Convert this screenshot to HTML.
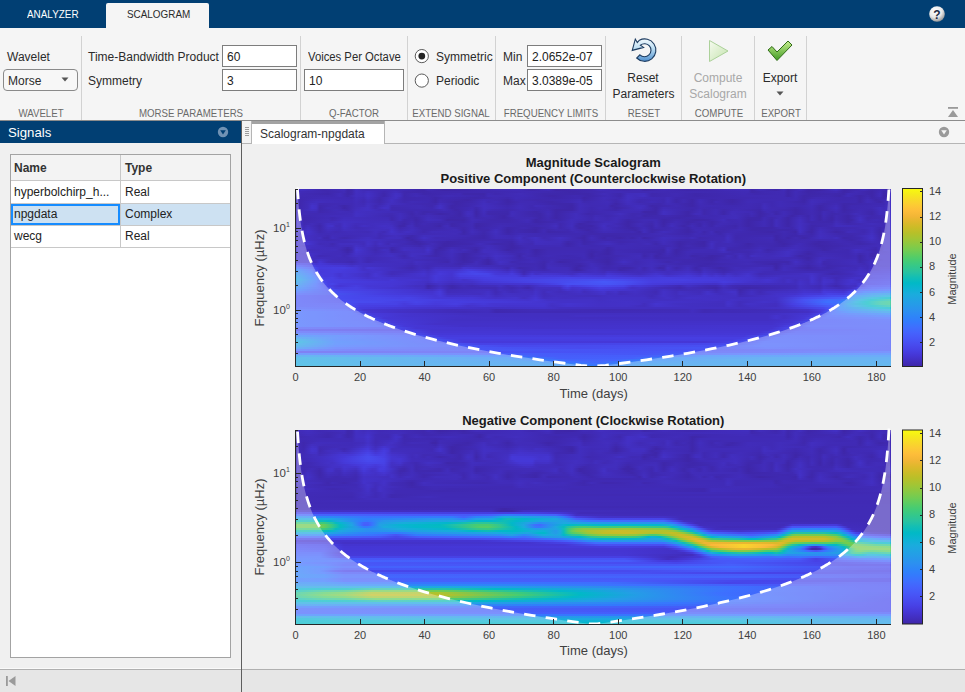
<!DOCTYPE html>
<html><head><meta charset="utf-8">
<style>
*{margin:0;padding:0;box-sizing:border-box}
html,body{width:965px;height:692px;overflow:hidden;background:#f0f0f0;font-family:"Liberation Sans",sans-serif;color:#222;position:relative}
.a{position:absolute}
.t{position:absolute;white-space:nowrap;line-height:12px;height:12px}
.sq{display:inline-block;transform-origin:0 0}
.tab{font-size:11px}
.sep{position:absolute;top:36px;width:1px;height:84px;background:#d2d2d2}
.lab{font-size:12px;color:#2b2b2b}
.sec{font-size:11px;color:#6a6a6a;text-align:center;width:0}
.sec span{display:inline-block;transform:translateX(-50%) scaleX(.88)}
.inp{position:absolute;background:#fff;border:1px solid #7d7d7d}
.inp span{position:absolute;left:4px;top:5px;font-size:12px;color:#222;line-height:12px}
.ctr{text-align:center;width:0}
.ctr span{display:inline-block;transform:translateX(-50%)}
</style></head><body>
<!-- top bar -->
<div class="a" style="left:0;top:0;width:965px;height:28px;background:#013f73"></div>
<div class="t tab" style="left:27px;top:8px;color:#fff"><span class="sq" style="transform:scaleX(.9)">ANALYZER</span></div>
<div class="a" style="left:106px;top:3px;width:103px;height:25px;background:#f5f5f5;border-radius:2px 2px 0 0"></div>
<div class="t tab" style="left:127px;top:8px;color:#2b2b2b"><span class="sq" style="transform:scaleX(.9)">SCALOGRAM</span></div>
<svg class="a" style="left:928px;top:5px" width="18" height="18" viewBox="0 0 18 18">
<defs><radialGradient id="hg" cx="40%" cy="30%" r="70%"><stop offset="0" stop-color="#ffffff"/><stop offset=".6" stop-color="#e8e8e8"/><stop offset="1" stop-color="#9a9a9a"/></radialGradient></defs>
<circle cx="9" cy="9" r="7.8" fill="url(#hg)"/>
<text x="9" y="13.6" text-anchor="middle" font-family="Liberation Sans" font-weight="bold" font-size="12" fill="#1d2a44">?</text>
</svg>
<!-- toolstrip -->
<div class="a" style="left:0;top:28px;width:965px;height:92px;background:#f5f5f5"></div>
<div class="a" style="left:0;top:120px;width:965px;height:1px;background:#8c8c8c"></div>
<div class="sep" style="left:81px"></div>
<div class="sep" style="left:300px"></div>
<div class="sep" style="left:407px"></div>
<div class="sep" style="left:495px"></div>
<div class="sep" style="left:605px"></div>
<div class="sep" style="left:681px"></div>
<div class="sep" style="left:754px"></div>
<div class="sep" style="left:806px"></div>

<div class="t lab" style="left:7px;top:51px">Wavelet</div>
<div class="a" style="left:3px;top:69px;width:75px;height:22px;border:1px solid #8a8a8a;border-radius:4px;background:#f7f7f7"></div>
<div class="t lab" style="left:8px;top:75px">Morse</div>
<svg class="a" style="left:61px;top:77px" width="9" height="6"><path d="M0.5 0.5 L7.5 0.5 L4 4.5Z" fill="#555"/></svg>

<div class="t lab" style="left:88px;top:51px">Time-Bandwidth Product</div>
<div class="t lab" style="left:88px;top:75px">Symmetry</div>
<div class="inp" style="left:222px;top:45px;width:75px;height:22px"><span>60</span></div>
<div class="inp" style="left:222px;top:69px;width:75px;height:22px"><span>3</span></div>

<div class="t lab" style="left:308px;top:51px"><span class="sq" style="transform:scaleX(.94)">Voices Per Octave</span></div>
<div class="inp" style="left:304px;top:69px;width:100px;height:22px"><span>10</span></div>

<svg class="a" style="left:413px;top:47px" width="18" height="42">
<circle cx="8.8" cy="9.1" r="6.6" fill="#fff" stroke="#5a5a5a" stroke-width="1"/>
<circle cx="8.8" cy="9.1" r="3.4" fill="#222"/>
<circle cx="8.8" cy="33.6" r="6.6" fill="#fff" stroke="#5a5a5a" stroke-width="1"/>
</svg>
<div class="t lab" style="left:436px;top:51px">Symmetric</div>
<div class="t lab" style="left:436px;top:75px">Periodic</div>

<div class="t lab" style="left:503px;top:51px">Min</div>
<div class="t lab" style="left:503px;top:75px">Max</div>
<div class="inp" style="left:527px;top:45px;width:75px;height:22px"><span>2.0652e-07</span></div>
<div class="inp" style="left:527px;top:69px;width:75px;height:22px"><span>3.0389e-05</span></div>

<!-- reset icon -->
<svg class="a" style="left:626px;top:34px" width="36" height="32" viewBox="0 0 36 32">
<defs><linearGradient id="rg" x1="0" y1="0" x2="0" y2="1"><stop offset="0" stop-color="#f2f9fd"/><stop offset=".45" stop-color="#b9dcf2"/><stop offset="1" stop-color="#4f8fce"/></linearGradient></defs>
<path d="M10.7 24.0 A11.2 11.2 0 1 0 13.4 6.25 L11.3 8.6 L9.3 5.1 L6.25 16.4 L17.6 13.4 L14.4 11.15 A6.5 6.5 0 1 1 13.9 20.8 Z" fill="url(#rg)" stroke="#1c3b60" stroke-width="1.1" stroke-linejoin="miter"/>
</svg>
<div class="t lab ctr" style="left:643px;top:72px"><span>Reset</span></div>
<div class="t lab ctr" style="left:643.5px;top:88px"><span>Parameters</span></div>

<!-- play icon -->
<svg class="a" style="left:708px;top:39px" width="22" height="24">
<defs><linearGradient id="pg" x1="0" y1="0" x2="1" y2="1"><stop offset="0" stop-color="#f6fbf0"/><stop offset="1" stop-color="#c4e3ad"/></linearGradient></defs><path d="M1.5 1.5 L20 12 L1.5 22.5 Z" fill="url(#pg)" stroke="#acd19a" stroke-width="1"/>
</svg>
<div class="t lab ctr" style="left:718px;top:72px;color:#a8a8a8"><span>Compute</span></div>
<div class="t lab ctr" style="left:718px;top:88px;color:#a8a8a8"><span>Scalogram</span></div>

<!-- check icon -->
<svg class="a" style="left:766px;top:39px" width="28" height="24">
<defs><linearGradient id="cg" x1="0" y1="0" x2="0" y2="1"><stop offset="0" stop-color="#c9ef8f"/><stop offset="1" stop-color="#3f9a24"/></linearGradient></defs>
<path d="M2 11 L6 7.5 L11 13 L22 2 L26 6 L11 21.5 Z" fill="url(#cg)" stroke="#2f6b16" stroke-width="1" stroke-linejoin="miter"/>
</svg>
<div class="t lab ctr" style="left:780px;top:72px"><span>Export</span></div>
<svg class="a" style="left:776px;top:91px" width="9" height="6"><path d="M0.5 0.5 L7.5 0.5 L4 4.5Z" fill="#555"/></svg>

<!-- collapse -->
<svg class="a" style="left:947px;top:106px" width="12" height="12">
<rect x="1" y="1" width="10" height="1.8" fill="#9a9a9a"/>
<path d="M6 4 L11 11 L1 11 Z" fill="#9a9a9a"/>
</svg>

<div class="t sec" style="left:40.5px;top:107px"><span>WAVELET</span></div>
<div class="t sec" style="left:191px;top:107px"><span>MORSE PARAMETERS</span></div>
<div class="t sec" style="left:354px;top:107px"><span>Q-FACTOR</span></div>
<div class="t sec" style="left:451px;top:107px"><span>EXTEND SIGNAL</span></div>
<div class="t sec" style="left:550.5px;top:107px"><span>FREQUENCY LIMITS</span></div>
<div class="t sec" style="left:643.5px;top:107px"><span>RESET</span></div>
<div class="t sec" style="left:718.5px;top:107px"><span>COMPUTE</span></div>
<div class="t sec" style="left:780.5px;top:107px"><span>EXPORT</span></div>

<!-- left panel -->
<div class="a" style="left:0;top:121px;width:241px;height:22px;background:#013f73"></div>
<div class="t" style="left:8px;top:125.5px;font-size:13.2px;line-height:14px;height:14px;color:#fff">Signals</div>
<svg class="a" style="left:217px;top:126px" width="12" height="12">
<circle cx="6" cy="6" r="5.2" fill="#7092b4"/>
<path d="M3.2 4.2 L8.8 4.2 L6 8.6 Z" fill="#013f73"/>
</svg>
<div class="a" style="left:241px;top:121px;width:1px;height:571px;background:#5e5e5e"></div>

<div class="a" style="left:10px;top:154px;width:221px;height:504px;background:#fff;border:1px solid #a3a3a3"></div>
<div class="a" style="left:11px;top:155px;width:219px;height:26px;background:#f3f3f3;border-bottom:1px solid #c8c8c8"></div>
<div class="a" style="left:11px;top:203px;width:219px;height:1px;background:#c8c8c8"></div>
<div class="a" style="left:11px;top:204px;width:219px;height:21px;background:#cde1f2"></div>
<div class="a" style="left:11px;top:225px;width:219px;height:1px;background:#c8c8c8"></div>
<div class="a" style="left:11px;top:247px;width:219px;height:1px;background:#c8c8c8"></div>
<div class="a" style="left:120px;top:155px;width:1px;height:92px;background:#c8c8c8"></div>
<div class="a" style="left:11px;top:204px;width:109px;height:21px;border:2px solid #168cff"></div>
<div class="t" style="left:14px;top:162px;font-size:12px;font-weight:bold;color:#333">Name</div>
<div class="t" style="left:125px;top:162px;font-size:12px;font-weight:bold;color:#333">Type</div>
<div class="t" style="left:14px;top:186px;font-size:12px;color:#222">hyperbolchirp_h...</div>
<div class="t" style="left:125px;top:186px;font-size:12px;color:#222">Real</div>
<div class="t" style="left:14px;top:208px;font-size:12px;color:#222">npgdata</div>
<div class="t" style="left:125px;top:208px;font-size:12px;color:#222">Complex</div>
<div class="t" style="left:14px;top:230px;font-size:12px;color:#222">wecg</div>
<div class="t" style="left:125px;top:230px;font-size:12px;color:#222">Real</div>

<!-- status bar -->
<div class="a" style="left:0;top:668px;width:241px;height:1px;background:#fafafa"></div>
<div class="a" style="left:0;top:669px;width:965px;height:23px;background:#e6e6e6;border-top:1px solid #b0b0b0"></div>
<div class="a" style="left:241px;top:669px;width:1px;height:23px;background:#5e5e5e"></div>
<svg class="a" style="left:5px;top:675px" width="12" height="12">
<rect x="1" y="1" width="1.8" height="10" fill="#9a9a9a"/>
<path d="M10.5 1 L10.5 11 L3.5 6 Z" fill="#9a9a9a"/>
</svg>

<!-- document tabs -->
<div class="a" style="left:242px;top:121px;width:10px;height:23px;background:#f3f3f3;border-right:1px solid #b5b5b5;border-bottom:1px solid #b5b5b5"></div>
<svg class="a" style="left:244px;top:126px" width="7" height="11">
<g fill="#9c9c9c"><rect x="1" y="1" width="4" height="1"/><rect x="1" y="3" width="4" height="1"/><rect x="1" y="5" width="4" height="1"/><rect x="1" y="7" width="4" height="1"/><rect x="1" y="9" width="4" height="1"/></g>
</svg>
<div class="a" style="left:252px;top:121px;width:133px;height:23px;background:#fff"></div>
<div class="a" style="left:252px;top:121px;width:133px;height:3px;background:#a3a3a3"></div>
<div class="t" style="left:260px;top:128px;font-size:12px;color:#333">Scalogram-npgdata</div>
<div class="a" style="left:384px;top:121px;width:581px;height:23px;background:#f5f5f5;border-left:1px solid #b5b5b5;border-bottom:1px solid #b5b5b5"></div>
<svg class="a" style="left:938px;top:126px" width="12" height="12">
<circle cx="6" cy="6" r="5.2" fill="#9a9a9a"/>
<path d="M3.2 4.2 L8.8 4.2 L6 8.6 Z" fill="#f5f5f5"/>
</svg>

<svg class="a" style="left:0;top:0" width="965" height="692"><defs><linearGradient id=a0><stop offset=.000 stop-color=#422fc2 /><stop offset=.013 stop-color=#412ebe /><stop offset=.047 stop-color=#3f28ae /><stop offset=.081 stop-color=#412cb9 /><stop offset=.087 stop-color=#3e27aa /><stop offset=.094 stop-color=#3e28ac /><stop offset=.101 stop-color=#422fc0 /><stop offset=.114 stop-color=#402bb6 /><stop offset=.128 stop-color=#402bb6 /><stop offset=.148 stop-color=#402ab3 /><stop offset=.168 stop-color=#402bb7 /><stop offset=.202 stop-color=#3e27ac /><stop offset=.215 stop-color=#3e26a9 /><stop offset=.222 stop-color=#402ab3 /><stop offset=.249 stop-color=#3e26a8 /><stop offset=.289 stop-color=#3e27ac /><stop offset=.309 stop-color=#3f29af /><stop offset=.336 stop-color=#402ab4 /><stop offset=.376 stop-color=#402bb7 /><stop offset=.397 stop-color=#3e27ac /><stop offset=.424 stop-color=#402bb8 /><stop offset=.437 stop-color=#3e26a8 /><stop offset=.497 stop-color=#3f28af /><stop offset=.511 stop-color=#412cba /><stop offset=.551 stop-color=#3f28af /><stop offset=.578 stop-color=#402ab4 /><stop offset=.585 stop-color=#3e26a8 /><stop offset=.618 stop-color=#402ab5 /><stop offset=.659 stop-color=#3e27ac /><stop offset=.699 stop-color=#3f28af /><stop offset=.719 stop-color=#402ab5 /><stop offset=.760 stop-color=#412cb9 /><stop offset=.766 stop-color=#3e26a8 /><stop offset=.780 stop-color=#402bb6 /><stop offset=.807 stop-color=#3e27a9 /><stop offset=.820 stop-color=#402bb7 /><stop offset=.827 stop-color=#3e26a8 /><stop offset=.847 stop-color=#412cb9 /><stop offset=.861 stop-color=#3e26a8 /><stop offset=.881 stop-color=#3e26a8 /><stop offset=.908 stop-color=#412ebe /><stop offset=.921 stop-color=#3e26a8 /><stop offset=.955 stop-color=#402bb7 /><stop offset=.968 stop-color=#3e27aa /><stop offset=.982 stop-color=#402ab4 /><stop offset=.995 stop-color=#3f28af /><stop offset=1.000 stop-color=#422fc2 /></linearGradient><linearGradient id=a1><stop offset=.000 stop-color=#422fc3 /><stop offset=.007 stop-color=#402bb8 /><stop offset=.027 stop-color=#402ab4 /><stop offset=.054 stop-color=#3f28ae /><stop offset=.081 stop-color=#402bb6 /><stop offset=.087 stop-color=#3e27aa /><stop offset=.094 stop-color=#3f28ad /><stop offset=.101 stop-color=#422fc0 /><stop offset=.114 stop-color=#412cb9 /><stop offset=.121 stop-color=#422ec0 /><stop offset=.148 stop-color=#3f28af /><stop offset=.168 stop-color=#412dbd /><stop offset=.182 stop-color=#3f28ae /><stop offset=.215 stop-color=#3e27aa /><stop offset=.229 stop-color=#3f28ae /><stop offset=.249 stop-color=#3f28ae /><stop offset=.289 stop-color=#3f28ae /><stop offset=.329 stop-color=#3f29b0 /><stop offset=.383 stop-color=#402ab5 /><stop offset=.417 stop-color=#3f29b0 /><stop offset=.464 stop-color=#3e27a9 /><stop offset=.497 stop-color=#3f29af /><stop offset=.524 stop-color=#402bb6 /><stop offset=.558 stop-color=#402ab4 /><stop offset=.585 stop-color=#402ab3 /><stop offset=.699 stop-color=#3f29b0 /><stop offset=.760 stop-color=#402bb6 /><stop offset=.766 stop-color=#3e27a9 /><stop offset=.787 stop-color=#3f29b1 /><stop offset=.813 stop-color=#402ab3 /><stop offset=.820 stop-color=#402ab5 /><stop offset=.827 stop-color=#3e26a8 /><stop offset=.840 stop-color=#402bb7 /><stop offset=.861 stop-color=#3e26a8 /><stop offset=.908 stop-color=#402ab5 /><stop offset=.921 stop-color=#3e26a8 /><stop offset=.941 stop-color=#402ab4 /><stop offset=.968 stop-color=#3e26a8 /><stop offset=.982 stop-color=#402bb7 /><stop offset=.988 stop-color=#3e28ac /><stop offset=.995 stop-color=#3f28ae /><stop offset=1.000 stop-color=#422fc2 /></linearGradient><linearGradient id=a2><stop offset=.000 stop-color=#4230c3 /><stop offset=.007 stop-color=#402ab5 /><stop offset=.054 stop-color=#3e27ac /><stop offset=.074 stop-color=#412cba /><stop offset=.087 stop-color=#3e27aa /><stop offset=.094 stop-color=#3f28ae /><stop offset=.101 stop-color=#422ec0 /><stop offset=.114 stop-color=#412dbc /><stop offset=.121 stop-color=#4230c4 /><stop offset=.148 stop-color=#3e27ac /><stop offset=.168 stop-color=#4230c3 /><stop offset=.175 stop-color=#412ebe /><stop offset=.182 stop-color=#3f28ad /><stop offset=.202 stop-color=#402ab5 /><stop offset=.215 stop-color=#3e27ab /><stop offset=.276 stop-color=#4029b3 /><stop offset=.282 stop-color=#3e27ab /><stop offset=.316 stop-color=#3e27a9 /><stop offset=.323 stop-color=#402ab5 /><stop offset=.336 stop-color=#3f28af /><stop offset=.376 stop-color=#412cb8 /><stop offset=.417 stop-color=#3e28ac /><stop offset=.491 stop-color=#3e27aa /><stop offset=.518 stop-color=#412cb9 /><stop offset=.545 stop-color=#3e28ac /><stop offset=.558 stop-color=#412dbc /><stop offset=.585 stop-color=#412ebe /><stop offset=.598 stop-color=#3f28ad /><stop offset=.639 stop-color=#402ab4 /><stop offset=.672 stop-color=#3e27ab /><stop offset=.753 stop-color=#402ab5 /><stop offset=.773 stop-color=#3f28ae /><stop offset=.820 stop-color=#402ab4 /><stop offset=.827 stop-color=#3e26a8 /><stop offset=.840 stop-color=#402bb6 /><stop offset=.861 stop-color=#3e27a9 /><stop offset=.901 stop-color=#3f28ae /><stop offset=.921 stop-color=#3e27aa /><stop offset=.928 stop-color=#402bb7 /><stop offset=.955 stop-color=#3f28ae /><stop offset=.968 stop-color=#3e26a8 /><stop offset=.982 stop-color=#412cba /><stop offset=.988 stop-color=#3e27a9 /><stop offset=.995 stop-color=#3f28ad /><stop offset=1.000 stop-color=#4230c3 /></linearGradient><linearGradient id=a3><stop offset=.000 stop-color=#4230c3 /><stop offset=.007 stop-color=#402ab3 /><stop offset=.061 stop-color=#3f29b2 /><stop offset=.074 stop-color=#412cba /><stop offset=.087 stop-color=#3e28ac /><stop offset=.101 stop-color=#422ebf /><stop offset=.114 stop-color=#412dbc /><stop offset=.121 stop-color=#4330c5 /><stop offset=.148 stop-color=#3e27ab /><stop offset=.168 stop-color=#4330c5 /><stop offset=.175 stop-color=#422ec0 /><stop offset=.182 stop-color=#3e28ad /><stop offset=.202 stop-color=#402bb6 /><stop offset=.229 stop-color=#3f28ad /><stop offset=.255 stop-color=#402bb6 /><stop offset=.316 stop-color=#3e27ac /><stop offset=.323 stop-color=#402bb6 /><stop offset=.350 stop-color=#402ab3 /><stop offset=.383 stop-color=#402bb8 /><stop offset=.430 stop-color=#3e26a8 /><stop offset=.471 stop-color=#3f29b2 /><stop offset=.491 stop-color=#3e27aa /><stop offset=.524 stop-color=#402bb7 /><stop offset=.545 stop-color=#3e27ac /><stop offset=.558 stop-color=#422fc0 /><stop offset=.571 stop-color=#412dbb /><stop offset=.585 stop-color=#422fc1 /><stop offset=.598 stop-color=#3f28ae /><stop offset=.639 stop-color=#402ab3 /><stop offset=.672 stop-color=#3e27ab /><stop offset=.753 stop-color=#402ab3 /><stop offset=.807 stop-color=#402ab3 /><stop offset=.820 stop-color=#402ab3 /><stop offset=.827 stop-color=#3e26a8 /><stop offset=.840 stop-color=#402bb6 /><stop offset=.854 stop-color=#3e27a9 /><stop offset=.894 stop-color=#3f29b0 /><stop offset=.914 stop-color=#3e27a9 /><stop offset=.928 stop-color=#402bb8 /><stop offset=.948 stop-color=#3e26a8 /><stop offset=.961 stop-color=#3f29b0 /><stop offset=.968 stop-color=#3e26a8 /><stop offset=.982 stop-color=#412cb9 /><stop offset=.988 stop-color=#3e26a8 /><stop offset=.995 stop-color=#3f28ae /><stop offset=1.000 stop-color=#4230c3 /></linearGradient><linearGradient id=a4><stop offset=.000 stop-color=#4230c4 /><stop offset=.007 stop-color=#3f29b1 /><stop offset=.040 stop-color=#402ab5 /><stop offset=.081 stop-color=#402ab5 /><stop offset=.094 stop-color=#3f29b2 /><stop offset=.101 stop-color=#412dbd /><stop offset=.114 stop-color=#402bb8 /><stop offset=.121 stop-color=#422fc2 /><stop offset=.141 stop-color=#3f28ae /><stop offset=.168 stop-color=#4230c3 /><stop offset=.182 stop-color=#3f28ae /><stop offset=.222 stop-color=#3f29b1 /><stop offset=.235 stop-color=#3e27a9 /><stop offset=.249 stop-color=#3f29b2 /><stop offset=.303 stop-color=#3e27aa /><stop offset=.336 stop-color=#402ab3 /><stop offset=.356 stop-color=#3f28ae /><stop offset=.370 stop-color=#402bb7 /><stop offset=.437 stop-color=#3e27ab /><stop offset=.477 stop-color=#3f29b2 /><stop offset=.484 stop-color=#3e26a8 /><stop offset=.518 stop-color=#412cb9 /><stop offset=.545 stop-color=#3f29b0 /><stop offset=.558 stop-color=#422fc0 /><stop offset=.578 stop-color=#412cb8 /><stop offset=.592 stop-color=#402bb7 /><stop offset=.618 stop-color=#402ab3 /><stop offset=.625 stop-color=#412cb9 /><stop offset=.639 stop-color=#3f28af /><stop offset=.659 stop-color=#3f28ae /><stop offset=.672 stop-color=#3f28ae /><stop offset=.686 stop-color=#3f28af /><stop offset=.820 stop-color=#402ab3 /><stop offset=.834 stop-color=#3f29b2 /><stop offset=.840 stop-color=#402ab5 /><stop offset=.854 stop-color=#3e27a9 /><stop offset=.874 stop-color=#402ab3 /><stop offset=.921 stop-color=#3f28af /><stop offset=.941 stop-color=#3f29b0 /><stop offset=.948 stop-color=#3e26a8 /><stop offset=.961 stop-color=#402ab4 /><stop offset=.968 stop-color=#3e27aa /><stop offset=.982 stop-color=#3f29b1 /><stop offset=.988 stop-color=#3e27aa /><stop offset=.995 stop-color=#3f29b1 /><stop offset=1.000 stop-color=#4230c4 /></linearGradient><linearGradient id=a5><stop offset=.000 stop-color=#4230c4 /><stop offset=.007 stop-color=#3f28af /><stop offset=.034 stop-color=#412cba /><stop offset=.094 stop-color=#402ab5 /><stop offset=.101 stop-color=#412dbc /><stop offset=.114 stop-color=#402ab4 /><stop offset=.121 stop-color=#412ebe /><stop offset=.141 stop-color=#3e28ac /><stop offset=.161 stop-color=#422fc2 /><stop offset=.182 stop-color=#3f28af /><stop offset=.222 stop-color=#3f29b2 /><stop offset=.235 stop-color=#3e26a8 /><stop offset=.242 stop-color=#4029b2 /><stop offset=.289 stop-color=#3e26a8 /><stop offset=.316 stop-color=#402bb8 /><stop offset=.343 stop-color=#3f29b0 /><stop offset=.356 stop-color=#3e26a8 /><stop offset=.370 stop-color=#402ab5 /><stop offset=.410 stop-color=#3f28ad /><stop offset=.457 stop-color=#3f29b1 /><stop offset=.477 stop-color=#402cb8 /><stop offset=.484 stop-color=#3e27ab /><stop offset=.518 stop-color=#412cb8 /><stop offset=.538 stop-color=#3f28af /><stop offset=.558 stop-color=#422fc0 /><stop offset=.578 stop-color=#3f29b2 /><stop offset=.605 stop-color=#402ab5 /><stop offset=.618 stop-color=#3f29b1 /><stop offset=.625 stop-color=#412dbb /><stop offset=.639 stop-color=#3e27ab /><stop offset=.652 stop-color=#402ab3 /><stop offset=.666 stop-color=#3e26a8 /><stop offset=.679 stop-color=#402bb8 /><stop offset=.699 stop-color=#3e27ab /><stop offset=.713 stop-color=#3f29b1 /><stop offset=.733 stop-color=#3e26a8 /><stop offset=.760 stop-color=#402ab5 /><stop offset=.820 stop-color=#402ab3 /><stop offset=.840 stop-color=#402ab4 /><stop offset=.854 stop-color=#3e26a9 /><stop offset=.867 stop-color=#412cb9 /><stop offset=.914 stop-color=#3f28af /><stop offset=.941 stop-color=#3f29b1 /><stop offset=.948 stop-color=#3e26a8 /><stop offset=.961 stop-color=#412cb8 /><stop offset=.975 stop-color=#3e27aa /><stop offset=.995 stop-color=#402ab5 /><stop offset=1.000 stop-color=#4230c4 /></linearGradient><linearGradient id=a6><stop offset=.000 stop-color=#4330c5 /><stop offset=.007 stop-color=#3f28ae /><stop offset=.020 stop-color=#402bb8 /><stop offset=.034 stop-color=#412ebe /><stop offset=.054 stop-color=#412cb9 /><stop offset=.094 stop-color=#402ab6 /><stop offset=.101 stop-color=#412cbb /><stop offset=.114 stop-color=#402ab3 /><stop offset=.121 stop-color=#412dbd /><stop offset=.141 stop-color=#3f28ad /><stop offset=.161 stop-color=#422fc1 /><stop offset=.182 stop-color=#3f29b0 /><stop offset=.195 stop-color=#402bb6 /><stop offset=.222 stop-color=#3f29b2 /><stop offset=.235 stop-color=#3e26a8 /><stop offset=.242 stop-color=#402ab5 /><stop offset=.269 stop-color=#3e26a8 /><stop offset=.296 stop-color=#3f28ae /><stop offset=.316 stop-color=#412dbc /><stop offset=.323 stop-color=#402ab3 /><stop offset=.336 stop-color=#402bb7 /><stop offset=.356 stop-color=#3e26a8 /><stop offset=.376 stop-color=#402ab4 /><stop offset=.397 stop-color=#402ab4 /><stop offset=.410 stop-color=#3f28af /><stop offset=.430 stop-color=#3e27aa /><stop offset=.464 stop-color=#402ab5 /><stop offset=.477 stop-color=#412dbb /><stop offset=.484 stop-color=#3f29b0 /><stop offset=.524 stop-color=#412cb9 /><stop offset=.538 stop-color=#3f28ad /><stop offset=.558 stop-color=#422ebf /><stop offset=.578 stop-color=#3f29b0 /><stop offset=.598 stop-color=#402bb8 /><stop offset=.618 stop-color=#3f29b1 /><stop offset=.625 stop-color=#412dbb /><stop offset=.639 stop-color=#3e27ab /><stop offset=.652 stop-color=#402ab3 /><stop offset=.666 stop-color=#3e26a8 /><stop offset=.679 stop-color=#412cb9 /><stop offset=.699 stop-color=#3e27ab /><stop offset=.706 stop-color=#402ab5 /><stop offset=.733 stop-color=#3e26a8 /><stop offset=.760 stop-color=#402bb6 /><stop offset=.800 stop-color=#3f29b2 /><stop offset=.813 stop-color=#402bb7 /><stop offset=.854 stop-color=#3e27aa /><stop offset=.867 stop-color=#412dbb /><stop offset=.894 stop-color=#3f29b1 /><stop offset=.941 stop-color=#3f29b1 /><stop offset=.948 stop-color=#3e26a8 /><stop offset=.961 stop-color=#412cb9 /><stop offset=.982 stop-color=#3e26a8 /><stop offset=1.000 stop-color=#4330c4 /></linearGradient><linearGradient id=a7><stop offset=.000 stop-color=#4330c5 /><stop offset=.007 stop-color=#3f28ae /><stop offset=.020 stop-color=#412cb8 /><stop offset=.027 stop-color=#4230c3 /><stop offset=.034 stop-color=#422fc1 /><stop offset=.040 stop-color=#4029b2 /><stop offset=.074 stop-color=#402ab5 /><stop offset=.094 stop-color=#402ab4 /><stop offset=.101 stop-color=#412cba /><stop offset=.114 stop-color=#402bb6 /><stop offset=.121 stop-color=#422fc0 /><stop offset=.141 stop-color=#3f29b1 /><stop offset=.155 stop-color=#422fc0 /><stop offset=.188 stop-color=#402ab5 /><stop offset=.235 stop-color=#3f28ae /><stop offset=.242 stop-color=#412dbd /><stop offset=.269 stop-color=#3e26a8 /><stop offset=.303 stop-color=#402ab4 /><stop offset=.316 stop-color=#412ebe /><stop offset=.329 stop-color=#402bb8 /><stop offset=.356 stop-color=#3e27aa /><stop offset=.376 stop-color=#402bb7 /><stop offset=.397 stop-color=#402ab3 /><stop offset=.410 stop-color=#3f29b2 /><stop offset=.430 stop-color=#3e27ab /><stop offset=.464 stop-color=#3e27aa /><stop offset=.477 stop-color=#412cba /><stop offset=.491 stop-color=#402ab3 /><stop offset=.524 stop-color=#402bb8 /><stop offset=.538 stop-color=#3e26a8 /><stop offset=.558 stop-color=#412dbd /><stop offset=.598 stop-color=#3f29b0 /><stop offset=.612 stop-color=#3f28ad /><stop offset=.625 stop-color=#402bb8 /><stop offset=.666 stop-color=#3e26a8 /><stop offset=.679 stop-color=#402bb7 /><stop offset=.699 stop-color=#3f28ae /><stop offset=.713 stop-color=#3f29b2 /><stop offset=.733 stop-color=#3e27ab /><stop offset=.760 stop-color=#402ab5 /><stop offset=.780 stop-color=#3f29b1 /><stop offset=.787 stop-color=#412cb9 /><stop offset=.800 stop-color=#3f29b2 /><stop offset=.813 stop-color=#402bb7 /><stop offset=.854 stop-color=#3f28ae /><stop offset=.867 stop-color=#412cba /><stop offset=.887 stop-color=#3f28ad /><stop offset=.908 stop-color=#402ab5 /><stop offset=.921 stop-color=#3e27aa /><stop offset=.968 stop-color=#3f29b2 /><stop offset=.988 stop-color=#3f29b2 /><stop offset=1.000 stop-color=#4330c5 /></linearGradient><linearGradient id=a8><stop offset=.000 stop-color=#4330c5 /><stop offset=.007 stop-color=#3f28af /><stop offset=.020 stop-color=#412cb9 /><stop offset=.027 stop-color=#4332c9 /><stop offset=.034 stop-color=#4330c5 /><stop offset=.040 stop-color=#3f28ad /><stop offset=.067 stop-color=#402bb7 /><stop offset=.081 stop-color=#3e27a9 /><stop offset=.101 stop-color=#412cba /><stop offset=.114 stop-color=#412cb9 /><stop offset=.121 stop-color=#4230c3 /><stop offset=.134 stop-color=#3f29b2 /><stop offset=.155 stop-color=#4230c4 /><stop offset=.161 stop-color=#402ab4 /><stop offset=.208 stop-color=#402bb6 /><stop offset=.229 stop-color=#3f28ae /><stop offset=.242 stop-color=#4230c4 /><stop offset=.262 stop-color=#3e26a8 /><stop offset=.289 stop-color=#3f28af /><stop offset=.316 stop-color=#422ebf /><stop offset=.356 stop-color=#3f28af /><stop offset=.376 stop-color=#412cb9 /><stop offset=.397 stop-color=#3f29b2 /><stop offset=.403 stop-color=#412cba /><stop offset=.444 stop-color=#3e28ac /><stop offset=.464 stop-color=#3e26a8 /><stop offset=.477 stop-color=#412cba /><stop offset=.497 stop-color=#402ab3 /><stop offset=.524 stop-color=#402bb6 /><stop offset=.531 stop-color=#3e26a8 /><stop offset=.571 stop-color=#412dbd /><stop offset=.585 stop-color=#412dbc /><stop offset=.598 stop-color=#3e26a9 /><stop offset=.639 stop-color=#402ab5 /><stop offset=.666 stop-color=#3e26a8 /><stop offset=.679 stop-color=#402ab5 /><stop offset=.739 stop-color=#3f29b1 /><stop offset=.760 stop-color=#402ab4 /><stop offset=.780 stop-color=#3f29b0 /><stop offset=.787 stop-color=#412dbc /><stop offset=.800 stop-color=#3f29b2 /><stop offset=.813 stop-color=#402bb7 /><stop offset=.847 stop-color=#3f29b0 /><stop offset=.867 stop-color=#402bb8 /><stop offset=.881 stop-color=#3e27a9 /><stop offset=.908 stop-color=#412cba /><stop offset=.921 stop-color=#3e26a8 /><stop offset=.934 stop-color=#3f29b1 /><stop offset=.988 stop-color=#402ab5 /><stop offset=1.000 stop-color=#4330c5 /></linearGradient><linearGradient id=a9><stop offset=.000 stop-color=#4331c6 /><stop offset=.007 stop-color=#3f29b0 /><stop offset=.020 stop-color=#412cb9 /><stop offset=.027 stop-color=#4332ca /><stop offset=.034 stop-color=#4330c5 /><stop offset=.040 stop-color=#3e27ab /><stop offset=.054 stop-color=#402bb7 /><stop offset=.074 stop-color=#402ab3 /><stop offset=.081 stop-color=#3e26a8 /><stop offset=.101 stop-color=#412dbb /><stop offset=.121 stop-color=#4330c4 /><stop offset=.134 stop-color=#402ab4 /><stop offset=.148 stop-color=#4330c5 /><stop offset=.155 stop-color=#4230c4 /><stop offset=.161 stop-color=#3f29b0 /><stop offset=.208 stop-color=#402bb6 /><stop offset=.229 stop-color=#3f29b1 /><stop offset=.242 stop-color=#4330c5 /><stop offset=.262 stop-color=#3e26a8 /><stop offset=.296 stop-color=#402ab6 /><stop offset=.303 stop-color=#3f28ae /><stop offset=.316 stop-color=#422ebf /><stop offset=.356 stop-color=#3f29b1 /><stop offset=.376 stop-color=#412cba /><stop offset=.397 stop-color=#3f29b1 /><stop offset=.410 stop-color=#402ab5 /><stop offset=.464 stop-color=#3e26a8 /><stop offset=.477 stop-color=#412cb9 /><stop offset=.497 stop-color=#3f29b1 /><stop offset=.511 stop-color=#402bb7 /><stop offset=.524 stop-color=#402ab4 /><stop offset=.538 stop-color=#3e26a8 /><stop offset=.578 stop-color=#422ebf /><stop offset=.605 stop-color=#3e26a8 /><stop offset=.618 stop-color=#402bb7 /><stop offset=.659 stop-color=#3f28ae /><stop offset=.672 stop-color=#3f28af /><stop offset=.679 stop-color=#402ab4 /><stop offset=.692 stop-color=#3f29b1 /><stop offset=.760 stop-color=#402ab4 /><stop offset=.780 stop-color=#3f28af /><stop offset=.787 stop-color=#412dbc /><stop offset=.800 stop-color=#402ab3 /><stop offset=.820 stop-color=#402ab4 /><stop offset=.840 stop-color=#3e27ab /><stop offset=.867 stop-color=#402bb6 /><stop offset=.881 stop-color=#3e26a8 /><stop offset=.908 stop-color=#412dbd /><stop offset=.921 stop-color=#3e26a8 /><stop offset=.934 stop-color=#3f29b2 /><stop offset=.968 stop-color=#402ab3 /><stop offset=.982 stop-color=#412ebe /><stop offset=.988 stop-color=#402bb8 /><stop offset=1.000 stop-color=#4331c6 /></linearGradient><linearGradient id=a10><stop offset=.000 stop-color=#4331c6 /><stop offset=.007 stop-color=#3f29b1 /><stop offset=.027 stop-color=#4230c3 /><stop offset=.034 stop-color=#422ebf /><stop offset=.040 stop-color=#3e28ac /><stop offset=.067 stop-color=#402cb8 /><stop offset=.087 stop-color=#3f28ae /><stop offset=.101 stop-color=#422ebe /><stop offset=.121 stop-color=#4230c4 /><stop offset=.141 stop-color=#402bb7 /><stop offset=.155 stop-color=#412ebe /><stop offset=.161 stop-color=#3f29b1 /><stop offset=.208 stop-color=#3f29b2 /><stop offset=.235 stop-color=#3f29b2 /><stop offset=.249 stop-color=#412cb9 /><stop offset=.269 stop-color=#3e26a8 /><stop offset=.296 stop-color=#402bb8 /><stop offset=.303 stop-color=#3e27ab /><stop offset=.316 stop-color=#412ebe /><stop offset=.329 stop-color=#402ab4 /><stop offset=.356 stop-color=#3f28ae /><stop offset=.376 stop-color=#402bb7 /><stop offset=.410 stop-color=#3f29b1 /><stop offset=.424 stop-color=#402ab4 /><stop offset=.437 stop-color=#3e26a8 /><stop offset=.464 stop-color=#3e26a8 /><stop offset=.477 stop-color=#412cb9 /><stop offset=.497 stop-color=#3f29b0 /><stop offset=.511 stop-color=#402ab5 /><stop offset=.538 stop-color=#3e27ac /><stop offset=.551 stop-color=#402bb6 /><stop offset=.578 stop-color=#412cba /><stop offset=.605 stop-color=#3e26a8 /><stop offset=.618 stop-color=#412dbb /><stop offset=.666 stop-color=#3e27ac /><stop offset=.679 stop-color=#402bb7 /><stop offset=.686 stop-color=#3f28ad /><stop offset=.706 stop-color=#402bb6 /><stop offset=.719 stop-color=#3f28ad /><stop offset=.739 stop-color=#402bb6 /><stop offset=.780 stop-color=#3e27ab /><stop offset=.787 stop-color=#402bb8 /><stop offset=.827 stop-color=#3f28ae /><stop offset=.840 stop-color=#3e26a8 /><stop offset=.867 stop-color=#402ab5 /><stop offset=.881 stop-color=#3e26a8 /><stop offset=.908 stop-color=#412cb9 /><stop offset=.921 stop-color=#3e26a8 /><stop offset=.948 stop-color=#402ab5 /><stop offset=.968 stop-color=#3f28af /><stop offset=.982 stop-color=#412ebe /><stop offset=.988 stop-color=#412cb8 /><stop offset=1.000 stop-color=#4331c6 /></linearGradient><linearGradient id=a11><stop offset=.000 stop-color=#4331c7 /><stop offset=.007 stop-color=#402ab3 /><stop offset=.034 stop-color=#402bb8 /><stop offset=.040 stop-color=#3f28ae /><stop offset=.074 stop-color=#412cb9 /><stop offset=.094 stop-color=#402bb6 /><stop offset=.101 stop-color=#422fc2 /><stop offset=.128 stop-color=#412ebd /><stop offset=.168 stop-color=#402bb8 /><stop offset=.195 stop-color=#3f28ad /><stop offset=.202 stop-color=#402ab5 /><stop offset=.215 stop-color=#3e28ac /><stop offset=.229 stop-color=#3f28ad /><stop offset=.255 stop-color=#3f29b2 /><stop offset=.276 stop-color=#3e27a9 /><stop offset=.289 stop-color=#412dbd /><stop offset=.296 stop-color=#412cba /><stop offset=.303 stop-color=#3e26a8 /><stop offset=.316 stop-color=#412dbc /><stop offset=.323 stop-color=#3f28af /><stop offset=.356 stop-color=#3e28ac /><stop offset=.363 stop-color=#412cba /><stop offset=.403 stop-color=#3e27a9 /><stop offset=.424 stop-color=#402bb7 /><stop offset=.437 stop-color=#3e26a8 /><stop offset=.477 stop-color=#412cb9 /><stop offset=.497 stop-color=#3f28ae /><stop offset=.511 stop-color=#4029b3 /><stop offset=.538 stop-color=#402bb6 /><stop offset=.551 stop-color=#402bb8 /><stop offset=.578 stop-color=#402ab5 /><stop offset=.585 stop-color=#3e26a8 /><stop offset=.605 stop-color=#3e26a8 /><stop offset=.618 stop-color=#422fc0 /><stop offset=.659 stop-color=#3e26a8 /><stop offset=.679 stop-color=#412cb9 /><stop offset=.686 stop-color=#3f28ad /><stop offset=.706 stop-color=#402bb7 /><stop offset=.719 stop-color=#3e27aa /><stop offset=.733 stop-color=#412cba /><stop offset=.766 stop-color=#402ab5 /><stop offset=.780 stop-color=#3e26a8 /><stop offset=.793 stop-color=#402bb7 /><stop offset=.807 stop-color=#3e28ac /><stop offset=.820 stop-color=#402bb7 /><stop offset=.840 stop-color=#3e26a8 /><stop offset=.867 stop-color=#402ab4 /><stop offset=.881 stop-color=#3e27aa /><stop offset=.887 stop-color=#402bb6 /><stop offset=.901 stop-color=#3f28af /><stop offset=.908 stop-color=#402bb6 /><stop offset=.921 stop-color=#3e27aa /><stop offset=.948 stop-color=#402bb6 /><stop offset=.968 stop-color=#3e27ab /><stop offset=.982 stop-color=#412dbd /><stop offset=.988 stop-color=#412cb9 /><stop offset=1.000 stop-color=#4331c6 /></linearGradient><linearGradient id=a12><stop offset=.000 stop-color=#4331c7 /><stop offset=.007 stop-color=#402bb6 /><stop offset=.034 stop-color=#402ab3 /><stop offset=.081 stop-color=#402bb8 /><stop offset=.094 stop-color=#412cb9 /><stop offset=.101 stop-color=#4230c4 /><stop offset=.161 stop-color=#402ab3 /><stop offset=.175 stop-color=#412dbc /><stop offset=.195 stop-color=#3e27ab /><stop offset=.202 stop-color=#402ab3 /><stop offset=.215 stop-color=#3e28ac /><stop offset=.222 stop-color=#402ab5 /><stop offset=.242 stop-color=#3e26a8 /><stop offset=.262 stop-color=#3f29b0 /><stop offset=.276 stop-color=#3e26a8 /><stop offset=.289 stop-color=#422ebf /><stop offset=.296 stop-color=#412dbb /><stop offset=.303 stop-color=#3e26a8 /><stop offset=.316 stop-color=#412cba /><stop offset=.323 stop-color=#3f28ad /><stop offset=.356 stop-color=#3e27ab /><stop offset=.363 stop-color=#412dbb /><stop offset=.390 stop-color=#3f28ae /><stop offset=.410 stop-color=#3e27a9 /><stop offset=.424 stop-color=#412cb8 /><stop offset=.437 stop-color=#3e26a8 /><stop offset=.471 stop-color=#412dbc /><stop offset=.491 stop-color=#3e27ac /><stop offset=.511 stop-color=#3f29b1 /><stop offset=.531 stop-color=#402bb6 /><stop offset=.545 stop-color=#422ebe /><stop offset=.565 stop-color=#3f29b0 /><stop offset=.578 stop-color=#3f29b2 /><stop offset=.592 stop-color=#3e27aa /><stop offset=.605 stop-color=#3e27a9 /><stop offset=.618 stop-color=#422fc0 /><stop offset=.659 stop-color=#3e26a8 /><stop offset=.672 stop-color=#412cba /><stop offset=.679 stop-color=#412cba /><stop offset=.686 stop-color=#3f28ad /><stop offset=.706 stop-color=#402bb7 /><stop offset=.719 stop-color=#3e27aa /><stop offset=.733 stop-color=#412dbb /><stop offset=.760 stop-color=#3f29b1 /><stop offset=.766 stop-color=#402bb7 /><stop offset=.780 stop-color=#3e26a8 /><stop offset=.800 stop-color=#402bb6 /><stop offset=.807 stop-color=#3e27aa /><stop offset=.820 stop-color=#402bb8 /><stop offset=.840 stop-color=#3e26a8 /><stop offset=.854 stop-color=#3f28ad /><stop offset=.867 stop-color=#402ab4 /><stop offset=.881 stop-color=#3e27aa /><stop offset=.887 stop-color=#402bb8 /><stop offset=.901 stop-color=#3e28ac /><stop offset=.914 stop-color=#3f29b0 /><stop offset=.928 stop-color=#3f28ad /><stop offset=.941 stop-color=#412dbb /><stop offset=.968 stop-color=#3e27aa /><stop offset=.982 stop-color=#412dbc /><stop offset=.988 stop-color=#412cb9 /><stop offset=1.000 stop-color=#4331c7 /></linearGradient><linearGradient id=a13><stop offset=.000 stop-color=#4331c7 /><stop offset=.013 stop-color=#3f29b1 /><stop offset=.067 stop-color=#412cba /><stop offset=.094 stop-color=#412cba /><stop offset=.101 stop-color=#4230c3 /><stop offset=.161 stop-color=#3f29b1 /><stop offset=.175 stop-color=#412dbd /><stop offset=.195 stop-color=#3f28ad /><stop offset=.222 stop-color=#412cb9 /><stop offset=.276 stop-color=#3e27a9 /><stop offset=.289 stop-color=#412dbb /><stop offset=.296 stop-color=#412cba /><stop offset=.303 stop-color=#3e27ab /><stop offset=.316 stop-color=#402bb8 /><stop offset=.350 stop-color=#3e26a8 /><stop offset=.363 stop-color=#412cb9 /><stop offset=.410 stop-color=#3e27a9 /><stop offset=.424 stop-color=#402bb6 /><stop offset=.437 stop-color=#3e26a8 /><stop offset=.471 stop-color=#412dbc /><stop offset=.497 stop-color=#3f28af /><stop offset=.504 stop-color=#402bb7 /><stop offset=.524 stop-color=#3f29b1 /><stop offset=.545 stop-color=#412cb9 /><stop offset=.565 stop-color=#3f29b0 /><stop offset=.578 stop-color=#402ab4 /><stop offset=.585 stop-color=#3e27aa /><stop offset=.625 stop-color=#4029b2 /><stop offset=.659 stop-color=#3e26a8 /><stop offset=.679 stop-color=#402ab4 /><stop offset=.699 stop-color=#3f29b2 /><stop offset=.739 stop-color=#412dbb /><stop offset=.760 stop-color=#3f28ae /><stop offset=.766 stop-color=#402ab4 /><stop offset=.780 stop-color=#3e26a8 /><stop offset=.793 stop-color=#402ab4 /><stop offset=.820 stop-color=#402bb6 /><stop offset=.834 stop-color=#3e26a8 /><stop offset=.847 stop-color=#402ab6 /><stop offset=.861 stop-color=#3e27ac /><stop offset=.867 stop-color=#402bb6 /><stop offset=.881 stop-color=#3e26a8 /><stop offset=.887 stop-color=#402bb6 /><stop offset=.901 stop-color=#3e27aa /><stop offset=.908 stop-color=#402ab4 /><stop offset=.928 stop-color=#3e26a8 /><stop offset=.948 stop-color=#412dbc /><stop offset=.968 stop-color=#3f28af /><stop offset=.988 stop-color=#402bb6 /><stop offset=.995 stop-color=#4331c7 /><stop offset=1.000 stop-color=#4331c7 /></linearGradient><linearGradient id=a14><stop offset=.000 stop-color=#4331c8 /><stop offset=.013 stop-color=#3f28af /><stop offset=.054 stop-color=#402bb7 /><stop offset=.061 stop-color=#3f29b2 /><stop offset=.081 stop-color=#412dbd /><stop offset=.108 stop-color=#412dbc /><stop offset=.155 stop-color=#402bb8 /><stop offset=.161 stop-color=#3f28ae /><stop offset=.175 stop-color=#412dbd /><stop offset=.188 stop-color=#3f29b1 /><stop offset=.202 stop-color=#3e27ab /><stop offset=.222 stop-color=#412dbc /><stop offset=.262 stop-color=#3e27ab /><stop offset=.282 stop-color=#3e28ac /><stop offset=.296 stop-color=#412cba /><stop offset=.303 stop-color=#3f29b0 /><stop offset=.323 stop-color=#402ab3 /><stop offset=.350 stop-color=#3e26a9 /><stop offset=.370 stop-color=#402bb6 /><stop offset=.397 stop-color=#402ab3 /><stop offset=.410 stop-color=#3e27a9 /><stop offset=.424 stop-color=#402ab4 /><stop offset=.437 stop-color=#3e26a8 /><stop offset=.471 stop-color=#412dbc /><stop offset=.497 stop-color=#3f29b1 /><stop offset=.504 stop-color=#412cb9 /><stop offset=.524 stop-color=#402ab3 /><stop offset=.538 stop-color=#412cba /><stop offset=.565 stop-color=#3f29b1 /><stop offset=.612 stop-color=#3f28af /><stop offset=.645 stop-color=#3e27ab /><stop offset=.706 stop-color=#402ab4 /><stop offset=.739 stop-color=#412dbb /><stop offset=.760 stop-color=#3e27ab /><stop offset=.780 stop-color=#3e27aa /><stop offset=.787 stop-color=#402ab5 /><stop offset=.800 stop-color=#3f28ae /><stop offset=.813 stop-color=#402bb8 /><stop offset=.827 stop-color=#3e26a8 /><stop offset=.847 stop-color=#412dbb /><stop offset=.861 stop-color=#3f28ad /><stop offset=.867 stop-color=#402bb7 /><stop offset=.881 stop-color=#3e26a8 /><stop offset=.887 stop-color=#402ab4 /><stop offset=.901 stop-color=#3e26a8 /><stop offset=.908 stop-color=#402ab4 /><stop offset=.928 stop-color=#3e26a8 /><stop offset=.948 stop-color=#422fc1 /><stop offset=.961 stop-color=#3f28af /><stop offset=.988 stop-color=#402ab3 /><stop offset=.995 stop-color=#4331c8 /><stop offset=1.000 stop-color=#4331c8 /></linearGradient><linearGradient id=a15><stop offset=.000 stop-color=#4332c8 /><stop offset=.007 stop-color=#4230c3 /><stop offset=.013 stop-color=#3f28ae /><stop offset=.054 stop-color=#412cb9 /><stop offset=.061 stop-color=#402ab3 /><stop offset=.081 stop-color=#422ec0 /><stop offset=.141 stop-color=#412cba /><stop offset=.155 stop-color=#412cba /><stop offset=.161 stop-color=#3f28ae /><stop offset=.175 stop-color=#412dbc /><stop offset=.182 stop-color=#3f28af /><stop offset=.195 stop-color=#3f29b1 /><stop offset=.202 stop-color=#3e26a9 /><stop offset=.222 stop-color=#412ebd /><stop offset=.242 stop-color=#412cb9 /><stop offset=.255 stop-color=#3e26a8 /><stop offset=.282 stop-color=#3e27a9 /><stop offset=.296 stop-color=#412cb9 /><stop offset=.329 stop-color=#3f28ae /><stop offset=.356 stop-color=#3f28ad /><stop offset=.390 stop-color=#412cb9 /><stop offset=.403 stop-color=#3e26a8 /><stop offset=.424 stop-color=#4029b3 /><stop offset=.444 stop-color=#3e27ac /><stop offset=.464 stop-color=#412dbc /><stop offset=.497 stop-color=#3f29b2 /><stop offset=.504 stop-color=#412cb9 /><stop offset=.524 stop-color=#402ab4 /><stop offset=.538 stop-color=#412cba /><stop offset=.558 stop-color=#3e27ab /><stop offset=.585 stop-color=#402bb6 /><stop offset=.605 stop-color=#402bb6 /><stop offset=.618 stop-color=#3e26a8 /><stop offset=.639 stop-color=#3f29b1 /><stop offset=.672 stop-color=#3e26a8 /><stop offset=.692 stop-color=#3e27ac /><stop offset=.706 stop-color=#402ab3 /><stop offset=.719 stop-color=#412dbc /><stop offset=.726 stop-color=#3f29b2 /><stop offset=.746 stop-color=#402ab5 /><stop offset=.760 stop-color=#3e26a8 /><stop offset=.780 stop-color=#3e27ac /><stop offset=.787 stop-color=#402bb6 /><stop offset=.800 stop-color=#3e27ab /><stop offset=.807 stop-color=#412dbb /><stop offset=.827 stop-color=#3e26a8 /><stop offset=.847 stop-color=#422ebf /><stop offset=.861 stop-color=#3f28ae /><stop offset=.867 stop-color=#402bb8 /><stop offset=.881 stop-color=#3e26a8 /><stop offset=.887 stop-color=#3f29b2 /><stop offset=.901 stop-color=#3e26a8 /><stop offset=.908 stop-color=#402ab5 /><stop offset=.928 stop-color=#3e26a8 /><stop offset=.934 stop-color=#3e27a9 /><stop offset=.948 stop-color=#4230c3 /><stop offset=.961 stop-color=#3f29b1 /><stop offset=.975 stop-color=#402bb7 /><stop offset=.988 stop-color=#3f29b1 /><stop offset=.995 stop-color=#4331c8 /><stop offset=1.000 stop-color=#4331c8 /></linearGradient><linearGradient id=a16><stop offset=.000 stop-color=#4332c9 /><stop offset=.007 stop-color=#4331c7 /><stop offset=.013 stop-color=#3f29b0 /><stop offset=.061 stop-color=#412dbb /><stop offset=.081 stop-color=#4230c3 /><stop offset=.128 stop-color=#412dbc /><stop offset=.155 stop-color=#412ebd /><stop offset=.182 stop-color=#3f28ad /><stop offset=.195 stop-color=#402ab5 /><stop offset=.202 stop-color=#3e27ab /><stop offset=.222 stop-color=#402bb7 /><stop offset=.269 stop-color=#3e28ac /><stop offset=.282 stop-color=#3e27ac /><stop offset=.296 stop-color=#402bb8 /><stop offset=.309 stop-color=#3f29b0 /><stop offset=.356 stop-color=#3f28ae /><stop offset=.390 stop-color=#402bb7 /><stop offset=.403 stop-color=#3e26a8 /><stop offset=.437 stop-color=#3f29b1 /><stop offset=.450 stop-color=#402ab4 /><stop offset=.464 stop-color=#412dbc /><stop offset=.491 stop-color=#3e27ab /><stop offset=.518 stop-color=#402bb8 /><stop offset=.538 stop-color=#412cba /><stop offset=.558 stop-color=#3e26a8 /><stop offset=.585 stop-color=#402ab5 /><stop offset=.598 stop-color=#3f29b0 /><stop offset=.605 stop-color=#402bb8 /><stop offset=.618 stop-color=#3e26a8 /><stop offset=.639 stop-color=#402ab5 /><stop offset=.659 stop-color=#3e26a8 /><stop offset=.686 stop-color=#4029b2 /><stop offset=.699 stop-color=#3e27aa /><stop offset=.719 stop-color=#412cb8 /><stop offset=.733 stop-color=#3f29b2 /><stop offset=.746 stop-color=#402ab4 /><stop offset=.760 stop-color=#3e26a8 /><stop offset=.787 stop-color=#402bb7 /><stop offset=.800 stop-color=#3e27ab /><stop offset=.807 stop-color=#412dbc /><stop offset=.827 stop-color=#3e26a8 /><stop offset=.847 stop-color=#422ec0 /><stop offset=.861 stop-color=#3f28ae /><stop offset=.874 stop-color=#3f28ae /><stop offset=.901 stop-color=#3e27ac /><stop offset=.908 stop-color=#412cb8 /><stop offset=.928 stop-color=#3e26a8 /><stop offset=.948 stop-color=#412ebe /><stop offset=.961 stop-color=#402ab5 /><stop offset=.988 stop-color=#3f29b2 /><stop offset=.995 stop-color=#4332c8 /><stop offset=1.000 stop-color=#4332c8 /></linearGradient><linearGradient id=a17><stop offset=.000 stop-color=#4332c9 /><stop offset=.007 stop-color=#4332c8 /><stop offset=.013 stop-color=#3f29b1 /><stop offset=.027 stop-color=#412cb9 /><stop offset=.040 stop-color=#3f29b0 /><stop offset=.054 stop-color=#4230c4 /><stop offset=.074 stop-color=#412cba /><stop offset=.081 stop-color=#4331c6 /><stop offset=.101 stop-color=#412cbb /><stop offset=.155 stop-color=#422fc1 /><stop offset=.182 stop-color=#3e27aa /><stop offset=.195 stop-color=#402cb8 /><stop offset=.202 stop-color=#3e28ac /><stop offset=.215 stop-color=#402ab5 /><stop offset=.242 stop-color=#3e28ac /><stop offset=.255 stop-color=#402ab4 /><stop offset=.262 stop-color=#3e27a9 /><stop offset=.296 stop-color=#402bb7 /><stop offset=.303 stop-color=#3e27a9 /><stop offset=.343 stop-color=#402ab3 /><stop offset=.397 stop-color=#3f29b1 /><stop offset=.410 stop-color=#3f28ad /><stop offset=.437 stop-color=#412cb9 /><stop offset=.444 stop-color=#3f28ae /><stop offset=.464 stop-color=#412dbd /><stop offset=.477 stop-color=#3e26a8 /><stop offset=.504 stop-color=#402ab3 /><stop offset=.518 stop-color=#412ebe /><stop offset=.531 stop-color=#412cba /><stop offset=.558 stop-color=#3e26a8 /><stop offset=.578 stop-color=#412cb8 /><stop offset=.598 stop-color=#3f28ad /><stop offset=.605 stop-color=#412cb9 /><stop offset=.618 stop-color=#3e26a8 /><stop offset=.632 stop-color=#412cba /><stop offset=.659 stop-color=#3e27a9 /><stop offset=.666 stop-color=#402ab3 /><stop offset=.679 stop-color=#3e27ab /><stop offset=.686 stop-color=#402ab5 /><stop offset=.699 stop-color=#3e27aa /><stop offset=.713 stop-color=#402bb7 /><stop offset=.739 stop-color=#3f29b0 /><stop offset=.746 stop-color=#402ab3 /><stop offset=.760 stop-color=#3e26a8 /><stop offset=.787 stop-color=#402bb7 /><stop offset=.800 stop-color=#3e27ab /><stop offset=.807 stop-color=#412dbd /><stop offset=.827 stop-color=#3e26a8 /><stop offset=.847 stop-color=#422fc0 /><stop offset=.867 stop-color=#3f28af /><stop offset=.901 stop-color=#3f29b0 /><stop offset=.908 stop-color=#412dbc /><stop offset=.928 stop-color=#3f28ae /><stop offset=.968 stop-color=#412dbb /><stop offset=.988 stop-color=#402ab4 /><stop offset=.995 stop-color=#4332c9 /><stop offset=1.000 stop-color=#4332c9 /></linearGradient><linearGradient id=a18><stop offset=.000 stop-color=#4332c9 /><stop offset=.007 stop-color=#4332c9 /><stop offset=.013 stop-color=#402ab3 /><stop offset=.020 stop-color=#422ebe /><stop offset=.040 stop-color=#3e27ac /><stop offset=.054 stop-color=#4331c7 /><stop offset=.061 stop-color=#4332c9 /><stop offset=.067 stop-color=#412cb9 /><stop offset=.074 stop-color=#412cb8 /><stop offset=.081 stop-color=#4331c8 /><stop offset=.101 stop-color=#402bb8 /><stop offset=.114 stop-color=#422fc3 /><stop offset=.128 stop-color=#412dbd /><stop offset=.148 stop-color=#4330c5 /><stop offset=.161 stop-color=#422fc1 /><stop offset=.175 stop-color=#3e27ab /><stop offset=.182 stop-color=#3e27aa /><stop offset=.188 stop-color=#412cb9 /><stop offset=.195 stop-color=#412dbb /><stop offset=.202 stop-color=#3f28ae /><stop offset=.215 stop-color=#4029b2 /><stop offset=.229 stop-color=#3f29b0 /><stop offset=.242 stop-color=#3e26a8 /><stop offset=.249 stop-color=#402bb7 /><stop offset=.255 stop-color=#412cb9 /><stop offset=.262 stop-color=#3e27aa /><stop offset=.296 stop-color=#402bb6 /><stop offset=.303 stop-color=#3e26a8 /><stop offset=.343 stop-color=#402bb6 /><stop offset=.376 stop-color=#3f29b0 /><stop offset=.397 stop-color=#3f28af /><stop offset=.424 stop-color=#402ab4 /><stop offset=.437 stop-color=#422ebe /><stop offset=.444 stop-color=#3f28af /><stop offset=.464 stop-color=#412ebe /><stop offset=.471 stop-color=#3e28ac /><stop offset=.497 stop-color=#3e26a9 /><stop offset=.518 stop-color=#422fc2 /><stop offset=.524 stop-color=#402bb7 /><stop offset=.538 stop-color=#412cb9 /><stop offset=.558 stop-color=#3e26a8 /><stop offset=.578 stop-color=#402bb8 /><stop offset=.598 stop-color=#3e27ab /><stop offset=.605 stop-color=#412cb9 /><stop offset=.618 stop-color=#3e27aa /><stop offset=.632 stop-color=#412dbd /><stop offset=.652 stop-color=#3e26a8 /><stop offset=.666 stop-color=#402bb7 /><stop offset=.679 stop-color=#3e27ac /><stop offset=.686 stop-color=#402bb7 /><stop offset=.699 stop-color=#3e27ab /><stop offset=.706 stop-color=#402bb6 /><stop offset=.739 stop-color=#3e27ac /><stop offset=.746 stop-color=#402ab3 /><stop offset=.760 stop-color=#3e26a8 /><stop offset=.787 stop-color=#402bb6 /><stop offset=.800 stop-color=#3e27ab /><stop offset=.807 stop-color=#412dbc /><stop offset=.827 stop-color=#3e26a9 /><stop offset=.847 stop-color=#422fc1 /><stop offset=.867 stop-color=#3e27ab /><stop offset=.901 stop-color=#4029b3 /><stop offset=.908 stop-color=#412dbd /><stop offset=.955 stop-color=#402bb7 /><stop offset=.975 stop-color=#402bb6 /><stop offset=.988 stop-color=#402ab5 /><stop offset=.995 stop-color=#4332c9 /><stop offset=1.000 stop-color=#4332c9 /></linearGradient><linearGradient id=a19><stop offset=.000 stop-color=#4332ca /><stop offset=.007 stop-color=#4332ca /><stop offset=.013 stop-color=#402bb7 /><stop offset=.020 stop-color=#4230c3 /><stop offset=.040 stop-color=#3f28ad /><stop offset=.054 stop-color=#4230c3 /><stop offset=.074 stop-color=#402cb8 /><stop offset=.081 stop-color=#4230c4 /><stop offset=.101 stop-color=#402bb6 /><stop offset=.161 stop-color=#4330c5 /><stop offset=.175 stop-color=#3f29b0 /><stop offset=.195 stop-color=#412dbc /><stop offset=.208 stop-color=#3f29b1 /><stop offset=.242 stop-color=#3f29af /><stop offset=.255 stop-color=#402cb8 /><stop offset=.282 stop-color=#3f28ad /><stop offset=.296 stop-color=#402bb8 /><stop offset=.303 stop-color=#3e27ab /><stop offset=.343 stop-color=#402bb8 /><stop offset=.356 stop-color=#3e27ab /><stop offset=.383 stop-color=#402ab3 /><stop offset=.403 stop-color=#3e27a9 /><stop offset=.437 stop-color=#412cb9 /><stop offset=.444 stop-color=#3f28ae /><stop offset=.464 stop-color=#412dbb /><stop offset=.477 stop-color=#3e26a8 /><stop offset=.504 stop-color=#3f28af /><stop offset=.518 stop-color=#422ebf /><stop offset=.531 stop-color=#402bb7 /><stop offset=.565 stop-color=#3e26a8 /><stop offset=.585 stop-color=#402bb8 /><stop offset=.598 stop-color=#3e27ab /><stop offset=.605 stop-color=#402ab5 /><stop offset=.618 stop-color=#3f29b0 /><stop offset=.639 stop-color=#402bb7 /><stop offset=.659 stop-color=#3e27a9 /><stop offset=.666 stop-color=#402ab5 /><stop offset=.739 stop-color=#3f28ae /><stop offset=.746 stop-color=#402ab5 /><stop offset=.766 stop-color=#3e27ab /><stop offset=.800 stop-color=#3e27aa /><stop offset=.813 stop-color=#402ab4 /><stop offset=.834 stop-color=#3f28ae /><stop offset=.847 stop-color=#422fc2 /><stop offset=.867 stop-color=#3e27aa /><stop offset=.881 stop-color=#402bb7 /><stop offset=.901 stop-color=#3f28af /><stop offset=.941 stop-color=#402ab4 /><stop offset=.968 stop-color=#412dbc /><stop offset=.982 stop-color=#3f28ae /><stop offset=.988 stop-color=#402ab4 /><stop offset=.995 stop-color=#4332c9 /><stop offset=1.000 stop-color=#4332c9 /></linearGradient><linearGradient id=a20><stop offset=.000 stop-color=#4332ca /><stop offset=.007 stop-color=#4332ca /><stop offset=.013 stop-color=#412dbb /><stop offset=.020 stop-color=#4331c7 /><stop offset=.040 stop-color=#3f28ae /><stop offset=.054 stop-color=#422ebf /><stop offset=.074 stop-color=#402bb8 /><stop offset=.081 stop-color=#422fc0 /><stop offset=.108 stop-color=#412cb9 /><stop offset=.134 stop-color=#422fc0 /><stop offset=.155 stop-color=#422ebe /><stop offset=.161 stop-color=#4331c8 /><stop offset=.175 stop-color=#402ab5 /><stop offset=.195 stop-color=#412ebe /><stop offset=.215 stop-color=#3f28af /><stop offset=.269 stop-color=#412cb9 /><stop offset=.282 stop-color=#3e27ab /><stop offset=.296 stop-color=#412cba /><stop offset=.309 stop-color=#3f28ae /><stop offset=.323 stop-color=#3f28af /><stop offset=.336 stop-color=#412ebe /><stop offset=.356 stop-color=#3e26a8 /><stop offset=.370 stop-color=#3f29b1 /><stop offset=.403 stop-color=#3e26a8 /><stop offset=.417 stop-color=#402ab5 /><stop offset=.424 stop-color=#3f28ad /><stop offset=.437 stop-color=#402ab3 /><stop offset=.457 stop-color=#3f29b1 /><stop offset=.464 stop-color=#412cb9 /><stop offset=.491 stop-color=#3e26a8 /><stop offset=.518 stop-color=#412dbc /><stop offset=.571 stop-color=#3e27aa /><stop offset=.585 stop-color=#412dbb /><stop offset=.598 stop-color=#3e27ab /><stop offset=.632 stop-color=#402bb6 /><stop offset=.659 stop-color=#3e26a8 /><stop offset=.672 stop-color=#402bb6 /><stop offset=.692 stop-color=#402ab3 /><stop offset=.719 stop-color=#3f28ae /><stop offset=.746 stop-color=#402bb6 /><stop offset=.766 stop-color=#3e27aa /><stop offset=.807 stop-color=#3e28ac /><stop offset=.827 stop-color=#3e27ac /><stop offset=.840 stop-color=#3f28af /><stop offset=.847 stop-color=#422fc3 /><stop offset=.867 stop-color=#3e26a8 /><stop offset=.881 stop-color=#412cbb /><stop offset=.908 stop-color=#3f28ad /><stop offset=.934 stop-color=#402bb7 /><stop offset=.955 stop-color=#3f29b2 /><stop offset=.968 stop-color=#412dbd /><stop offset=.982 stop-color=#3e27ab /><stop offset=.995 stop-color=#4332ca /><stop offset=1.000 stop-color=#4332ca /></linearGradient><linearGradient id=a21><stop offset=.000 stop-color=#4332cb /><stop offset=.007 stop-color=#4332cb /><stop offset=.013 stop-color=#422ebf /><stop offset=.020 stop-color=#4433cb /><stop offset=.040 stop-color=#3f29b0 /><stop offset=.054 stop-color=#412cbb /><stop offset=.067 stop-color=#402ab4 /><stop offset=.087 stop-color=#412cba /><stop offset=.121 stop-color=#402bb6 /><stop offset=.134 stop-color=#422ec0 /><stop offset=.148 stop-color=#402ab5 /><stop offset=.161 stop-color=#4332ca /><stop offset=.175 stop-color=#412cb9 /><stop offset=.188 stop-color=#422fc2 /><stop offset=.215 stop-color=#3f28ae /><stop offset=.229 stop-color=#412cb9 /><stop offset=.276 stop-color=#402bb8 /><stop offset=.282 stop-color=#3e27a9 /><stop offset=.296 stop-color=#412dbb /><stop offset=.316 stop-color=#3f28ad /><stop offset=.336 stop-color=#422fc0 /><stop offset=.356 stop-color=#3e26a8 /><stop offset=.370 stop-color=#3f29b2 /><stop offset=.403 stop-color=#3e26a8 /><stop offset=.417 stop-color=#402ab5 /><stop offset=.424 stop-color=#3e27aa /><stop offset=.457 stop-color=#3f28af /><stop offset=.471 stop-color=#402bb7 /><stop offset=.497 stop-color=#3e27ab /><stop offset=.518 stop-color=#402bb8 /><stop offset=.558 stop-color=#3f29b0 /><stop offset=.565 stop-color=#402ab3 /><stop offset=.578 stop-color=#3e26a9 /><stop offset=.585 stop-color=#412dbc /><stop offset=.598 stop-color=#3e27ab /><stop offset=.618 stop-color=#412dbc /><stop offset=.659 stop-color=#3e26a8 /><stop offset=.679 stop-color=#402bb8 /><stop offset=.686 stop-color=#3e27ac /><stop offset=.699 stop-color=#412cb9 /><stop offset=.706 stop-color=#3e27aa /><stop offset=.733 stop-color=#402ab4 /><stop offset=.753 stop-color=#3f29b1 /><stop offset=.800 stop-color=#3e26a8 /><stop offset=.820 stop-color=#402ab3 /><stop offset=.840 stop-color=#3e26a8 /><stop offset=.847 stop-color=#422fc2 /><stop offset=.861 stop-color=#3e27aa /><stop offset=.867 stop-color=#3e26a8 /><stop offset=.881 stop-color=#412ebe /><stop offset=.894 stop-color=#402ab3 /><stop offset=.908 stop-color=#3e26a8 /><stop offset=.921 stop-color=#3f28ae /><stop offset=.928 stop-color=#412cba /><stop offset=.955 stop-color=#3f29b1 /><stop offset=.968 stop-color=#412ebe /><stop offset=.982 stop-color=#3e27a9 /><stop offset=.995 stop-color=#4332ca /><stop offset=1.000 stop-color=#4332ca /></linearGradient><linearGradient id=a22><stop offset=.000 stop-color=#4433cb /><stop offset=.013 stop-color=#422fc2 /><stop offset=.020 stop-color=#4331c8 /><stop offset=.040 stop-color=#402bb6 /><stop offset=.121 stop-color=#412cba /><stop offset=.134 stop-color=#422ebe /><stop offset=.141 stop-color=#402ab5 /><stop offset=.161 stop-color=#4330c5 /><stop offset=.208 stop-color=#402ab5 /><stop offset=.269 stop-color=#412cb9 /><stop offset=.282 stop-color=#3e28ac /><stop offset=.296 stop-color=#402bb8 /><stop offset=.316 stop-color=#3e28ac /><stop offset=.336 stop-color=#412ebe /><stop offset=.356 stop-color=#3e27ac /><stop offset=.376 stop-color=#402bb8 /><stop offset=.430 stop-color=#3f29b1 /><stop offset=.477 stop-color=#3f29b2 /><stop offset=.491 stop-color=#3f28ad /><stop offset=.578 stop-color=#3f28ad /><stop offset=.592 stop-color=#3f29b2 /><stop offset=.612 stop-color=#412cb8 /><stop offset=.645 stop-color=#3f28af /><stop offset=.659 stop-color=#3e27ac /><stop offset=.672 stop-color=#402bb7 /><stop offset=.686 stop-color=#3f29af /><stop offset=.699 stop-color=#402bb7 /><stop offset=.713 stop-color=#3e28ac /><stop offset=.726 stop-color=#412cba /><stop offset=.739 stop-color=#3f29b1 /><stop offset=.766 stop-color=#3f28ae /><stop offset=.813 stop-color=#3f28ad /><stop offset=.820 stop-color=#3f29b2 /><stop offset=.840 stop-color=#3e27ac /><stop offset=.847 stop-color=#412cba /><stop offset=.867 stop-color=#3e27ab /><stop offset=.881 stop-color=#422ebe /><stop offset=.914 stop-color=#3f28ad /><stop offset=.955 stop-color=#402ab4 /><stop offset=.968 stop-color=#422fc1 /><stop offset=.982 stop-color=#3e27ab /><stop offset=.988 stop-color=#4230c4 /><stop offset=1.000 stop-color=#4332cb /></linearGradient><linearGradient id=a23><stop offset=.000 stop-color=#4433cb /><stop offset=.054 stop-color=#4029b2 /><stop offset=.061 stop-color=#412cba /><stop offset=.087 stop-color=#402ab5 /><stop offset=.134 stop-color=#412dbd /><stop offset=.141 stop-color=#402ab4 /><stop offset=.168 stop-color=#422ebf /><stop offset=.195 stop-color=#3e28ac /><stop offset=.215 stop-color=#412ebe /><stop offset=.289 stop-color=#402ab4 /><stop offset=.316 stop-color=#3e27ab /><stop offset=.336 stop-color=#412dbc /><stop offset=.363 stop-color=#402ab5 /><stop offset=.376 stop-color=#412ebe /><stop offset=.390 stop-color=#402bb6 /><stop offset=.417 stop-color=#402ab4 /><stop offset=.450 stop-color=#402bb6 /><stop offset=.477 stop-color=#3f29b1 /><stop offset=.484 stop-color=#3e27a9 /><stop offset=.497 stop-color=#402ab5 /><stop offset=.518 stop-color=#3e27ab /><stop offset=.531 stop-color=#3e27ab /><stop offset=.605 stop-color=#402ab4 /><stop offset=.625 stop-color=#412cb9 /><stop offset=.659 stop-color=#3f29b0 /><stop offset=.672 stop-color=#402ab5 /><stop offset=.719 stop-color=#3f29b2 /><stop offset=.726 stop-color=#422ebf /><stop offset=.739 stop-color=#3f28af /><stop offset=.800 stop-color=#3f29b2 /><stop offset=.807 stop-color=#3e26a8 /><stop offset=.820 stop-color=#3f29b1 /><stop offset=.834 stop-color=#3e27ac /><stop offset=.854 stop-color=#3f28ae /><stop offset=.867 stop-color=#3f28af /><stop offset=.881 stop-color=#422ebf /><stop offset=.914 stop-color=#3f29b2 /><stop offset=.934 stop-color=#3f28ad /><stop offset=.968 stop-color=#4230c4 /><stop offset=.982 stop-color=#3f28ad /><stop offset=.988 stop-color=#4332c9 /><stop offset=1.000 stop-color=#4433cb /></linearGradient><linearGradient id=a24><stop offset=.000 stop-color=#4433cc /><stop offset=.034 stop-color=#412dbb /><stop offset=.040 stop-color=#422fc0 /><stop offset=.047 stop-color=#3f29b0 /><stop offset=.054 stop-color=#3f28af /><stop offset=.061 stop-color=#412dbd /><stop offset=.081 stop-color=#3f29af /><stop offset=.121 stop-color=#422fc2 /><stop offset=.141 stop-color=#402ab5 /><stop offset=.155 stop-color=#422ebf /><stop offset=.175 stop-color=#412ebe /><stop offset=.188 stop-color=#3e26a8 /><stop offset=.202 stop-color=#3f29b2 /><stop offset=.215 stop-color=#4230c4 /><stop offset=.235 stop-color=#402ab5 /><stop offset=.262 stop-color=#402bb6 /><stop offset=.316 stop-color=#3e27ab /><stop offset=.336 stop-color=#412cba /><stop offset=.363 stop-color=#402bb6 /><stop offset=.376 stop-color=#4230c3 /><stop offset=.383 stop-color=#402bb6 /><stop offset=.403 stop-color=#4230c3 /><stop offset=.417 stop-color=#402ab3 /><stop offset=.444 stop-color=#422fc1 /><stop offset=.484 stop-color=#3e26a8 /><stop offset=.497 stop-color=#412cb9 /><stop offset=.518 stop-color=#3e26a8 /><stop offset=.524 stop-color=#3f29b0 /><stop offset=.545 stop-color=#3e26a8 /><stop offset=.558 stop-color=#3f29b0 /><stop offset=.565 stop-color=#3e27aa /><stop offset=.578 stop-color=#402bb6 /><stop offset=.585 stop-color=#3e26a8 /><stop offset=.618 stop-color=#412ebe /><stop offset=.659 stop-color=#402ab4 /><stop offset=.666 stop-color=#412dbb /><stop offset=.679 stop-color=#3f28ae /><stop offset=.706 stop-color=#402ab4 /><stop offset=.719 stop-color=#402ab5 /><stop offset=.726 stop-color=#422fc2 /><stop offset=.739 stop-color=#3f28ae /><stop offset=.800 stop-color=#402bb7 /><stop offset=.807 stop-color=#3e26a8 /><stop offset=.820 stop-color=#3f29b0 /><stop offset=.827 stop-color=#3e26a9 /><stop offset=.840 stop-color=#402ab3 /><stop offset=.854 stop-color=#3e27a9 /><stop offset=.881 stop-color=#412ebe /><stop offset=.901 stop-color=#402cb8 /><stop offset=.908 stop-color=#422ebf /><stop offset=.921 stop-color=#3e27aa /><stop offset=.948 stop-color=#3f29b2 /><stop offset=.968 stop-color=#4331c6 /><stop offset=.982 stop-color=#3f28af /><stop offset=.988 stop-color=#4433cb /><stop offset=1.000 stop-color=#4433cb /></linearGradient><linearGradient id=a25><stop offset=.000 stop-color=#4433cc /><stop offset=.054 stop-color=#3f29b2 /><stop offset=.121 stop-color=#4230c4 /><stop offset=.155 stop-color=#412dbb /><stop offset=.182 stop-color=#402ab4 /><stop offset=.195 stop-color=#3e26a8 /><stop offset=.215 stop-color=#412dbd /><stop offset=.276 stop-color=#3f28af /><stop offset=.363 stop-color=#3f29b1 /><stop offset=.376 stop-color=#422ec0 /><stop offset=.390 stop-color=#402bb6 /><stop offset=.403 stop-color=#422fc1 /><stop offset=.424 stop-color=#402bb6 /><stop offset=.444 stop-color=#412ebe /><stop offset=.464 stop-color=#402ab3 /><stop offset=.477 stop-color=#4029b3 /><stop offset=.484 stop-color=#3e27a9 /><stop offset=.497 stop-color=#402bb7 /><stop offset=.518 stop-color=#3f28af /><stop offset=.531 stop-color=#3f28af /><stop offset=.551 stop-color=#3f29b1 /><stop offset=.578 stop-color=#402bb6 /><stop offset=.592 stop-color=#3f29b2 /><stop offset=.618 stop-color=#412dbd /><stop offset=.652 stop-color=#3f29b0 /><stop offset=.672 stop-color=#3f29b0 /><stop offset=.706 stop-color=#402ab4 /><stop offset=.719 stop-color=#402ab5 /><stop offset=.726 stop-color=#422fc0 /><stop offset=.739 stop-color=#3f29af /><stop offset=.800 stop-color=#402ab5 /><stop offset=.807 stop-color=#3e26a8 /><stop offset=.834 stop-color=#3f29b0 /><stop offset=.881 stop-color=#402ab4 /><stop offset=.914 stop-color=#402ab5 /><stop offset=.934 stop-color=#3e27ab /><stop offset=.968 stop-color=#422fc1 /><stop offset=.982 stop-color=#4029b3 /><stop offset=.988 stop-color=#4433cc /><stop offset=1.000 stop-color=#4433cc /></linearGradient><linearGradient id=a26><stop offset=.000 stop-color=#4433cd /><stop offset=.020 stop-color=#4433cc /><stop offset=.040 stop-color=#412cba /><stop offset=.081 stop-color=#402bb8 /><stop offset=.114 stop-color=#412dbc /><stop offset=.121 stop-color=#4331c6 /><stop offset=.134 stop-color=#412cba /><stop offset=.141 stop-color=#422ec0 /><stop offset=.155 stop-color=#402bb7 /><stop offset=.182 stop-color=#402bb7 /><stop offset=.202 stop-color=#3e26a8 /><stop offset=.222 stop-color=#402bb7 /><stop offset=.255 stop-color=#3e26a9 /><stop offset=.323 stop-color=#402bb7 /><stop offset=.363 stop-color=#3e27ab /><stop offset=.376 stop-color=#412dbc /><stop offset=.397 stop-color=#402bb6 /><stop offset=.403 stop-color=#422ec0 /><stop offset=.430 stop-color=#412dbb /><stop offset=.444 stop-color=#412dbc /><stop offset=.457 stop-color=#3e28ac /><stop offset=.477 stop-color=#402ab5 /><stop offset=.484 stop-color=#3e27ab /><stop offset=.524 stop-color=#412cba /><stop offset=.545 stop-color=#3f28ae /><stop offset=.585 stop-color=#402bb6 /><stop offset=.605 stop-color=#3f29b0 /><stop offset=.618 stop-color=#412dbc /><stop offset=.645 stop-color=#3e27aa /><stop offset=.666 stop-color=#3f29b0 /><stop offset=.686 stop-color=#3e26a8 /><stop offset=.699 stop-color=#412dbc /><stop offset=.713 stop-color=#402ab3 /><stop offset=.726 stop-color=#412ebe /><stop offset=.739 stop-color=#3f29b1 /><stop offset=.753 stop-color=#3f29b0 /><stop offset=.800 stop-color=#402ab3 /><stop offset=.813 stop-color=#3e26a8 /><stop offset=.834 stop-color=#3f29b1 /><stop offset=.854 stop-color=#402ab3 /><stop offset=.881 stop-color=#3e26a9 /><stop offset=.914 stop-color=#402ab4 /><stop offset=.948 stop-color=#3f28ae /><stop offset=.968 stop-color=#412dbb /><stop offset=.982 stop-color=#402bb6 /><stop offset=.988 stop-color=#4433cc /><stop offset=1.000 stop-color=#4433cc /></linearGradient><linearGradient id=a27><stop offset=.000 stop-color=#4433cd /><stop offset=.020 stop-color=#4435d0 /><stop offset=.040 stop-color=#402bb7 /><stop offset=.054 stop-color=#412cb9 /><stop offset=.061 stop-color=#3f29b0 /><stop offset=.074 stop-color=#422ebf /><stop offset=.101 stop-color=#422fc0 /><stop offset=.114 stop-color=#412cba /><stop offset=.121 stop-color=#4332c8 /><stop offset=.134 stop-color=#412cba /><stop offset=.141 stop-color=#4330c5 /><stop offset=.155 stop-color=#402ab4 /><stop offset=.161 stop-color=#422ebe /><stop offset=.195 stop-color=#3f28ae /><stop offset=.208 stop-color=#3e27a9 /><stop offset=.229 stop-color=#412cb9 /><stop offset=.249 stop-color=#3e26a8 /><stop offset=.296 stop-color=#3f28af /><stop offset=.309 stop-color=#412cbb /><stop offset=.336 stop-color=#3e28ac /><stop offset=.356 stop-color=#3f28ad /><stop offset=.363 stop-color=#3e26a8 /><stop offset=.376 stop-color=#412cb8 /><stop offset=.397 stop-color=#402ab3 /><stop offset=.403 stop-color=#412ebe /><stop offset=.444 stop-color=#412cb9 /><stop offset=.457 stop-color=#3e26a9 /><stop offset=.477 stop-color=#402bb7 /><stop offset=.484 stop-color=#3e28ac /><stop offset=.524 stop-color=#412ebe /><stop offset=.545 stop-color=#3f29b2 /><stop offset=.565 stop-color=#402bb7 /><stop offset=.578 stop-color=#402ab4 /><stop offset=.592 stop-color=#412cba /><stop offset=.605 stop-color=#3e28ac /><stop offset=.618 stop-color=#412cba /><stop offset=.632 stop-color=#402ab4 /><stop offset=.645 stop-color=#3e26a8 /><stop offset=.659 stop-color=#3f29b0 /><stop offset=.686 stop-color=#3e26a8 /><stop offset=.699 stop-color=#422fc1 /><stop offset=.706 stop-color=#402ab4 /><stop offset=.733 stop-color=#402bb6 /><stop offset=.753 stop-color=#3f28ae /><stop offset=.760 stop-color=#3e26a8 /><stop offset=.773 stop-color=#3f29b1 /><stop offset=.800 stop-color=#3f29b1 /><stop offset=.820 stop-color=#3e26a8 /><stop offset=.847 stop-color=#402bb8 /><stop offset=.874 stop-color=#3e26a8 /><stop offset=.928 stop-color=#402ab4 /><stop offset=.948 stop-color=#3e28ac /><stop offset=.982 stop-color=#412cba /><stop offset=.988 stop-color=#4433cc /><stop offset=1.000 stop-color=#4433cc /></linearGradient><linearGradient id=a28><stop offset=.000 stop-color=#4434cd /><stop offset=.061 stop-color=#402ab5 /><stop offset=.074 stop-color=#412dbc /><stop offset=.094 stop-color=#412cba /><stop offset=.101 stop-color=#4331c6 /><stop offset=.114 stop-color=#412dbd /><stop offset=.121 stop-color=#4330c5 /><stop offset=.134 stop-color=#402bb6 /><stop offset=.141 stop-color=#422ebf /><stop offset=.175 stop-color=#402bb7 /><stop offset=.188 stop-color=#402cb8 /><stop offset=.208 stop-color=#3f28af /><stop offset=.222 stop-color=#412dbd /><stop offset=.249 stop-color=#3e26a8 /><stop offset=.282 stop-color=#3f29b2 /><stop offset=.303 stop-color=#402ab4 /><stop offset=.323 stop-color=#412dbc /><stop offset=.363 stop-color=#3e26a8 /><stop offset=.383 stop-color=#402ab5 /><stop offset=.444 stop-color=#402bb7 /><stop offset=.457 stop-color=#3e27ac /><stop offset=.477 stop-color=#402bb6 /><stop offset=.497 stop-color=#3f29b2 /><stop offset=.538 stop-color=#402bb7 /><stop offset=.551 stop-color=#402bb6 /><stop offset=.598 stop-color=#402ab3 /><stop offset=.612 stop-color=#3f29b1 /><stop offset=.632 stop-color=#402ab4 /><stop offset=.645 stop-color=#3e26a9 /><stop offset=.659 stop-color=#402ab3 /><stop offset=.686 stop-color=#3e27a9 /><stop offset=.699 stop-color=#422ebf /><stop offset=.706 stop-color=#402ab4 /><stop offset=.726 stop-color=#402bb7 /><stop offset=.760 stop-color=#3e27ab /><stop offset=.780 stop-color=#402ab4 /><stop offset=.820 stop-color=#3e27ab /><stop offset=.840 stop-color=#412cba /><stop offset=.881 stop-color=#3e26a8 /><stop offset=.934 stop-color=#402ab3 /><stop offset=.982 stop-color=#412cb9 /><stop offset=.988 stop-color=#4433cd /><stop offset=1.000 stop-color=#4433cd /></linearGradient><linearGradient id=a29><stop offset=.000 stop-color=#4434ce /><stop offset=.013 stop-color=#4434cd /><stop offset=.027 stop-color=#422ec0 /><stop offset=.074 stop-color=#412cba /><stop offset=.087 stop-color=#3e28ac /><stop offset=.094 stop-color=#402ab5 /><stop offset=.101 stop-color=#4433cc /><stop offset=.134 stop-color=#402ab3 /><stop offset=.155 stop-color=#412cba /><stop offset=.161 stop-color=#3f28ad /><stop offset=.182 stop-color=#422ebf /><stop offset=.215 stop-color=#412cb8 /><stop offset=.222 stop-color=#4230c4 /><stop offset=.242 stop-color=#3e26a8 /><stop offset=.262 stop-color=#402bb8 /><stop offset=.303 stop-color=#3f28ad /><stop offset=.323 stop-color=#412ebe /><stop offset=.363 stop-color=#3e26a8 /><stop offset=.390 stop-color=#402ab5 /><stop offset=.410 stop-color=#402ab3 /><stop offset=.518 stop-color=#402ab3 /><stop offset=.524 stop-color=#3e27aa /><stop offset=.538 stop-color=#402bb6 /><stop offset=.551 stop-color=#402bb6 /><stop offset=.598 stop-color=#3f29b2 /><stop offset=.618 stop-color=#3f28af /><stop offset=.625 stop-color=#412dbb /><stop offset=.645 stop-color=#3e27ab /><stop offset=.666 stop-color=#3f29b2 /><stop offset=.686 stop-color=#3f29b1 /><stop offset=.699 stop-color=#412ebe /><stop offset=.706 stop-color=#402ab5 /><stop offset=.719 stop-color=#422fc0 /><stop offset=.726 stop-color=#3f29b2 /><stop offset=.760 stop-color=#3f28ad /><stop offset=.780 stop-color=#402bb8 /><stop offset=.800 stop-color=#3f29b0 /><stop offset=.840 stop-color=#412cbb /><stop offset=.887 stop-color=#3e27aa /><stop offset=.921 stop-color=#402ab4 /><stop offset=.961 stop-color=#412cba /><stop offset=.975 stop-color=#3f29b1 /><stop offset=.988 stop-color=#4433cd /><stop offset=1.000 stop-color=#4433cd /></linearGradient><linearGradient id=a30><stop offset=.000 stop-color=#4434ce /><stop offset=.013 stop-color=#4434ce /><stop offset=.020 stop-color=#412dbb /><stop offset=.067 stop-color=#422ebe /><stop offset=.087 stop-color=#3e26a8 /><stop offset=.094 stop-color=#3f29b0 /><stop offset=.101 stop-color=#4435d1 /><stop offset=.134 stop-color=#3f29b0 /><stop offset=.148 stop-color=#422fc1 /><stop offset=.155 stop-color=#412ebe /><stop offset=.161 stop-color=#3e26a8 /><stop offset=.182 stop-color=#422fc2 /><stop offset=.215 stop-color=#412dbc /><stop offset=.222 stop-color=#4332cb /><stop offset=.235 stop-color=#3e27aa /><stop offset=.249 stop-color=#3f29b0 /><stop offset=.262 stop-color=#422ebf /><stop offset=.276 stop-color=#402ab5 /><stop offset=.282 stop-color=#412dbb /><stop offset=.303 stop-color=#3e26a8 /><stop offset=.316 stop-color=#422ebf /><stop offset=.336 stop-color=#412dbb /><stop offset=.356 stop-color=#3e26a8 /><stop offset=.390 stop-color=#402bb7 /><stop offset=.403 stop-color=#3e26a8 /><stop offset=.424 stop-color=#402ab3 /><stop offset=.484 stop-color=#402ab4 /><stop offset=.497 stop-color=#3f28ae /><stop offset=.511 stop-color=#402ab3 /><stop offset=.524 stop-color=#3e26a8 /><stop offset=.538 stop-color=#402ab5 /><stop offset=.605 stop-color=#3f28af /><stop offset=.618 stop-color=#3e27a9 /><stop offset=.625 stop-color=#422ebf /><stop offset=.639 stop-color=#3e26a8 /><stop offset=.666 stop-color=#402bb6 /><stop offset=.706 stop-color=#402bb6 /><stop offset=.719 stop-color=#4330c5 /><stop offset=.726 stop-color=#3f28ad /><stop offset=.766 stop-color=#402ab4 /><stop offset=.780 stop-color=#412dbc /><stop offset=.793 stop-color=#3e27ac /><stop offset=.834 stop-color=#422fc0 /><stop offset=.861 stop-color=#3f29b2 /><stop offset=.881 stop-color=#3f29b0 /><stop offset=.887 stop-color=#3e27a9 /><stop offset=.908 stop-color=#402ab3 /><stop offset=.928 stop-color=#3f29b1 /><stop offset=.941 stop-color=#422fc3 /><stop offset=.975 stop-color=#3f28ae /><stop offset=.988 stop-color=#4434ce /><stop offset=1.000 stop-color=#4434ce /></linearGradient><linearGradient id=a31><stop offset=.000 stop-color=#4434cf /><stop offset=.013 stop-color=#4434ce /><stop offset=.027 stop-color=#422ebf /><stop offset=.074 stop-color=#412cb9 /><stop offset=.087 stop-color=#3e27ab /><stop offset=.094 stop-color=#402ab5 /><stop offset=.101 stop-color=#4433cd /><stop offset=.134 stop-color=#402ab4 /><stop offset=.155 stop-color=#422ec0 /><stop offset=.161 stop-color=#3f28af /><stop offset=.195 stop-color=#422ebe /><stop offset=.215 stop-color=#412dbc /><stop offset=.222 stop-color=#4330c5 /><stop offset=.235 stop-color=#3e27ab /><stop offset=.262 stop-color=#412ebe /><stop offset=.296 stop-color=#3f28ae /><stop offset=.303 stop-color=#3e27ac /><stop offset=.316 stop-color=#422ebf /><stop offset=.336 stop-color=#422ebf /><stop offset=.363 stop-color=#3f28ae /><stop offset=.390 stop-color=#402bb8 /><stop offset=.403 stop-color=#3e26a9 /><stop offset=.424 stop-color=#402ab4 /><stop offset=.484 stop-color=#402ab5 /><stop offset=.497 stop-color=#3e27ab /><stop offset=.511 stop-color=#3f29b0 /><stop offset=.524 stop-color=#3e26a8 /><stop offset=.538 stop-color=#402bb6 /><stop offset=.605 stop-color=#3e27ac /><stop offset=.618 stop-color=#3e27ab /><stop offset=.625 stop-color=#412dbc /><stop offset=.639 stop-color=#3e26a8 /><stop offset=.659 stop-color=#402bb7 /><stop offset=.706 stop-color=#402ab4 /><stop offset=.719 stop-color=#412ebe /><stop offset=.733 stop-color=#3f29b1 /><stop offset=.760 stop-color=#3f29b0 /><stop offset=.780 stop-color=#412cba /><stop offset=.793 stop-color=#3f29b0 /><stop offset=.827 stop-color=#4230c3 /><stop offset=.861 stop-color=#3e27ac /><stop offset=.881 stop-color=#402ab4 /><stop offset=.894 stop-color=#3f29b1 /><stop offset=.928 stop-color=#3f29b2 /><stop offset=.941 stop-color=#422ebf /><stop offset=.955 stop-color=#412cb9 /><stop offset=.961 stop-color=#412dbb /><stop offset=.975 stop-color=#3f28af /><stop offset=.982 stop-color=#4332c9 /><stop offset=1.000 stop-color=#4434ce /></linearGradient><linearGradient id=a32><stop offset=.000 stop-color=#4434cf /><stop offset=.020 stop-color=#4331c8 /><stop offset=.047 stop-color=#412cba /><stop offset=.074 stop-color=#412cba /><stop offset=.087 stop-color=#3f29b2 /><stop offset=.101 stop-color=#4332c9 /><stop offset=.134 stop-color=#402bb8 /><stop offset=.155 stop-color=#422fc2 /><stop offset=.182 stop-color=#402bb6 /><stop offset=.195 stop-color=#422fc1 /><stop offset=.222 stop-color=#422ec0 /><stop offset=.235 stop-color=#3e28ac /><stop offset=.262 stop-color=#412dbd /><stop offset=.282 stop-color=#3e26a8 /><stop offset=.336 stop-color=#422fc2 /><stop offset=.376 stop-color=#3f28ae /><stop offset=.390 stop-color=#412cb8 /><stop offset=.403 stop-color=#3e27ab /><stop offset=.424 stop-color=#402ab5 /><stop offset=.484 stop-color=#402bb6 /><stop offset=.497 stop-color=#3e26a8 /><stop offset=.504 stop-color=#3f29b1 /><stop offset=.524 stop-color=#3e26a8 /><stop offset=.538 stop-color=#402bb6 /><stop offset=.578 stop-color=#402bb8 /><stop offset=.585 stop-color=#3f28ae /><stop offset=.598 stop-color=#402ab4 /><stop offset=.612 stop-color=#3e26a9 /><stop offset=.625 stop-color=#402bb8 /><stop offset=.639 stop-color=#3e27aa /><stop offset=.659 stop-color=#402bb6 /><stop offset=.672 stop-color=#3f29b1 /><stop offset=.706 stop-color=#3f29b2 /><stop offset=.733 stop-color=#3f29b2 /><stop offset=.746 stop-color=#412cba /><stop offset=.760 stop-color=#3f29b1 /><stop offset=.773 stop-color=#412dbc /><stop offset=.800 stop-color=#402bb7 /><stop offset=.827 stop-color=#4230c3 /><stop offset=.861 stop-color=#3e26a8 /><stop offset=.881 stop-color=#402bb7 /><stop offset=.928 stop-color=#3f29b2 /><stop offset=.941 stop-color=#412cba /><stop offset=.948 stop-color=#3f29b0 /><stop offset=.961 stop-color=#412cba /><stop offset=.968 stop-color=#3f28ae /><stop offset=.975 stop-color=#3f29b0 /><stop offset=.982 stop-color=#4433cc /><stop offset=1.000 stop-color=#4434ce /></linearGradient><linearGradient id=a33><stop offset=.000 stop-color=#4434cf /><stop offset=.020 stop-color=#4433cd /><stop offset=.040 stop-color=#402ab5 /><stop offset=.074 stop-color=#412dbc /><stop offset=.081 stop-color=#402ab4 /><stop offset=.101 stop-color=#4330c5 /><stop offset=.128 stop-color=#412cb9 /><stop offset=.161 stop-color=#4230c4 /><stop offset=.182 stop-color=#3f29b0 /><stop offset=.195 stop-color=#4230c3 /><stop offset=.235 stop-color=#3f28ad /><stop offset=.262 stop-color=#412dbc /><stop offset=.282 stop-color=#3e26a8 /><stop offset=.316 stop-color=#412dbd /><stop offset=.323 stop-color=#412cba /><stop offset=.336 stop-color=#4331c6 /><stop offset=.363 stop-color=#412dbb /><stop offset=.376 stop-color=#3e27ab /><stop offset=.383 stop-color=#412cb9 /><stop offset=.403 stop-color=#3f28ae /><stop offset=.424 stop-color=#402bb7 /><stop offset=.457 stop-color=#3f29b1 /><stop offset=.484 stop-color=#402bb7 /><stop offset=.497 stop-color=#3e26a8 /><stop offset=.504 stop-color=#3f28af /><stop offset=.524 stop-color=#3f28ad /><stop offset=.545 stop-color=#402ab3 /><stop offset=.578 stop-color=#412dbb /><stop offset=.585 stop-color=#3e27ab /><stop offset=.598 stop-color=#402bb6 /><stop offset=.605 stop-color=#3e26a8 /><stop offset=.625 stop-color=#402ab4 /><stop offset=.639 stop-color=#3e28ad /><stop offset=.659 stop-color=#402ab5 /><stop offset=.666 stop-color=#3e27aa /><stop offset=.686 stop-color=#3f29b0 /><stop offset=.699 stop-color=#3e26a8 /><stop offset=.719 stop-color=#3f29b0 /><stop offset=.726 stop-color=#412dbc /><stop offset=.739 stop-color=#3f29b0 /><stop offset=.746 stop-color=#422ebf /><stop offset=.760 stop-color=#3f29b2 /><stop offset=.766 stop-color=#422fc1 /><stop offset=.793 stop-color=#412cb8 /><stop offset=.827 stop-color=#422fc3 /><stop offset=.847 stop-color=#3e27aa /><stop offset=.867 stop-color=#3f28ae /><stop offset=.887 stop-color=#412cb8 /><stop offset=.928 stop-color=#4029b2 /><stop offset=.941 stop-color=#402bb6 /><stop offset=.948 stop-color=#3e27a9 /><stop offset=.961 stop-color=#412cb9 /><stop offset=.968 stop-color=#3e28ac /><stop offset=.975 stop-color=#402ab3 /><stop offset=.982 stop-color=#4434ce /><stop offset=1.000 stop-color=#4434cf /></linearGradient><linearGradient id=a34><stop offset=.000 stop-color=#4434d0 /><stop offset=.020 stop-color=#4434ce /><stop offset=.027 stop-color=#422ebf /><stop offset=.087 stop-color=#402bb6 /><stop offset=.108 stop-color=#422fc1 /><stop offset=.121 stop-color=#402bb6 /><stop offset=.168 stop-color=#422ebf /><stop offset=.182 stop-color=#402ab5 /><stop offset=.202 stop-color=#412ebe /><stop offset=.249 stop-color=#3f29b2 /><stop offset=.262 stop-color=#412cba /><stop offset=.282 stop-color=#3e26a8 /><stop offset=.316 stop-color=#402bb8 /><stop offset=.323 stop-color=#3f29b1 /><stop offset=.336 stop-color=#4230c3 /><stop offset=.363 stop-color=#402bb8 /><stop offset=.376 stop-color=#3f28ae /><stop offset=.390 stop-color=#412cb9 /><stop offset=.410 stop-color=#3f29b2 /><stop offset=.430 stop-color=#402ab4 /><stop offset=.477 stop-color=#3f29b2 /><stop offset=.484 stop-color=#402bb7 /><stop offset=.497 stop-color=#3e27ab /><stop offset=.504 stop-color=#3f29b2 /><stop offset=.524 stop-color=#3e27ab /><stop offset=.545 stop-color=#402bb7 /><stop offset=.578 stop-color=#412cb9 /><stop offset=.585 stop-color=#3f29b1 /><stop offset=.598 stop-color=#402bb8 /><stop offset=.605 stop-color=#3e27ac /><stop offset=.659 stop-color=#402ab4 /><stop offset=.672 stop-color=#3f28ae /><stop offset=.699 stop-color=#3e26a8 /><stop offset=.726 stop-color=#412cb8 /><stop offset=.739 stop-color=#3f29b2 /><stop offset=.746 stop-color=#412dbd /><stop offset=.760 stop-color=#402ab4 /><stop offset=.773 stop-color=#412cb9 /><stop offset=.813 stop-color=#412cb9 /><stop offset=.840 stop-color=#402ab5 /><stop offset=.861 stop-color=#3e26a8 /><stop offset=.881 stop-color=#412dbd /><stop offset=.928 stop-color=#402ab3 /><stop offset=.941 stop-color=#402bb8 /><stop offset=.948 stop-color=#3e27aa /><stop offset=.961 stop-color=#412cb9 /><stop offset=.968 stop-color=#402ab3 /><stop offset=.975 stop-color=#412cba /><stop offset=.982 stop-color=#4434cf /><stop offset=1.000 stop-color=#4434cf /></linearGradient><linearGradient id=a35><stop offset=.000 stop-color=#4435d0 /><stop offset=.020 stop-color=#4434cf /><stop offset=.027 stop-color=#412ebd /><stop offset=.040 stop-color=#4332c8 /><stop offset=.061 stop-color=#412cb8 /><stop offset=.094 stop-color=#402bb6 /><stop offset=.108 stop-color=#422fc1 /><stop offset=.121 stop-color=#402ab5 /><stop offset=.168 stop-color=#422fc0 /><stop offset=.242 stop-color=#3f29b2 /><stop offset=.255 stop-color=#3f29b1 /><stop offset=.262 stop-color=#412cb9 /><stop offset=.282 stop-color=#3e26a8 /><stop offset=.309 stop-color=#402bb7 /><stop offset=.323 stop-color=#3e26a9 /><stop offset=.336 stop-color=#422fc0 /><stop offset=.356 stop-color=#412ebd /><stop offset=.376 stop-color=#3f29b1 /><stop offset=.397 stop-color=#402bb8 /><stop offset=.417 stop-color=#3f29b1 /><stop offset=.430 stop-color=#402bb6 /><stop offset=.450 stop-color=#3f28ad /><stop offset=.491 stop-color=#402ab4 /><stop offset=.524 stop-color=#3e27a9 /><stop offset=.551 stop-color=#412dbc /><stop offset=.571 stop-color=#402bb6 /><stop offset=.598 stop-color=#412cbb /><stop offset=.612 stop-color=#402ab3 /><stop offset=.679 stop-color=#3f28ad /><stop offset=.699 stop-color=#3e27aa /><stop offset=.713 stop-color=#3f29b2 /><stop offset=.753 stop-color=#412cb9 /><stop offset=.813 stop-color=#402ab3 /><stop offset=.840 stop-color=#412dbc /><stop offset=.861 stop-color=#3e27ab /><stop offset=.881 stop-color=#422ebf /><stop offset=.894 stop-color=#402ab3 /><stop offset=.941 stop-color=#412cba /><stop offset=.948 stop-color=#3e27ab /><stop offset=.988 stop-color=#4434cf /><stop offset=1.000 stop-color=#4434cf /></linearGradient><linearGradient id=a36><stop offset=.000 stop-color=#4435d0 /><stop offset=.020 stop-color=#4435d0 /><stop offset=.027 stop-color=#422ebe /><stop offset=.034 stop-color=#422ebf /><stop offset=.040 stop-color=#4535d2 /><stop offset=.054 stop-color=#412cba /><stop offset=.081 stop-color=#402bb6 /><stop offset=.094 stop-color=#3f29b0 /><stop offset=.108 stop-color=#422fc1 /><stop offset=.121 stop-color=#402ab3 /><stop offset=.134 stop-color=#412dbd /><stop offset=.148 stop-color=#412dbc /><stop offset=.182 stop-color=#422ebf /><stop offset=.195 stop-color=#412cb9 /><stop offset=.202 stop-color=#422fc1 /><stop offset=.222 stop-color=#412cba /><stop offset=.255 stop-color=#3f28ad /><stop offset=.262 stop-color=#412cb9 /><stop offset=.282 stop-color=#3e27ab /><stop offset=.296 stop-color=#3f28af /><stop offset=.303 stop-color=#412cba /><stop offset=.323 stop-color=#3e26a8 /><stop offset=.343 stop-color=#4330c5 /><stop offset=.356 stop-color=#412ebd /><stop offset=.363 stop-color=#3f29b0 /><stop offset=.397 stop-color=#412cb9 /><stop offset=.417 stop-color=#3f28ad /><stop offset=.430 stop-color=#412cb9 /><stop offset=.444 stop-color=#3e26a8 /><stop offset=.491 stop-color=#412cb8 /><stop offset=.524 stop-color=#3e26a8 /><stop offset=.551 stop-color=#422fc2 /><stop offset=.571 stop-color=#402ab3 /><stop offset=.598 stop-color=#412dbd /><stop offset=.625 stop-color=#3f28ad /><stop offset=.639 stop-color=#402ab5 /><stop offset=.652 stop-color=#3f28af /><stop offset=.699 stop-color=#3f28ad /><stop offset=.713 stop-color=#402ab4 /><stop offset=.760 stop-color=#402bb7 /><stop offset=.773 stop-color=#3f29b0 /><stop offset=.813 stop-color=#3f28ad /><stop offset=.827 stop-color=#3f28ad /><stop offset=.840 stop-color=#422fc3 /><stop offset=.854 stop-color=#3f29b2 /><stop offset=.867 stop-color=#3f29b1 /><stop offset=.881 stop-color=#422fc1 /><stop offset=.887 stop-color=#3f29b0 /><stop offset=.941 stop-color=#412dbc /><stop offset=.948 stop-color=#3e28ad /><stop offset=.982 stop-color=#4434d0 /><stop offset=1.000 stop-color=#4434d0 /></linearGradient><linearGradient id=a37><stop offset=.000 stop-color=#4747ec /><stop offset=.020 stop-color=#4742e6 /><stop offset=.034 stop-color=#4434ce /><stop offset=.040 stop-color=#4538d8 /><stop offset=.061 stop-color=#4331c8 /><stop offset=.081 stop-color=#4330c5 /><stop offset=.094 stop-color=#412dbc /><stop offset=.108 stop-color=#4230c4 /><stop offset=.182 stop-color=#412dbd /><stop offset=.195 stop-color=#402bb6 /><stop offset=.202 stop-color=#422ebf /><stop offset=.222 stop-color=#402bb8 /><stop offset=.242 stop-color=#402ab6 /><stop offset=.262 stop-color=#402bb7 /><stop offset=.276 stop-color=#3f28ad /><stop offset=.303 stop-color=#412dbb /><stop offset=.323 stop-color=#3e26a8 /><stop offset=.343 stop-color=#422fc0 /><stop offset=.376 stop-color=#3f29b1 /><stop offset=.403 stop-color=#402ab4 /><stop offset=.417 stop-color=#3e28ac /><stop offset=.424 stop-color=#412cb9 /><stop offset=.450 stop-color=#3f29b1 /><stop offset=.477 stop-color=#3f28ad /><stop offset=.497 stop-color=#412dbb /><stop offset=.524 stop-color=#3e27aa /><stop offset=.551 stop-color=#412dbb /><stop offset=.571 stop-color=#402ab4 /><stop offset=.598 stop-color=#412ebd /><stop offset=.645 stop-color=#3f29af /><stop offset=.666 stop-color=#3f29b1 /><stop offset=.692 stop-color=#3e27ab /><stop offset=.760 stop-color=#412cb8 /><stop offset=.807 stop-color=#3e26a8 /><stop offset=.820 stop-color=#402ab5 /><stop offset=.827 stop-color=#3f29b0 /><stop offset=.840 stop-color=#422ebe /><stop offset=.861 stop-color=#3f28af /><stop offset=.881 stop-color=#412dbd /><stop offset=.887 stop-color=#3f28af /><stop offset=.941 stop-color=#412dbb /><stop offset=.955 stop-color=#402ab3 /><stop offset=.982 stop-color=#4435d0 /><stop offset=1.000 stop-color=#4435d0 /></linearGradient><linearGradient id=a38><stop offset=.000 stop-color=#475bfa /><stop offset=.027 stop-color=#4848ec /><stop offset=.034 stop-color=#463adc /><stop offset=.081 stop-color=#4536d4 /><stop offset=.094 stop-color=#4332c9 /><stop offset=.101 stop-color=#4434ce /><stop offset=.114 stop-color=#4230c4 /><stop offset=.175 stop-color=#412dbd /><stop offset=.195 stop-color=#4029b3 /><stop offset=.208 stop-color=#412dbb /><stop offset=.222 stop-color=#402ab6 /><stop offset=.242 stop-color=#412cba /><stop offset=.276 stop-color=#402ab4 /><stop offset=.289 stop-color=#412ebe /><stop offset=.316 stop-color=#402bb7 /><stop offset=.329 stop-color=#402bb8 /><stop offset=.350 stop-color=#402bb6 /><stop offset=.383 stop-color=#402ab3 /><stop offset=.403 stop-color=#402ab5 /><stop offset=.417 stop-color=#3e27ac /><stop offset=.424 stop-color=#412dbb /><stop offset=.464 stop-color=#3f29b0 /><stop offset=.477 stop-color=#3e26a8 /><stop offset=.497 stop-color=#412dbd /><stop offset=.524 stop-color=#3f28ae /><stop offset=.538 stop-color=#402ab5 /><stop offset=.551 stop-color=#4029b3 /><stop offset=.571 stop-color=#402bb6 /><stop offset=.598 stop-color=#412ebe /><stop offset=.618 stop-color=#3f29b0 /><stop offset=.625 stop-color=#412dbb /><stop offset=.645 stop-color=#402ab3 /><stop offset=.659 stop-color=#412cb9 /><stop offset=.679 stop-color=#3e27ac /><stop offset=.733 stop-color=#402ab5 /><stop offset=.800 stop-color=#402ab4 /><stop offset=.807 stop-color=#3e26a8 /><stop offset=.820 stop-color=#412cb9 /><stop offset=.840 stop-color=#412cb9 /><stop offset=.861 stop-color=#3e27ab /><stop offset=.881 stop-color=#412cb9 /><stop offset=.894 stop-color=#3f28ae /><stop offset=.948 stop-color=#412cb9 /><stop offset=.961 stop-color=#402bb7 /><stop offset=.975 stop-color=#4434cf /><stop offset=1.000 stop-color=#4435d0 /></linearGradient><linearGradient id=a39><stop offset=.000 stop-color=#3d70ff /><stop offset=.027 stop-color=#4757f7 /><stop offset=.034 stop-color=#4743e7 /><stop offset=.040 stop-color=#463cdf /><stop offset=.081 stop-color=#463de0 /><stop offset=.101 stop-color=#4537d6 /><stop offset=.114 stop-color=#4331c6 /><stop offset=.121 stop-color=#4536d3 /><stop offset=.195 stop-color=#3f29b0 /><stop offset=.208 stop-color=#412dbd /><stop offset=.222 stop-color=#402ab5 /><stop offset=.235 stop-color=#4230c4 /><stop offset=.276 stop-color=#422ebf /><stop offset=.282 stop-color=#4434ce /><stop offset=.343 stop-color=#412dbb /><stop offset=.356 stop-color=#3f29b0 /><stop offset=.363 stop-color=#412ebe /><stop offset=.376 stop-color=#3e28ac /><stop offset=.403 stop-color=#402bb6 /><stop offset=.417 stop-color=#3e27ac /><stop offset=.424 stop-color=#412dbd /><stop offset=.457 stop-color=#412cba /><stop offset=.471 stop-color=#3e26a8 /><stop offset=.484 stop-color=#402ab4 /><stop offset=.504 stop-color=#412ebe /><stop offset=.518 stop-color=#3f28af /><stop offset=.538 stop-color=#3f29b2 /><stop offset=.551 stop-color=#3e27aa /><stop offset=.565 stop-color=#3f28ae /><stop offset=.578 stop-color=#412dbc /><stop offset=.585 stop-color=#3f29b0 /><stop offset=.598 stop-color=#422ebe /><stop offset=.612 stop-color=#3e27ab /><stop offset=.618 stop-color=#3f28ad /><stop offset=.625 stop-color=#422fc2 /><stop offset=.639 stop-color=#3f28ae /><stop offset=.659 stop-color=#412ebe /><stop offset=.672 stop-color=#3e27ab /><stop offset=.686 stop-color=#412cb9 /><stop offset=.713 stop-color=#3e27a9 /><stop offset=.739 stop-color=#412cba /><stop offset=.753 stop-color=#402bb6 /><stop offset=.780 stop-color=#422ebe /><stop offset=.800 stop-color=#412cb9 /><stop offset=.807 stop-color=#3e26a8 /><stop offset=.820 stop-color=#412dbd /><stop offset=.861 stop-color=#3e26a8 /><stop offset=.881 stop-color=#402ab4 /><stop offset=.894 stop-color=#3e28ad /><stop offset=.921 stop-color=#412cba /><stop offset=.941 stop-color=#402bb8 /><stop offset=.948 stop-color=#422ec0 /><stop offset=.961 stop-color=#402bb7 /><stop offset=.975 stop-color=#4536d4 /><stop offset=1.000 stop-color=#4537d5 /></linearGradient><linearGradient id=a40><stop offset=.000 stop-color=#2e85f8 /><stop offset=.027 stop-color=#4563fd /><stop offset=.034 stop-color=#4747eb /><stop offset=.040 stop-color=#463adb /><stop offset=.067 stop-color=#463cdf /><stop offset=.101 stop-color=#4537d6 /><stop offset=.114 stop-color=#4331c7 /><stop offset=.128 stop-color=#4433cd /><stop offset=.155 stop-color=#4230c4 /><stop offset=.195 stop-color=#402bb6 /><stop offset=.215 stop-color=#422fc2 /><stop offset=.222 stop-color=#412dbb /><stop offset=.235 stop-color=#4433cd /><stop offset=.269 stop-color=#4433cb /><stop offset=.289 stop-color=#463cdf /><stop offset=.343 stop-color=#4330c5 /><stop offset=.356 stop-color=#412cba /><stop offset=.363 stop-color=#4331c7 /><stop offset=.383 stop-color=#3f29b0 /><stop offset=.403 stop-color=#402bb7 /><stop offset=.417 stop-color=#3f29b2 /><stop offset=.430 stop-color=#412dbc /><stop offset=.457 stop-color=#412dbb /><stop offset=.471 stop-color=#3e26a8 /><stop offset=.477 stop-color=#3e27a9 /><stop offset=.491 stop-color=#412dbc /><stop offset=.504 stop-color=#422ebf /><stop offset=.518 stop-color=#402ab3 /><stop offset=.538 stop-color=#402ab5 /><stop offset=.545 stop-color=#3e27ab /><stop offset=.578 stop-color=#412cba /><stop offset=.585 stop-color=#402ab3 /><stop offset=.598 stop-color=#422ebf /><stop offset=.618 stop-color=#3f29b1 /><stop offset=.625 stop-color=#422ec0 /><stop offset=.639 stop-color=#402ab4 /><stop offset=.659 stop-color=#422fc0 /><stop offset=.672 stop-color=#3f28af /><stop offset=.679 stop-color=#3f29af /><stop offset=.686 stop-color=#412ebd /><stop offset=.719 stop-color=#3e28ad /><stop offset=.739 stop-color=#412cb9 /><stop offset=.773 stop-color=#422ebe /><stop offset=.800 stop-color=#412cb8 /><stop offset=.807 stop-color=#3f28ae /><stop offset=.820 stop-color=#412dbd /><stop offset=.861 stop-color=#3f28af /><stop offset=.887 stop-color=#3f29b1 /><stop offset=.914 stop-color=#402bb6 /><stop offset=.941 stop-color=#412dbb /><stop offset=.948 stop-color=#4230c3 /><stop offset=.961 stop-color=#412cba /><stop offset=.968 stop-color=#4434cf /><stop offset=.988 stop-color=#4539d9 /><stop offset=1.000 stop-color=#4639d9 /></linearGradient><linearGradient id=a41><stop offset=.000 stop-color=#2d8cf3 /><stop offset=.027 stop-color=#426afe /><stop offset=.034 stop-color=#4851f3 /><stop offset=.040 stop-color=#4639da /><stop offset=.061 stop-color=#463cde /><stop offset=.101 stop-color=#4537d5 /><stop offset=.121 stop-color=#4332c9 /><stop offset=.141 stop-color=#4434ce /><stop offset=.161 stop-color=#412cba /><stop offset=.195 stop-color=#412dbd /><stop offset=.215 stop-color=#4332c9 /><stop offset=.222 stop-color=#422fc2 /><stop offset=.242 stop-color=#4537d6 /><stop offset=.262 stop-color=#4434d0 /><stop offset=.296 stop-color=#4745e9 /><stop offset=.329 stop-color=#4538d8 /><stop offset=.356 stop-color=#4331c7 /><stop offset=.363 stop-color=#4435d2 /><stop offset=.383 stop-color=#3f29b0 /><stop offset=.397 stop-color=#422fc3 /><stop offset=.417 stop-color=#412dbd /><stop offset=.457 stop-color=#422ebe /><stop offset=.471 stop-color=#402bb6 /><stop offset=.504 stop-color=#422fc2 /><stop offset=.518 stop-color=#412cb9 /><stop offset=.524 stop-color=#422fc3 /><stop offset=.551 stop-color=#402bb8 /><stop offset=.585 stop-color=#412cb9 /><stop offset=.605 stop-color=#422fc2 /><stop offset=.625 stop-color=#412dbd /><stop offset=.659 stop-color=#4330c5 /><stop offset=.679 stop-color=#402ab5 /><stop offset=.686 stop-color=#4230c3 /><stop offset=.719 stop-color=#3f29b1 /><stop offset=.733 stop-color=#412cbb /><stop offset=.766 stop-color=#4230c4 /><stop offset=.787 stop-color=#402bb7 /><stop offset=.887 stop-color=#402bb7 /><stop offset=.908 stop-color=#3f29b1 /><stop offset=.948 stop-color=#4330c5 /><stop offset=.961 stop-color=#422ebf /><stop offset=.968 stop-color=#4538d8 /><stop offset=1.000 stop-color=#463bde /></linearGradient><linearGradient id=a42><stop offset=.000 stop-color=#2a93ed /><stop offset=.027 stop-color=#3c71ff /><stop offset=.034 stop-color=#465dfa /><stop offset=.040 stop-color=#463bdd /><stop offset=.061 stop-color=#463bdc /><stop offset=.074 stop-color=#4435d1 /><stop offset=.081 stop-color=#4539d8 /><stop offset=.114 stop-color=#4332c8 /><stop offset=.121 stop-color=#4230c3 /><stop offset=.134 stop-color=#4536d3 /><stop offset=.161 stop-color=#412cb9 /><stop offset=.202 stop-color=#4332ca /><stop offset=.215 stop-color=#4434cf /><stop offset=.222 stop-color=#4331c6 /><stop offset=.242 stop-color=#4639da /><stop offset=.262 stop-color=#4434d0 /><stop offset=.276 stop-color=#4741e5 /><stop offset=.303 stop-color=#4747eb /><stop offset=.323 stop-color=#4744e8 /><stop offset=.336 stop-color=#4538d7 /><stop offset=.356 stop-color=#4537d5 /><stop offset=.363 stop-color=#463bdd /><stop offset=.376 stop-color=#4332ca /><stop offset=.383 stop-color=#402ab5 /><stop offset=.397 stop-color=#4435d1 /><stop offset=.403 stop-color=#4330c5 /><stop offset=.417 stop-color=#4434cd /><stop offset=.437 stop-color=#4433cd /><stop offset=.464 stop-color=#422fc0 /><stop offset=.477 stop-color=#4434cf /><stop offset=.518 stop-color=#4230c4 /><stop offset=.524 stop-color=#4435d1 /><stop offset=.551 stop-color=#4330c5 /><stop offset=.578 stop-color=#412dbc /><stop offset=.605 stop-color=#4434ce /><stop offset=.625 stop-color=#422ebf /><stop offset=.659 stop-color=#4434ce /><stop offset=.679 stop-color=#422ec0 /><stop offset=.686 stop-color=#4433cd /><stop offset=.699 stop-color=#422fc1 /><stop offset=.706 stop-color=#4331c7 /><stop offset=.719 stop-color=#412cb9 /><stop offset=.726 stop-color=#4331c6 /><stop offset=.739 stop-color=#412ebe /><stop offset=.760 stop-color=#4433cc /><stop offset=.780 stop-color=#402ab4 /><stop offset=.847 stop-color=#422ebf /><stop offset=.867 stop-color=#4331c7 /><stop offset=.901 stop-color=#3f28ad /><stop offset=.934 stop-color=#412cba /><stop offset=.948 stop-color=#4331c7 /><stop offset=.961 stop-color=#4332c8 /><stop offset=.968 stop-color=#463bdd /><stop offset=1.000 stop-color=#463ee1 /></linearGradient><linearGradient id=a43><stop offset=.000 stop-color=#269ae9 /><stop offset=.027 stop-color=#3777fe /><stop offset=.034 stop-color=#4367fd /><stop offset=.040 stop-color=#4743e7 /><stop offset=.047 stop-color=#463adb /><stop offset=.061 stop-color=#463cde /><stop offset=.074 stop-color=#4435d1 /><stop offset=.081 stop-color=#4539d9 /><stop offset=.121 stop-color=#4330c5 /><stop offset=.134 stop-color=#4536d4 /><stop offset=.161 stop-color=#422fc1 /><stop offset=.215 stop-color=#4433cd /><stop offset=.222 stop-color=#4331c7 /><stop offset=.235 stop-color=#4539d9 /><stop offset=.262 stop-color=#4434cf /><stop offset=.276 stop-color=#473ee2 /><stop offset=.323 stop-color=#4743e7 /><stop offset=.343 stop-color=#463cde /><stop offset=.370 stop-color=#463cde /><stop offset=.383 stop-color=#4332ca /><stop offset=.397 stop-color=#463bdc /><stop offset=.410 stop-color=#463ada /><stop offset=.457 stop-color=#4539d9 /><stop offset=.464 stop-color=#4536d3 /><stop offset=.484 stop-color=#463adb /><stop offset=.518 stop-color=#4537d5 /><stop offset=.524 stop-color=#463bdd /><stop offset=.578 stop-color=#4433cb /><stop offset=.612 stop-color=#4538d8 /><stop offset=.625 stop-color=#4433cd /><stop offset=.659 stop-color=#4538d8 /><stop offset=.679 stop-color=#4433cc /><stop offset=.686 stop-color=#4538d8 /><stop offset=.699 stop-color=#4433cc /><stop offset=.706 stop-color=#4536d2 /><stop offset=.719 stop-color=#4332c9 /><stop offset=.726 stop-color=#4435d0 /><stop offset=.739 stop-color=#4331c7 /><stop offset=.760 stop-color=#4435d0 /><stop offset=.780 stop-color=#412cbb /><stop offset=.813 stop-color=#422fc1 /><stop offset=.861 stop-color=#422fc2 /><stop offset=.867 stop-color=#4433cb /><stop offset=.881 stop-color=#412dbb /><stop offset=.894 stop-color=#412dbb /><stop offset=.914 stop-color=#402bb7 /><stop offset=.955 stop-color=#4230c4 /><stop offset=.968 stop-color=#473ee1 /><stop offset=1.000 stop-color=#4741e4 /></linearGradient><linearGradient id=a44><stop offset=.000 stop-color=#23a0e5 /><stop offset=.027 stop-color=#327bfc /><stop offset=.034 stop-color=#3f6eff /><stop offset=.047 stop-color=#463ddf /><stop offset=.061 stop-color=#473fe2 /><stop offset=.074 stop-color=#4538d7 /><stop offset=.101 stop-color=#4537d5 /><stop offset=.121 stop-color=#4332ca /><stop offset=.141 stop-color=#4435d0 /><stop offset=.222 stop-color=#4331c7 /><stop offset=.235 stop-color=#4538d8 /><stop offset=.262 stop-color=#4433cc /><stop offset=.276 stop-color=#4639da /><stop offset=.323 stop-color=#473fe3 /><stop offset=.403 stop-color=#473fe2 /><stop offset=.457 stop-color=#4743e8 /><stop offset=.551 stop-color=#473fe3 /><stop offset=.598 stop-color=#463bdc /><stop offset=.618 stop-color=#463ddf /><stop offset=.672 stop-color=#463adb /><stop offset=.692 stop-color=#463adb /><stop offset=.766 stop-color=#4434ce /><stop offset=.780 stop-color=#4230c4 /><stop offset=.807 stop-color=#4331c8 /><stop offset=.820 stop-color=#422ebf /><stop offset=.861 stop-color=#422fc0 /><stop offset=.867 stop-color=#4434ce /><stop offset=.881 stop-color=#412cba /><stop offset=.887 stop-color=#4330c5 /><stop offset=.908 stop-color=#402ab5 /><stop offset=.941 stop-color=#4331c8 /><stop offset=.955 stop-color=#4331c7 /><stop offset=.961 stop-color=#463cde /><stop offset=1.000 stop-color=#4743e7 /></linearGradient><linearGradient id=a45><stop offset=.000 stop-color=#1fa6e1 /><stop offset=.034 stop-color=#3a73fe /><stop offset=.040 stop-color=#465dfa /><stop offset=.047 stop-color=#4741e5 /><stop offset=.128 stop-color=#4536d4 /><stop offset=.155 stop-color=#4435d1 /><stop offset=.161 stop-color=#4538d7 /><stop offset=.175 stop-color=#4434cf /><stop offset=.202 stop-color=#4434d0 /><stop offset=.222 stop-color=#4331c8 /><stop offset=.235 stop-color=#4538d7 /><stop offset=.262 stop-color=#4332cb /><stop offset=.276 stop-color=#4435d1 /><stop offset=.282 stop-color=#4332c9 /><stop offset=.316 stop-color=#463cdf /><stop offset=.518 stop-color=#4850f2 /><stop offset=.551 stop-color=#4849ed /><stop offset=.598 stop-color=#463ee0 /><stop offset=.652 stop-color=#473fe2 /><stop offset=.672 stop-color=#463cdf /><stop offset=.706 stop-color=#463bdd /><stop offset=.760 stop-color=#4435d0 /><stop offset=.780 stop-color=#4332ca /><stop offset=.793 stop-color=#4434d0 /><stop offset=.820 stop-color=#412ebe /><stop offset=.827 stop-color=#4331c7 /><stop offset=.840 stop-color=#412dbb /><stop offset=.847 stop-color=#4330c4 /><stop offset=.861 stop-color=#422ebe /><stop offset=.867 stop-color=#4434cf /><stop offset=.881 stop-color=#412cb9 /><stop offset=.887 stop-color=#4332c9 /><stop offset=.901 stop-color=#4230c4 /><stop offset=.908 stop-color=#402bb7 /><stop offset=.934 stop-color=#4434cf /><stop offset=.948 stop-color=#422ebf /><stop offset=.961 stop-color=#4741e4 /><stop offset=1.000 stop-color=#4746ea /></linearGradient><linearGradient id=a46><stop offset=.000 stop-color=#249ee6 /><stop offset=.034 stop-color=#3d70ff /><stop offset=.040 stop-color=#4562fc /><stop offset=.047 stop-color=#4848ec /><stop offset=.054 stop-color=#4740e3 /><stop offset=.067 stop-color=#463ee1 /><stop offset=.155 stop-color=#4537d6 /><stop offset=.168 stop-color=#4536d4 /><stop offset=.215 stop-color=#4331c6 /><stop offset=.222 stop-color=#4230c3 /><stop offset=.235 stop-color=#4535d2 /><stop offset=.262 stop-color=#4330c4 /><stop offset=.276 stop-color=#4332cb /><stop offset=.296 stop-color=#4332ca /><stop offset=.316 stop-color=#4538d7 /><stop offset=.424 stop-color=#4746ea /><stop offset=.518 stop-color=#4758f8 /><stop offset=.551 stop-color=#4850f2 /><stop offset=.598 stop-color=#473ee2 /><stop offset=.672 stop-color=#463bdc /><stop offset=.706 stop-color=#4538d8 /><stop offset=.719 stop-color=#463cde /><stop offset=.773 stop-color=#4331c8 /><stop offset=.793 stop-color=#4433cd /><stop offset=.820 stop-color=#422ebe /><stop offset=.827 stop-color=#4331c7 /><stop offset=.840 stop-color=#412dbd /><stop offset=.847 stop-color=#4331c8 /><stop offset=.861 stop-color=#422ec0 /><stop offset=.867 stop-color=#4434ce /><stop offset=.881 stop-color=#412dbb /><stop offset=.887 stop-color=#4433cb /><stop offset=.901 stop-color=#4330c5 /><stop offset=.908 stop-color=#412cb9 /><stop offset=.934 stop-color=#4434cf /><stop offset=.948 stop-color=#4331c7 /><stop offset=.961 stop-color=#4744e8 /><stop offset=1.000 stop-color=#4849ed /></linearGradient><linearGradient id=a47><stop offset=.000 stop-color=#2797eb /><stop offset=.034 stop-color=#406cfe /><stop offset=.047 stop-color=#484ff2 /><stop offset=.054 stop-color=#4740e4 /><stop offset=.061 stop-color=#4744e8 /><stop offset=.074 stop-color=#463adb /><stop offset=.108 stop-color=#4639da /><stop offset=.168 stop-color=#4536d3 /><stop offset=.215 stop-color=#4330c5 /><stop offset=.222 stop-color=#412cba /><stop offset=.242 stop-color=#4332c9 /><stop offset=.262 stop-color=#412cbb /><stop offset=.282 stop-color=#422fc1 /><stop offset=.296 stop-color=#422fc0 /><stop offset=.309 stop-color=#4332ca /><stop offset=.350 stop-color=#4434cf /><stop offset=.397 stop-color=#4536d4 /><stop offset=.437 stop-color=#4744e8 /><stop offset=.457 stop-color=#484ff2 /><stop offset=.484 stop-color=#4851f3 /><stop offset=.524 stop-color=#4756f6 /><stop offset=.551 stop-color=#484ef1 /><stop offset=.598 stop-color=#463bdc /><stop offset=.652 stop-color=#4536d3 /><stop offset=.692 stop-color=#4332c9 /><stop offset=.706 stop-color=#4331c8 /><stop offset=.719 stop-color=#4536d4 /><stop offset=.739 stop-color=#4331c6 /><stop offset=.820 stop-color=#412dbd /><stop offset=.840 stop-color=#412dbd /><stop offset=.847 stop-color=#4332c8 /><stop offset=.861 stop-color=#422ebf /><stop offset=.867 stop-color=#4331c8 /><stop offset=.881 stop-color=#412dbc /><stop offset=.887 stop-color=#4332c9 /><stop offset=.908 stop-color=#402bb7 /><stop offset=.928 stop-color=#4433cc /><stop offset=.941 stop-color=#4331c8 /><stop offset=.955 stop-color=#4742e6 /><stop offset=1.000 stop-color=#484cef /></linearGradient><linearGradient id=a48><stop offset=.000 stop-color=#2c8ef1 /><stop offset=.034 stop-color=#4369fe /><stop offset=.047 stop-color=#4853f5 /><stop offset=.054 stop-color=#4741e5 /><stop offset=.074 stop-color=#4536d5 /><stop offset=.101 stop-color=#463de0 /><stop offset=.121 stop-color=#4537d5 /><stop offset=.161 stop-color=#4536d4 /><stop offset=.202 stop-color=#422fc0 /><stop offset=.215 stop-color=#422ec0 /><stop offset=.222 stop-color=#3e27ab /><stop offset=.242 stop-color=#422fc0 /><stop offset=.262 stop-color=#3e28ac /><stop offset=.282 stop-color=#412cba /><stop offset=.296 stop-color=#402ab3 /><stop offset=.309 stop-color=#412cb9 /><stop offset=.336 stop-color=#412dbc /><stop offset=.343 stop-color=#4230c4 /><stop offset=.356 stop-color=#402bb6 /><stop offset=.376 stop-color=#422fc2 /><stop offset=.390 stop-color=#402cb8 /><stop offset=.410 stop-color=#4433cc /><stop offset=.444 stop-color=#4536d3 /><stop offset=.457 stop-color=#4745e9 /><stop offset=.464 stop-color=#463cdf /><stop offset=.511 stop-color=#484bef /><stop offset=.551 stop-color=#4743e7 /><stop offset=.565 stop-color=#4537d5 /><stop offset=.578 stop-color=#4538d7 /><stop offset=.605 stop-color=#4332c9 /><stop offset=.645 stop-color=#402ab5 /><stop offset=.659 stop-color=#4230c4 /><stop offset=.692 stop-color=#3f29b2 /><stop offset=.706 stop-color=#3f29b1 /><stop offset=.719 stop-color=#4230c3 /><stop offset=.733 stop-color=#402ab5 /><stop offset=.753 stop-color=#3f28af /><stop offset=.840 stop-color=#402bb8 /><stop offset=.847 stop-color=#4230c3 /><stop offset=.881 stop-color=#402bb6 /><stop offset=.887 stop-color=#422fc2 /><stop offset=.908 stop-color=#3f28af /><stop offset=.928 stop-color=#4230c3 /><stop offset=.941 stop-color=#422fc2 /><stop offset=.948 stop-color=#463ddf /><stop offset=.961 stop-color=#484ef1 /><stop offset=1.000 stop-color=#4853f5 /></linearGradient><linearGradient id=a49><stop offset=.000 stop-color=#2e85f8 /><stop offset=.040 stop-color=#465ffb /><stop offset=.067 stop-color=#463cde /><stop offset=.101 stop-color=#4740e3 /><stop offset=.121 stop-color=#4539d9 /><stop offset=.195 stop-color=#4331c8 /><stop offset=.215 stop-color=#422fc0 /><stop offset=.222 stop-color=#3f28ae /><stop offset=.242 stop-color=#4330c4 /><stop offset=.262 stop-color=#3e28ac /><stop offset=.282 stop-color=#402bb7 /><stop offset=.336 stop-color=#402ab3 /><stop offset=.343 stop-color=#412dbc /><stop offset=.363 stop-color=#3f29b2 /><stop offset=.376 stop-color=#412cba /><stop offset=.390 stop-color=#3f28af /><stop offset=.403 stop-color=#422fc1 /><stop offset=.444 stop-color=#422fc1 /><stop offset=.450 stop-color=#4536d4 /><stop offset=.457 stop-color=#463ada /><stop offset=.464 stop-color=#4433cd /><stop offset=.491 stop-color=#4537d6 /><stop offset=.511 stop-color=#473ee2 /><stop offset=.551 stop-color=#4538d8 /><stop offset=.565 stop-color=#4330c5 /><stop offset=.578 stop-color=#4332ca /><stop offset=.605 stop-color=#412dbb /><stop offset=.632 stop-color=#402ab4 /><stop offset=.645 stop-color=#3f28ae /><stop offset=.659 stop-color=#412cba /><stop offset=.706 stop-color=#3e27a9 /><stop offset=.719 stop-color=#412dbc /><stop offset=.733 stop-color=#402ab3 /><stop offset=.753 stop-color=#3e27a9 /><stop offset=.840 stop-color=#402bb8 /><stop offset=.847 stop-color=#4230c3 /><stop offset=.881 stop-color=#402bb8 /><stop offset=.887 stop-color=#4230c4 /><stop offset=.914 stop-color=#402bb7 /><stop offset=.934 stop-color=#4330c5 /><stop offset=.941 stop-color=#4536d3 /><stop offset=.948 stop-color=#484bef /><stop offset=.968 stop-color=#4759f8 /><stop offset=1.000 stop-color=#465efb /></linearGradient><linearGradient id=a50><stop offset=.000 stop-color=#347afd /><stop offset=.047 stop-color=#4756f7 /><stop offset=.074 stop-color=#4743e7 /><stop offset=.108 stop-color=#4740e3 /><stop offset=.195 stop-color=#4435d1 /><stop offset=.229 stop-color=#422fc2 /><stop offset=.242 stop-color=#4536d3 /><stop offset=.255 stop-color=#402bb8 /><stop offset=.323 stop-color=#422ec0 /><stop offset=.336 stop-color=#402ab5 /><stop offset=.343 stop-color=#422ec0 /><stop offset=.363 stop-color=#402bb6 /><stop offset=.376 stop-color=#422ebf /><stop offset=.397 stop-color=#412cba /><stop offset=.403 stop-color=#4330c5 /><stop offset=.417 stop-color=#412dbc /><stop offset=.437 stop-color=#422fc1 /><stop offset=.444 stop-color=#412dbd /><stop offset=.457 stop-color=#4434cf /><stop offset=.464 stop-color=#4331c6 /><stop offset=.477 stop-color=#4433cd /><stop offset=.484 stop-color=#4230c4 /><stop offset=.511 stop-color=#4538d8 /><stop offset=.571 stop-color=#4331c7 /><stop offset=.605 stop-color=#402bb8 /><stop offset=.618 stop-color=#4230c3 /><stop offset=.639 stop-color=#402bb6 /><stop offset=.699 stop-color=#412cba /><stop offset=.706 stop-color=#3f29b2 /><stop offset=.719 stop-color=#422fc0 /><stop offset=.739 stop-color=#412ebe /><stop offset=.746 stop-color=#3e27ab /><stop offset=.766 stop-color=#412dbb /><stop offset=.780 stop-color=#402ab4 /><stop offset=.840 stop-color=#422fc1 /><stop offset=.854 stop-color=#4332c9 /><stop offset=.881 stop-color=#422fc2 /><stop offset=.887 stop-color=#4435d1 /><stop offset=.921 stop-color=#4331c7 /><stop offset=.934 stop-color=#4538d8 /><stop offset=.948 stop-color=#475cfa /><stop offset=1.000 stop-color=#406dfe /></linearGradient><linearGradient id=a51><stop offset=.000 stop-color=#3f6dfe /><stop offset=.074 stop-color=#484aee /><stop offset=.208 stop-color=#4434cf /><stop offset=.229 stop-color=#4433cd /><stop offset=.242 stop-color=#463ada /><stop offset=.255 stop-color=#412cba /><stop offset=.316 stop-color=#422fc1 /><stop offset=.323 stop-color=#4331c7 /><stop offset=.336 stop-color=#402ab5 /><stop offset=.350 stop-color=#422fc1 /><stop offset=.363 stop-color=#402bb8 /><stop offset=.383 stop-color=#422fc1 /><stop offset=.397 stop-color=#422ebf /><stop offset=.403 stop-color=#4332c8 /><stop offset=.417 stop-color=#412cba /><stop offset=.424 stop-color=#4230c4 /><stop offset=.444 stop-color=#412cba /><stop offset=.477 stop-color=#4331c7 /><stop offset=.484 stop-color=#412dbc /><stop offset=.518 stop-color=#4434ce /><stop offset=.524 stop-color=#422fc1 /><stop offset=.538 stop-color=#4332c9 /><stop offset=.545 stop-color=#412dbc /><stop offset=.571 stop-color=#4230c4 /><stop offset=.605 stop-color=#402ab4 /><stop offset=.618 stop-color=#4331c7 /><stop offset=.639 stop-color=#412cba /><stop offset=.645 stop-color=#422fc2 /><stop offset=.679 stop-color=#412cb9 /><stop offset=.692 stop-color=#4332c8 /><stop offset=.706 stop-color=#402bb8 /><stop offset=.733 stop-color=#4332c9 /><stop offset=.739 stop-color=#4331c6 /><stop offset=.746 stop-color=#3f28ae /><stop offset=.766 stop-color=#422fc1 /><stop offset=.780 stop-color=#402ab5 /><stop offset=.793 stop-color=#422fc1 /><stop offset=.840 stop-color=#4331c6 /><stop offset=.854 stop-color=#4434cf /><stop offset=.881 stop-color=#4433cb /><stop offset=.887 stop-color=#463adb /><stop offset=.921 stop-color=#4536d3 /><stop offset=.934 stop-color=#4746ea /><stop offset=.941 stop-color=#465efb /><stop offset=.955 stop-color=#3a73fe /><stop offset=1.000 stop-color=#2f81fa /></linearGradient><linearGradient id=a52><stop offset=.000 stop-color=#4562fc /><stop offset=.141 stop-color=#463ee1 /><stop offset=.229 stop-color=#4435d0 /><stop offset=.242 stop-color=#463adb /><stop offset=.255 stop-color=#422fc0 /><stop offset=.276 stop-color=#422fc2 /><stop offset=.309 stop-color=#422ebf /><stop offset=.323 stop-color=#4332c9 /><stop offset=.336 stop-color=#402bb8 /><stop offset=.350 stop-color=#4230c4 /><stop offset=.370 stop-color=#422fc1 /><stop offset=.397 stop-color=#422fc2 /><stop offset=.403 stop-color=#4332ca /><stop offset=.417 stop-color=#412cb9 /><stop offset=.430 stop-color=#422fc1 /><stop offset=.450 stop-color=#412dbd /><stop offset=.477 stop-color=#422fc2 /><stop offset=.491 stop-color=#422ebe /><stop offset=.518 stop-color=#4332c9 /><stop offset=.524 stop-color=#412ebe /><stop offset=.538 stop-color=#4230c4 /><stop offset=.545 stop-color=#412cb9 /><stop offset=.571 stop-color=#422fc2 /><stop offset=.605 stop-color=#402bb6 /><stop offset=.618 stop-color=#4331c7 /><stop offset=.639 stop-color=#412dbb /><stop offset=.645 stop-color=#4230c4 /><stop offset=.679 stop-color=#412dbc /><stop offset=.692 stop-color=#4332ca /><stop offset=.713 stop-color=#412dbd /><stop offset=.739 stop-color=#4331c6 /><stop offset=.746 stop-color=#3f29b2 /><stop offset=.766 stop-color=#422fc2 /><stop offset=.780 stop-color=#412cb8 /><stop offset=.807 stop-color=#4331c7 /><stop offset=.840 stop-color=#4433cd /><stop offset=.854 stop-color=#4538d8 /><stop offset=.881 stop-color=#4539d9 /><stop offset=.894 stop-color=#4741e5 /><stop offset=.921 stop-color=#463ee0 /><stop offset=.928 stop-color=#4744e8 /><stop offset=.934 stop-color=#475bf9 /><stop offset=.941 stop-color=#3677fe /><stop offset=.968 stop-color=#2c8ef1 /><stop offset=1.000 stop-color=#2797ea /></linearGradient><linearGradient id=a53><stop offset=.000 stop-color=#4756f7 /><stop offset=.101 stop-color=#4747eb /><stop offset=.175 stop-color=#463ee1 /><stop offset=.188 stop-color=#463ee0 /><stop offset=.235 stop-color=#4536d4 /><stop offset=.242 stop-color=#4639da /><stop offset=.255 stop-color=#4332cb /><stop offset=.296 stop-color=#4433cc /><stop offset=.316 stop-color=#4331c8 /><stop offset=.323 stop-color=#4433cc /><stop offset=.336 stop-color=#422ebf /><stop offset=.356 stop-color=#4331c6 /><stop offset=.390 stop-color=#422fc2 /><stop offset=.403 stop-color=#4433cd /><stop offset=.417 stop-color=#412cbb /><stop offset=.437 stop-color=#422fc0 /><stop offset=.504 stop-color=#412dbb /><stop offset=.524 stop-color=#422fc2 /><stop offset=.585 stop-color=#422ec0 /><stop offset=.598 stop-color=#402bb7 /><stop offset=.618 stop-color=#4331c7 /><stop offset=.639 stop-color=#412dbd /><stop offset=.659 stop-color=#422fc2 /><stop offset=.699 stop-color=#4330c5 /><stop offset=.719 stop-color=#422fc1 /><stop offset=.739 stop-color=#4230c3 /><stop offset=.746 stop-color=#402bb7 /><stop offset=.773 stop-color=#422ebf /><stop offset=.820 stop-color=#4433cd /><stop offset=.861 stop-color=#4740e3 /><stop offset=.901 stop-color=#484bef /><stop offset=.921 stop-color=#484cef /><stop offset=.928 stop-color=#4758f8 /><stop offset=.934 stop-color=#3678fe /><stop offset=.941 stop-color=#2d8cf3 /><stop offset=.995 stop-color=#1babde /><stop offset=1.000 stop-color=#1aacdd /></linearGradient><linearGradient id=a54><stop offset=.000 stop-color=#4756f7 /><stop offset=.101 stop-color=#4747ec /><stop offset=.141 stop-color=#4746ea /><stop offset=.175 stop-color=#4741e5 /><stop offset=.188 stop-color=#4743e7 /><stop offset=.235 stop-color=#4538d7 /><stop offset=.296 stop-color=#4537d6 /><stop offset=.336 stop-color=#4331c8 /><stop offset=.370 stop-color=#4434cd /><stop offset=.383 stop-color=#422fc0 /><stop offset=.403 stop-color=#4535d2 /><stop offset=.417 stop-color=#412ebe /><stop offset=.437 stop-color=#4230c4 /><stop offset=.450 stop-color=#422ec0 /><stop offset=.497 stop-color=#4230c3 /><stop offset=.511 stop-color=#422fc0 /><stop offset=.531 stop-color=#4230c4 /><stop offset=.585 stop-color=#4230c3 /><stop offset=.598 stop-color=#412dbb /><stop offset=.625 stop-color=#4331c6 /><stop offset=.639 stop-color=#412ebe /><stop offset=.659 stop-color=#4331c7 /><stop offset=.739 stop-color=#422fc1 /><stop offset=.807 stop-color=#4331c7 /><stop offset=.854 stop-color=#484aee /><stop offset=.901 stop-color=#475af9 /><stop offset=.921 stop-color=#4660fb /><stop offset=.928 stop-color=#3974fe /><stop offset=.934 stop-color=#2c8ef1 /><stop offset=.968 stop-color=#14b0d8 /><stop offset=.995 stop-color=#01b8c7 /><stop offset=1.000 stop-color=#01b9c6 /></linearGradient><linearGradient id=a55><stop offset=.000 stop-color=#4756f7 /><stop offset=.101 stop-color=#4849ed /><stop offset=.175 stop-color=#4745e9 /><stop offset=.208 stop-color=#4741e5 /><stop offset=.255 stop-color=#463ddf /><stop offset=.356 stop-color=#4536d3 /><stop offset=.390 stop-color=#4433cc /><stop offset=.403 stop-color=#4537d5 /><stop offset=.424 stop-color=#4331c6 /><stop offset=.497 stop-color=#4331c6 /><stop offset=.511 stop-color=#422fc2 /><stop offset=.531 stop-color=#4331c6 /><stop offset=.585 stop-color=#4230c3 /><stop offset=.632 stop-color=#422fc2 /><stop offset=.706 stop-color=#4330c5 /><stop offset=.719 stop-color=#422fc1 /><stop offset=.733 stop-color=#4331c6 /><stop offset=.753 stop-color=#422fc0 /><stop offset=.807 stop-color=#4331c7 /><stop offset=.854 stop-color=#4852f4 /><stop offset=.894 stop-color=#416cfe /><stop offset=.914 stop-color=#416afe /><stop offset=.928 stop-color=#2d8cf3 /><stop offset=.948 stop-color=#1aacdd /><stop offset=.968 stop-color=#01b9c5 /><stop offset=1.000 stop-color=#24c2a5 /></linearGradient><linearGradient id=a56><stop offset=.000 stop-color=#4756f7 /><stop offset=.087 stop-color=#484cef /><stop offset=.134 stop-color=#4849ed /><stop offset=.182 stop-color=#473fe2 /><stop offset=.202 stop-color=#4744e8 /><stop offset=.235 stop-color=#463cde /><stop offset=.276 stop-color=#463de0 /><stop offset=.397 stop-color=#4536d2 /><stop offset=.444 stop-color=#4331c8 /><stop offset=.497 stop-color=#4331c7 /><stop offset=.511 stop-color=#4230c4 /><stop offset=.558 stop-color=#4331c7 /><stop offset=.592 stop-color=#422fc1 /><stop offset=.612 stop-color=#4332c9 /><stop offset=.719 stop-color=#422ebf /><stop offset=.726 stop-color=#4332ca /><stop offset=.746 stop-color=#412dbc /><stop offset=.787 stop-color=#4332c9 /><stop offset=.807 stop-color=#4230c4 /><stop offset=.847 stop-color=#484cef /><stop offset=.894 stop-color=#3e70ff /><stop offset=.908 stop-color=#3f6dfe /><stop offset=.921 stop-color=#2e87f7 /><stop offset=.941 stop-color=#1aabde /><stop offset=.955 stop-color=#04b6cc /><stop offset=.961 stop-color=#02bac2 /><stop offset=.982 stop-color=#28c39f /><stop offset=1.000 stop-color=#32c78e /></linearGradient><linearGradient id=a57><stop offset=.000 stop-color=#4756f7 /><stop offset=.081 stop-color=#4852f4 /><stop offset=.108 stop-color=#4743e7 /><stop offset=.168 stop-color=#4742e6 /><stop offset=.182 stop-color=#463bdc /><stop offset=.202 stop-color=#4741e5 /><stop offset=.235 stop-color=#463adb /><stop offset=.269 stop-color=#473ee1 /><stop offset=.296 stop-color=#4536d3 /><stop offset=.316 stop-color=#4539d9 /><stop offset=.329 stop-color=#4535d2 /><stop offset=.417 stop-color=#4435d1 /><stop offset=.430 stop-color=#4331c6 /><stop offset=.457 stop-color=#4434cf /><stop offset=.511 stop-color=#4330c5 /><stop offset=.558 stop-color=#4331c7 /><stop offset=.578 stop-color=#4330c5 /><stop offset=.585 stop-color=#412dbc /><stop offset=.605 stop-color=#4434cf /><stop offset=.639 stop-color=#4230c3 /><stop offset=.719 stop-color=#412ebe /><stop offset=.726 stop-color=#4433cb /><stop offset=.746 stop-color=#412dbb /><stop offset=.760 stop-color=#4331c7 /><stop offset=.807 stop-color=#422ec0 /><stop offset=.834 stop-color=#473fe2 /><stop offset=.887 stop-color=#4464fd /><stop offset=.908 stop-color=#406cfe /><stop offset=.928 stop-color=#259be8 /><stop offset=.961 stop-color=#02bac2 /><stop offset=.982 stop-color=#28c39f /><stop offset=1.000 stop-color=#32c78e /></linearGradient><linearGradient id=a58><stop offset=.000 stop-color=#4756f7 /><stop offset=.081 stop-color=#4855f6 /><stop offset=.108 stop-color=#473fe3 /><stop offset=.168 stop-color=#463de0 /><stop offset=.188 stop-color=#4639d9 /><stop offset=.208 stop-color=#4539d9 /><stop offset=.235 stop-color=#4537d5 /><stop offset=.269 stop-color=#4639da /><stop offset=.289 stop-color=#4433cb /><stop offset=.316 stop-color=#4536d3 /><stop offset=.356 stop-color=#4433cd /><stop offset=.417 stop-color=#4434d0 /><stop offset=.430 stop-color=#4230c4 /><stop offset=.457 stop-color=#4433cd /><stop offset=.511 stop-color=#4330c5 /><stop offset=.558 stop-color=#4331c6 /><stop offset=.585 stop-color=#412dbc /><stop offset=.605 stop-color=#4433cc /><stop offset=.659 stop-color=#422fc2 /><stop offset=.719 stop-color=#412ebe /><stop offset=.726 stop-color=#4332c8 /><stop offset=.746 stop-color=#412dbb /><stop offset=.766 stop-color=#4230c4 /><stop offset=.807 stop-color=#422ebf /><stop offset=.840 stop-color=#463ee1 /><stop offset=.901 stop-color=#465ffb /><stop offset=.908 stop-color=#426afe /><stop offset=.914 stop-color=#3080fb /><stop offset=.941 stop-color=#1fa6e2 /><stop offset=.968 stop-color=#01b9c5 /><stop offset=1.000 stop-color=#24c2a5 /></linearGradient><linearGradient id=a59><stop offset=.000 stop-color=#465dfa /><stop offset=.087 stop-color=#4755f6 /><stop offset=.108 stop-color=#463cde /><stop offset=.208 stop-color=#4434cf /><stop offset=.276 stop-color=#4332cb /><stop offset=.329 stop-color=#4230c3 /><stop offset=.417 stop-color=#4332ca /><stop offset=.444 stop-color=#422fc1 /><stop offset=.578 stop-color=#422fc0 /><stop offset=.672 stop-color=#422fc2 /><stop offset=.739 stop-color=#422fc1 /><stop offset=.753 stop-color=#422ebe /><stop offset=.813 stop-color=#4331c6 /><stop offset=.887 stop-color=#4849ed /><stop offset=.901 stop-color=#475af9 /><stop offset=.914 stop-color=#3080fb /><stop offset=.975 stop-color=#0cb3d3 /><stop offset=1.000 stop-color=#01b9c6 /></linearGradient><linearGradient id=a60><stop offset=.000 stop-color=#4564fd /><stop offset=.087 stop-color=#475cfa /><stop offset=.114 stop-color=#4435d1 /><stop offset=.262 stop-color=#412cba /><stop offset=.323 stop-color=#422ebe /><stop offset=.336 stop-color=#3f29b0 /><stop offset=.397 stop-color=#412cb8 /><stop offset=.424 stop-color=#412cb9 /><stop offset=.524 stop-color=#402ab4 /><stop offset=.659 stop-color=#412cb8 /><stop offset=.666 stop-color=#422ec0 /><stop offset=.686 stop-color=#402ab3 /><stop offset=.713 stop-color=#402bb7 /><stop offset=.807 stop-color=#412cb9 /><stop offset=.861 stop-color=#4332ca /><stop offset=.887 stop-color=#4740e3 /><stop offset=.901 stop-color=#465efb /><stop offset=.914 stop-color=#327cfc /><stop offset=.995 stop-color=#1babde /><stop offset=1.000 stop-color=#1aacdd /></linearGradient><linearGradient id=a61><stop offset=.000 stop-color=#416bfe /><stop offset=.094 stop-color=#465ffb /><stop offset=.121 stop-color=#4536d3 /><stop offset=.175 stop-color=#4330c5 /><stop offset=.282 stop-color=#402bb7 /><stop offset=.323 stop-color=#412dbd /><stop offset=.336 stop-color=#3f28af /><stop offset=.397 stop-color=#402bb6 /><stop offset=.437 stop-color=#402ab5 /><stop offset=.659 stop-color=#412cb9 /><stop offset=.666 stop-color=#422ebf /><stop offset=.686 stop-color=#402ab3 /><stop offset=.713 stop-color=#402cb8 /><stop offset=.733 stop-color=#402bb6 /><stop offset=.834 stop-color=#412ebe /><stop offset=.861 stop-color=#4330c4 /><stop offset=.881 stop-color=#4639da /><stop offset=.901 stop-color=#4366fd /><stop offset=.928 stop-color=#317dfc /><stop offset=1.000 stop-color=#259be8 /></linearGradient><linearGradient id=a62><stop offset=.000 stop-color=#416bfe /><stop offset=.101 stop-color=#465efb /><stop offset=.128 stop-color=#463adb /><stop offset=.195 stop-color=#4433cc /><stop offset=.282 stop-color=#422fc1 /><stop offset=.410 stop-color=#422fc0 /><stop offset=.672 stop-color=#422fc1 /><stop offset=.793 stop-color=#422fc1 /><stop offset=.813 stop-color=#4331c6 /><stop offset=.861 stop-color=#4435d1 /><stop offset=.881 stop-color=#4743e7 /><stop offset=.901 stop-color=#4367fd /><stop offset=1.000 stop-color=#2d87f7 /></linearGradient><linearGradient id=a63><stop offset=.000 stop-color=#416bfe /><stop offset=.108 stop-color=#465dfa /><stop offset=.134 stop-color=#463bdc /><stop offset=.182 stop-color=#4434ce /><stop offset=.316 stop-color=#422fc2 /><stop offset=.410 stop-color=#422fc1 /><stop offset=.457 stop-color=#422fc0 /><stop offset=.471 stop-color=#4330c4 /><stop offset=.793 stop-color=#422fc2 /><stop offset=.807 stop-color=#4433cd /><stop offset=.820 stop-color=#4330c5 /><stop offset=.861 stop-color=#4538d7 /><stop offset=.894 stop-color=#4660fc /><stop offset=1.000 stop-color=#3776fe /></linearGradient><linearGradient id=a64><stop offset=.000 stop-color=#416bfe /><stop offset=.114 stop-color=#475dfa /><stop offset=.148 stop-color=#4537d6 /><stop offset=.269 stop-color=#4330c5 /><stop offset=.430 stop-color=#422fc2 /><stop offset=.491 stop-color=#422ec0 /><stop offset=.639 stop-color=#422fc2 /><stop offset=.793 stop-color=#422fc2 /><stop offset=.807 stop-color=#4433cd /><stop offset=.820 stop-color=#4330c5 /><stop offset=.854 stop-color=#4537d6 /><stop offset=.887 stop-color=#475cfa /><stop offset=1.000 stop-color=#4269fe /></linearGradient><linearGradient id=a65><stop offset=.000 stop-color=#416bfe /><stop offset=.121 stop-color=#475cfa /><stop offset=.155 stop-color=#4538d7 /><stop offset=.269 stop-color=#4230c4 /><stop offset=.793 stop-color=#422fc3 /><stop offset=.813 stop-color=#4331c8 /><stop offset=.847 stop-color=#4536d4 /><stop offset=.881 stop-color=#4759f8 /><stop offset=1.000 stop-color=#4660fb /></linearGradient><linearGradient id=a66><stop offset=.000 stop-color=#416bfe /><stop offset=.128 stop-color=#475dfa /><stop offset=.161 stop-color=#4539d9 /><stop offset=.255 stop-color=#4331c6 /><stop offset=.659 stop-color=#4331c7 /><stop offset=.800 stop-color=#4331c8 /><stop offset=.834 stop-color=#4435d1 /><stop offset=.874 stop-color=#4759f9 /><stop offset=1.000 stop-color=#465efb /></linearGradient><linearGradient id=a67><stop offset=.000 stop-color=#416bfe /><stop offset=.134 stop-color=#465dfa /><stop offset=.168 stop-color=#463adb /><stop offset=.235 stop-color=#4331c8 /><stop offset=.800 stop-color=#4332ca /><stop offset=.834 stop-color=#4639d9 /><stop offset=.867 stop-color=#475af9 /><stop offset=1.000 stop-color=#465dfa /></linearGradient><linearGradient id=a68><stop offset=.000 stop-color=#416bfe /><stop offset=.141 stop-color=#465dfb /><stop offset=.182 stop-color=#4538d8 /><stop offset=.282 stop-color=#4331c8 /><stop offset=.807 stop-color=#4434cf /><stop offset=.834 stop-color=#4741e5 /><stop offset=.861 stop-color=#475cfa /><stop offset=1.000 stop-color=#475cfa /></linearGradient><linearGradient id=a69><stop offset=.000 stop-color=#4759f8 /><stop offset=.155 stop-color=#4850f3 /><stop offset=.202 stop-color=#4536d3 /><stop offset=.410 stop-color=#4332ca /><stop offset=.800 stop-color=#4435d0 /><stop offset=.834 stop-color=#4849ed /><stop offset=.867 stop-color=#4759f8 /><stop offset=1.000 stop-color=#475cfa /></linearGradient><linearGradient id=a70><stop offset=.000 stop-color=#4747ec /><stop offset=.168 stop-color=#4745e9 /><stop offset=.229 stop-color=#4435d0 /><stop offset=.793 stop-color=#4435d1 /><stop offset=.847 stop-color=#4852f4 /><stop offset=1.000 stop-color=#475bfa /></linearGradient><linearGradient id=a71><stop offset=.000 stop-color=#475af9 /><stop offset=.175 stop-color=#484ef1 /><stop offset=.229 stop-color=#4536d3 /><stop offset=.780 stop-color=#4536d3 /><stop offset=.840 stop-color=#4756f6 /><stop offset=1.000 stop-color=#475bf9 /></linearGradient><linearGradient id=a72><stop offset=.000 stop-color=#406dfe /><stop offset=.182 stop-color=#4757f7 /><stop offset=.229 stop-color=#4538d8 /><stop offset=.504 stop-color=#4435d0 /><stop offset=.773 stop-color=#4538d7 /><stop offset=.827 stop-color=#4759f8 /><stop offset=1.000 stop-color=#475af9 /></linearGradient><linearGradient id=a73><stop offset=.000 stop-color=#2f80fa /><stop offset=.114 stop-color=#406cfe /><stop offset=.195 stop-color=#475cfa /><stop offset=.242 stop-color=#463bdd /><stop offset=.753 stop-color=#463adb /><stop offset=.820 stop-color=#465ffb /><stop offset=1.000 stop-color=#475af9 /></linearGradient><linearGradient id=a74><stop offset=.000 stop-color=#2895ec /><stop offset=.074 stop-color=#3c72ff /><stop offset=.202 stop-color=#465ffb /><stop offset=.255 stop-color=#463ee1 /><stop offset=.746 stop-color=#473ee1 /><stop offset=.807 stop-color=#4660fb /><stop offset=1.000 stop-color=#4759f9 /></linearGradient><linearGradient id=a75><stop offset=.000 stop-color=#1ea7e1 /><stop offset=.067 stop-color=#3875fe /><stop offset=.215 stop-color=#465efb /><stop offset=.276 stop-color=#463cde /><stop offset=.733 stop-color=#463de0 /><stop offset=.800 stop-color=#4561fc /><stop offset=1.000 stop-color=#4759f8 /></linearGradient><linearGradient id=a76><stop offset=.000 stop-color=#19addc /><stop offset=.067 stop-color=#3578fd /><stop offset=.229 stop-color=#475cfa /><stop offset=.282 stop-color=#463adb /><stop offset=.686 stop-color=#4537d6 /><stop offset=.739 stop-color=#4744e9 /><stop offset=.787 stop-color=#4562fc /><stop offset=1.000 stop-color=#4758f8 /></linearGradient><linearGradient id=a77><stop offset=.000 stop-color=#1fa6e1 /><stop offset=.067 stop-color=#3777fe /><stop offset=.249 stop-color=#475bf9 /><stop offset=.309 stop-color=#4742e6 /><stop offset=.713 stop-color=#4747eb /><stop offset=.787 stop-color=#4564fd /><stop offset=1.000 stop-color=#4758f8 /></linearGradient><linearGradient id=a78><stop offset=.000 stop-color=#239fe5 /><stop offset=.067 stop-color=#3c72ff /><stop offset=.269 stop-color=#475bf9 /><stop offset=.350 stop-color=#4849ed /><stop offset=.699 stop-color=#484ff1 /><stop offset=.780 stop-color=#4465fd /><stop offset=1.000 stop-color=#4757f7 /></linearGradient><linearGradient id=a79><stop offset=.000 stop-color=#2c8ef2 /><stop offset=.067 stop-color=#4368fe /><stop offset=.296 stop-color=#4756f6 /><stop offset=.477 stop-color=#484cef /><stop offset=.699 stop-color=#4755f6 /><stop offset=.793 stop-color=#4660fc /><stop offset=1.000 stop-color=#4757f7 /></linearGradient><linearGradient id=a80><stop offset=.000 stop-color=#406dfe /><stop offset=.087 stop-color=#475af9 /><stop offset=.659 stop-color=#4851f3 /><stop offset=.894 stop-color=#4757f7 /><stop offset=1.000 stop-color=#4756f7 /></linearGradient><linearGradient id=a81><stop offset=.000 stop-color=#484cf0 /><stop offset=.827 stop-color=#4758f8 /><stop offset=1.000 stop-color=#4367fd /></linearGradient><linearGradient id=a82><stop offset=.000 stop-color=#3b72fe /><stop offset=.350 stop-color=#465efb /><stop offset=.578 stop-color=#4756f6 /><stop offset=.766 stop-color=#416bfe /><stop offset=1.000 stop-color=#3579fd /></linearGradient><linearGradient id=a83><stop offset=.000 stop-color=#2797eb /><stop offset=.343 stop-color=#337bfc /><stop offset=.410 stop-color=#465dfa /><stop offset=.592 stop-color=#465efb /><stop offset=.692 stop-color=#2e83f9 /><stop offset=1.000 stop-color=#2d89f5 /></linearGradient><linearGradient id=a84><stop offset=.000 stop-color=#1ea7e1 /><stop offset=.262 stop-color=#2a92ee /><stop offset=.363 stop-color=#2e87f7 /><stop offset=.444 stop-color=#465ffb /><stop offset=.565 stop-color=#4561fc /><stop offset=.639 stop-color=#2d88f6 /><stop offset=.787 stop-color=#2a92ee /><stop offset=1.000 stop-color=#2a92ee /></linearGradient><linearGradient id=a85><stop offset=.000 stop-color=#1da8e0 /><stop offset=.229 stop-color=#2995ec /><stop offset=.376 stop-color=#2d8cf3 /><stop offset=.457 stop-color=#4465fd /><stop offset=.538 stop-color=#4564fd /><stop offset=.612 stop-color=#2d88f6 /><stop offset=.726 stop-color=#2995ec /><stop offset=1.000 stop-color=#2995ec /></linearGradient><linearGradient id=a86><stop offset=.000 stop-color=#1ca9df /><stop offset=.195 stop-color=#2798ea /><stop offset=.397 stop-color=#2c8ff0 /><stop offset=.457 stop-color=#3c71ff /><stop offset=.511 stop-color=#4367fd /><stop offset=.592 stop-color=#2d8cf3 /><stop offset=.726 stop-color=#2797eb /><stop offset=1.000 stop-color=#2797eb /></linearGradient><linearGradient id=a87><stop offset=.000 stop-color=#1babde /><stop offset=.161 stop-color=#259be8 /><stop offset=.424 stop-color=#2b91ef /><stop offset=.504 stop-color=#3e70ff /><stop offset=.585 stop-color=#2a93ed /><stop offset=1.000 stop-color=#269ae9 /></linearGradient><linearGradient id=a88><stop offset=.000 stop-color=#1aacdd /><stop offset=.148 stop-color=#249de6 /><stop offset=.437 stop-color=#2994ed /><stop offset=.504 stop-color=#327bfc /><stop offset=.592 stop-color=#2699e9 /><stop offset=1.000 stop-color=#259be8 /></linearGradient><linearGradient id=b0><stop offset=.000 stop-color=#402ab5 /><stop offset=.020 stop-color=#422ebf /><stop offset=.040 stop-color=#402ab3 /><stop offset=.081 stop-color=#412dbb /><stop offset=.087 stop-color=#3e28ad /><stop offset=.094 stop-color=#3f28af /><stop offset=.101 stop-color=#4230c3 /><stop offset=.114 stop-color=#412dbb /><stop offset=.121 stop-color=#422fc1 /><stop offset=.141 stop-color=#402ab5 /><stop offset=.168 stop-color=#412cba /><stop offset=.202 stop-color=#3f29b0 /><stop offset=.215 stop-color=#3f28ad /><stop offset=.222 stop-color=#402bb8 /><stop offset=.242 stop-color=#3e26a8 /><stop offset=.269 stop-color=#3f28af /><stop offset=.282 stop-color=#3e27a9 /><stop offset=.303 stop-color=#412cb9 /><stop offset=.329 stop-color=#402ab5 /><stop offset=.376 stop-color=#412dbc /><stop offset=.397 stop-color=#3f29b1 /><stop offset=.424 stop-color=#412dbd /><stop offset=.437 stop-color=#3e27ab /><stop offset=.464 stop-color=#3e26a8 /><stop offset=.484 stop-color=#402bb7 /><stop offset=.497 stop-color=#402ab4 /><stop offset=.511 stop-color=#422ebf /><stop offset=.551 stop-color=#402ab4 /><stop offset=.578 stop-color=#412cb8 /><stop offset=.585 stop-color=#3e28ac /><stop offset=.618 stop-color=#412cba /><stop offset=.659 stop-color=#3f29b1 /><stop offset=.719 stop-color=#412cba /><stop offset=.760 stop-color=#412ebe /><stop offset=.766 stop-color=#3e27ac /><stop offset=.780 stop-color=#412dbb /><stop offset=.807 stop-color=#3f28af /><stop offset=.820 stop-color=#412dbc /><stop offset=.827 stop-color=#3f28ad /><stop offset=.847 stop-color=#412ebe /><stop offset=.861 stop-color=#3e27aa /><stop offset=.874 stop-color=#3f28ae /><stop offset=.887 stop-color=#402bb6 /><stop offset=.908 stop-color=#4230c3 /><stop offset=.921 stop-color=#3e26a8 /><stop offset=.948 stop-color=#422ebf /><stop offset=.968 stop-color=#3f28af /><stop offset=.982 stop-color=#412cb9 /><stop offset=1.000 stop-color=#402ab5 /></linearGradient><linearGradient id=b1><stop offset=.000 stop-color=#402ab3 /><stop offset=.020 stop-color=#412dbd /><stop offset=.054 stop-color=#3f29b0 /><stop offset=.081 stop-color=#412cb9 /><stop offset=.087 stop-color=#3e28ac /><stop offset=.094 stop-color=#3f28af /><stop offset=.101 stop-color=#422fc2 /><stop offset=.114 stop-color=#422ebe /><stop offset=.121 stop-color=#4330c5 /><stop offset=.141 stop-color=#402bb6 /><stop offset=.175 stop-color=#412dbb /><stop offset=.188 stop-color=#402ab5 /><stop offset=.215 stop-color=#3f28ae /><stop offset=.229 stop-color=#402ab3 /><stop offset=.242 stop-color=#3e28ad /><stop offset=.269 stop-color=#402ab3 /><stop offset=.282 stop-color=#3e28ac /><stop offset=.303 stop-color=#3f29b2 /><stop offset=.376 stop-color=#412dbc /><stop offset=.410 stop-color=#402ab4 /><stop offset=.424 stop-color=#412cb9 /><stop offset=.437 stop-color=#3e27ac /><stop offset=.497 stop-color=#402ab5 /><stop offset=.518 stop-color=#412dbd /><stop offset=.558 stop-color=#402cb8 /><stop offset=.578 stop-color=#412ebd /><stop offset=.605 stop-color=#402bb6 /><stop offset=.739 stop-color=#412cbb /><stop offset=.760 stop-color=#412dbb /><stop offset=.766 stop-color=#3f28ae /><stop offset=.787 stop-color=#402bb6 /><stop offset=.807 stop-color=#3f29b1 /><stop offset=.820 stop-color=#412cba /><stop offset=.827 stop-color=#3e28ac /><stop offset=.840 stop-color=#412dbb /><stop offset=.861 stop-color=#3e27ac /><stop offset=.908 stop-color=#412dbb /><stop offset=.921 stop-color=#3e27ab /><stop offset=.941 stop-color=#412cb9 /><stop offset=.968 stop-color=#3f28ad /><stop offset=.982 stop-color=#412dbc /><stop offset=.995 stop-color=#402ab3 /><stop offset=1.000 stop-color=#402bb7 /></linearGradient><linearGradient id=b2><stop offset=.000 stop-color=#3f29b1 /><stop offset=.020 stop-color=#412cba /><stop offset=.054 stop-color=#3f28ae /><stop offset=.074 stop-color=#412dbb /><stop offset=.087 stop-color=#3e28ac /><stop offset=.094 stop-color=#3f29b0 /><stop offset=.101 stop-color=#422fc2 /><stop offset=.114 stop-color=#422fc1 /><stop offset=.121 stop-color=#4332ca /><stop offset=.134 stop-color=#402bb6 /><stop offset=.155 stop-color=#402ab5 /><stop offset=.168 stop-color=#4230c4 /><stop offset=.182 stop-color=#3f29b0 /><stop offset=.202 stop-color=#402bb7 /><stop offset=.215 stop-color=#3f28af /><stop offset=.276 stop-color=#402bb6 /><stop offset=.296 stop-color=#402ab4 /><stop offset=.309 stop-color=#3e27aa /><stop offset=.323 stop-color=#412cb8 /><stop offset=.383 stop-color=#412dbc /><stop offset=.417 stop-color=#3f29b2 /><stop offset=.450 stop-color=#3f29b2 /><stop offset=.477 stop-color=#3f29b1 /><stop offset=.484 stop-color=#3e27aa /><stop offset=.518 stop-color=#412ebe /><stop offset=.545 stop-color=#402ab3 /><stop offset=.578 stop-color=#422fc2 /><stop offset=.598 stop-color=#3f29b2 /><stop offset=.645 stop-color=#402bb8 /><stop offset=.672 stop-color=#3f29b1 /><stop offset=.753 stop-color=#412cba /><stop offset=.773 stop-color=#402ab3 /><stop offset=.820 stop-color=#412cb9 /><stop offset=.827 stop-color=#3e27ac /><stop offset=.840 stop-color=#412dbb /><stop offset=.861 stop-color=#3f28ae /><stop offset=.908 stop-color=#402ab3 /><stop offset=.921 stop-color=#3f28af /><stop offset=.934 stop-color=#412cba /><stop offset=.961 stop-color=#402ab4 /><stop offset=.968 stop-color=#3e27ab /><stop offset=.982 stop-color=#422ebe /><stop offset=.988 stop-color=#3f28af /><stop offset=1.000 stop-color=#412cb8 /></linearGradient><linearGradient id=b3><stop offset=.000 stop-color=#3f28af /><stop offset=.027 stop-color=#402bb6 /><stop offset=.054 stop-color=#3e28ad /><stop offset=.074 stop-color=#412dbc /><stop offset=.087 stop-color=#3e28ad /><stop offset=.094 stop-color=#3f29b1 /><stop offset=.101 stop-color=#422fc1 /><stop offset=.114 stop-color=#4230c4 /><stop offset=.121 stop-color=#4433cd /><stop offset=.134 stop-color=#402bb7 /><stop offset=.155 stop-color=#402ab3 /><stop offset=.168 stop-color=#4331c8 /><stop offset=.175 stop-color=#4230c3 /><stop offset=.182 stop-color=#3f28af /><stop offset=.202 stop-color=#412cba /><stop offset=.222 stop-color=#402ab3 /><stop offset=.255 stop-color=#412dbc /><stop offset=.296 stop-color=#3f29b2 /><stop offset=.309 stop-color=#3e26a8 /><stop offset=.323 stop-color=#412dbb /><stop offset=.336 stop-color=#402ab4 /><stop offset=.370 stop-color=#422ebe /><stop offset=.437 stop-color=#3f28ad /><stop offset=.471 stop-color=#402ab5 /><stop offset=.484 stop-color=#3e26a8 /><stop offset=.518 stop-color=#412ebe /><stop offset=.545 stop-color=#3f29af /><stop offset=.558 stop-color=#4330c5 /><stop offset=.571 stop-color=#422fc1 /><stop offset=.585 stop-color=#4331c8 /><stop offset=.598 stop-color=#3f29b1 /><stop offset=.639 stop-color=#412cb9 /><stop offset=.659 stop-color=#402ab4 /><stop offset=.666 stop-color=#3e27a9 /><stop offset=.699 stop-color=#402ab5 /><stop offset=.753 stop-color=#402bb7 /><stop offset=.793 stop-color=#402ab5 /><stop offset=.820 stop-color=#402bb7 /><stop offset=.827 stop-color=#3e27ac /><stop offset=.840 stop-color=#412cbb /><stop offset=.854 stop-color=#3f28ae /><stop offset=.894 stop-color=#402ab4 /><stop offset=.914 stop-color=#3f28ad /><stop offset=.928 stop-color=#412ebe /><stop offset=.948 stop-color=#3e28ac /><stop offset=.961 stop-color=#402ab4 /><stop offset=.968 stop-color=#3e27aa /><stop offset=.982 stop-color=#422ebf /><stop offset=.988 stop-color=#3e28ad /><stop offset=1.000 stop-color=#412cb9 /></linearGradient><linearGradient id=b4><stop offset=.000 stop-color=#402ab3 /><stop offset=.040 stop-color=#402bb6 /><stop offset=.061 stop-color=#402bb6 /><stop offset=.081 stop-color=#402bb6 /><stop offset=.094 stop-color=#402ab3 /><stop offset=.101 stop-color=#422ebf /><stop offset=.114 stop-color=#422fc1 /><stop offset=.121 stop-color=#4432cb /><stop offset=.134 stop-color=#402bb6 /><stop offset=.155 stop-color=#402bb7 /><stop offset=.168 stop-color=#4331c6 /><stop offset=.182 stop-color=#3f29b0 /><stop offset=.208 stop-color=#402ab3 /><stop offset=.235 stop-color=#3f28af /><stop offset=.255 stop-color=#402bb7 /><stop offset=.309 stop-color=#3f29af /><stop offset=.329 stop-color=#402bb7 /><stop offset=.356 stop-color=#402bb6 /><stop offset=.376 stop-color=#412dbb /><stop offset=.437 stop-color=#3f28af /><stop offset=.471 stop-color=#412cb9 /><stop offset=.484 stop-color=#3e27aa /><stop offset=.511 stop-color=#412dbc /><stop offset=.545 stop-color=#402ab3 /><stop offset=.558 stop-color=#4330c5 /><stop offset=.578 stop-color=#422ec0 /><stop offset=.592 stop-color=#412dbb /><stop offset=.659 stop-color=#402ab4 /><stop offset=.666 stop-color=#3e27aa /><stop offset=.679 stop-color=#402bb7 /><stop offset=.820 stop-color=#402bb7 /><stop offset=.827 stop-color=#3f29b0 /><stop offset=.840 stop-color=#412cba /><stop offset=.854 stop-color=#3f28ae /><stop offset=.874 stop-color=#402bb6 /><stop offset=.921 stop-color=#402ab3 /><stop offset=.934 stop-color=#412cb9 /><stop offset=.948 stop-color=#3e27ab /><stop offset=.961 stop-color=#402bb7 /><stop offset=.968 stop-color=#3f28ad /><stop offset=.982 stop-color=#412cb9 /><stop offset=.988 stop-color=#3f28ae /><stop offset=1.000 stop-color=#402bb7 /></linearGradient><linearGradient id=b5><stop offset=.000 stop-color=#402bb6 /><stop offset=.013 stop-color=#3f29b2 /><stop offset=.040 stop-color=#402bb8 /><stop offset=.094 stop-color=#402ab5 /><stop offset=.101 stop-color=#412ebe /><stop offset=.114 stop-color=#422ebf /><stop offset=.121 stop-color=#4332c9 /><stop offset=.134 stop-color=#402ab5 /><stop offset=.168 stop-color=#4230c4 /><stop offset=.182 stop-color=#3f29b1 /><stop offset=.222 stop-color=#402ab5 /><stop offset=.235 stop-color=#3e27ab /><stop offset=.242 stop-color=#402bb7 /><stop offset=.289 stop-color=#3f28af /><stop offset=.336 stop-color=#412cb9 /><stop offset=.356 stop-color=#3f29b0 /><stop offset=.370 stop-color=#412dbb /><stop offset=.430 stop-color=#3f28ae /><stop offset=.477 stop-color=#412cba /><stop offset=.484 stop-color=#3f28ae /><stop offset=.518 stop-color=#412dbd /><stop offset=.545 stop-color=#402bb7 /><stop offset=.558 stop-color=#4330c5 /><stop offset=.578 stop-color=#412cba /><stop offset=.605 stop-color=#412cb9 /><stop offset=.618 stop-color=#402bb7 /><stop offset=.625 stop-color=#422ebf /><stop offset=.639 stop-color=#3f29b2 /><stop offset=.659 stop-color=#402ab3 /><stop offset=.666 stop-color=#3e27ab /><stop offset=.679 stop-color=#412cbb /><stop offset=.699 stop-color=#3f29b1 /><stop offset=.719 stop-color=#402ab3 /><stop offset=.739 stop-color=#402ab4 /><stop offset=.820 stop-color=#402bb7 /><stop offset=.840 stop-color=#412cb9 /><stop offset=.854 stop-color=#3f28ae /><stop offset=.874 stop-color=#412cba /><stop offset=.914 stop-color=#3f29b2 /><stop offset=.941 stop-color=#402ab5 /><stop offset=.948 stop-color=#3e27aa /><stop offset=.961 stop-color=#412cbb /><stop offset=.975 stop-color=#3f29b0 /><stop offset=1.000 stop-color=#402ab5 /></linearGradient><linearGradient id=b6><stop offset=.000 stop-color=#412cba /><stop offset=.013 stop-color=#3f28ae /><stop offset=.034 stop-color=#412dbd /><stop offset=.094 stop-color=#402bb8 /><stop offset=.114 stop-color=#412dbd /><stop offset=.121 stop-color=#4331c7 /><stop offset=.134 stop-color=#402ab5 /><stop offset=.161 stop-color=#4331c5 /><stop offset=.182 stop-color=#3f29b2 /><stop offset=.195 stop-color=#412cb9 /><stop offset=.222 stop-color=#402bb6 /><stop offset=.229 stop-color=#3e26a9 /><stop offset=.235 stop-color=#3e26a8 /><stop offset=.242 stop-color=#402bb6 /><stop offset=.289 stop-color=#3e27ab /><stop offset=.316 stop-color=#422ebf /><stop offset=.323 stop-color=#402bb7 /><stop offset=.336 stop-color=#412dbb /><stop offset=.356 stop-color=#3e27aa /><stop offset=.370 stop-color=#412cb9 /><stop offset=.397 stop-color=#412cb9 /><stop offset=.424 stop-color=#3e26a9 /><stop offset=.477 stop-color=#422ebf /><stop offset=.484 stop-color=#4029b3 /><stop offset=.524 stop-color=#422ebe /><stop offset=.538 stop-color=#402ab4 /><stop offset=.558 stop-color=#4330c5 /><stop offset=.578 stop-color=#402ab4 /><stop offset=.598 stop-color=#412ebe /><stop offset=.618 stop-color=#402ab5 /><stop offset=.625 stop-color=#422fc1 /><stop offset=.639 stop-color=#3f28ae /><stop offset=.652 stop-color=#402bb7 /><stop offset=.666 stop-color=#3e27ab /><stop offset=.679 stop-color=#412ebe /><stop offset=.699 stop-color=#3f28af /><stop offset=.706 stop-color=#412cb9 /><stop offset=.733 stop-color=#3e27ab /><stop offset=.760 stop-color=#412cba /><stop offset=.800 stop-color=#402bb6 /><stop offset=.813 stop-color=#412dbb /><stop offset=.840 stop-color=#402bb8 /><stop offset=.854 stop-color=#3f28ad /><stop offset=.867 stop-color=#422ec0 /><stop offset=.894 stop-color=#402bb6 /><stop offset=.941 stop-color=#402ab5 /><stop offset=.948 stop-color=#3e27aa /><stop offset=.961 stop-color=#412ebe /><stop offset=.982 stop-color=#3e27aa /><stop offset=1.000 stop-color=#402ab3 /></linearGradient><linearGradient id=b7><stop offset=.000 stop-color=#412cba /><stop offset=.013 stop-color=#3f28ae /><stop offset=.027 stop-color=#422fc1 /><stop offset=.047 stop-color=#412cb8 /><stop offset=.094 stop-color=#402bb8 /><stop offset=.114 stop-color=#422fc1 /><stop offset=.121 stop-color=#4433cb /><stop offset=.134 stop-color=#402bb7 /><stop offset=.155 stop-color=#4330c5 /><stop offset=.182 stop-color=#402ab3 /><stop offset=.222 stop-color=#402ab5 /><stop offset=.235 stop-color=#3e28ad /><stop offset=.242 stop-color=#412dbc /><stop offset=.269 stop-color=#3e27aa /><stop offset=.289 stop-color=#3f28ad /><stop offset=.316 stop-color=#422fc1 /><stop offset=.323 stop-color=#402cb8 /><stop offset=.343 stop-color=#402ab5 /><stop offset=.356 stop-color=#3e28ad /><stop offset=.376 stop-color=#412cba /><stop offset=.410 stop-color=#402bb6 /><stop offset=.424 stop-color=#3e27ac /><stop offset=.477 stop-color=#422ebf /><stop offset=.484 stop-color=#402ab5 /><stop offset=.524 stop-color=#412dbd /><stop offset=.538 stop-color=#3f29b0 /><stop offset=.558 stop-color=#4230c3 /><stop offset=.578 stop-color=#402bb7 /><stop offset=.598 stop-color=#412cba /><stop offset=.618 stop-color=#402bb6 /><stop offset=.625 stop-color=#422ebf /><stop offset=.639 stop-color=#3f29b1 /><stop offset=.659 stop-color=#402ab3 /><stop offset=.666 stop-color=#3e27ab /><stop offset=.679 stop-color=#412dbd /><stop offset=.699 stop-color=#3f29b1 /><stop offset=.713 stop-color=#402bb6 /><stop offset=.726 stop-color=#3e27aa /><stop offset=.760 stop-color=#412cba /><stop offset=.800 stop-color=#402bb6 /><stop offset=.813 stop-color=#412dbb /><stop offset=.854 stop-color=#3f29b0 /><stop offset=.867 stop-color=#422ebf /><stop offset=.894 stop-color=#402ab5 /><stop offset=.941 stop-color=#402ab4 /><stop offset=.948 stop-color=#3f28ad /><stop offset=.961 stop-color=#412dbc /><stop offset=.982 stop-color=#3f28af /><stop offset=1.000 stop-color=#402ab4 /></linearGradient><linearGradient id=b8><stop offset=.000 stop-color=#412cb9 /><stop offset=.013 stop-color=#3f28af /><stop offset=.027 stop-color=#4331c6 /><stop offset=.034 stop-color=#4230c4 /><stop offset=.040 stop-color=#402ab3 /><stop offset=.074 stop-color=#412cb9 /><stop offset=.094 stop-color=#412cb9 /><stop offset=.114 stop-color=#4332c8 /><stop offset=.121 stop-color=#4535d2 /><stop offset=.134 stop-color=#412dbc /><stop offset=.148 stop-color=#4434cf /><stop offset=.175 stop-color=#402bb8 /><stop offset=.235 stop-color=#402ab4 /><stop offset=.242 stop-color=#422fc2 /><stop offset=.262 stop-color=#3e26a8 /><stop offset=.303 stop-color=#402bb8 /><stop offset=.316 stop-color=#422fc2 /><stop offset=.356 stop-color=#3f29b1 /><stop offset=.376 stop-color=#412ebe /><stop offset=.397 stop-color=#412cba /><stop offset=.410 stop-color=#412cb9 /><stop offset=.437 stop-color=#3f29b2 /><stop offset=.464 stop-color=#3e27ac /><stop offset=.477 stop-color=#422ebf /><stop offset=.497 stop-color=#412cb9 /><stop offset=.524 stop-color=#412dbc /><stop offset=.538 stop-color=#3e27ab /><stop offset=.558 stop-color=#422fc0 /><stop offset=.592 stop-color=#412cb9 /><stop offset=.605 stop-color=#3f28ad /><stop offset=.625 stop-color=#412dbb /><stop offset=.659 stop-color=#402ab4 /><stop offset=.666 stop-color=#3e27aa /><stop offset=.679 stop-color=#412dbb /><stop offset=.699 stop-color=#402ab4 /><stop offset=.719 stop-color=#3f29b2 /><stop offset=.760 stop-color=#412cb9 /><stop offset=.780 stop-color=#402bb6 /><stop offset=.787 stop-color=#422ebe /><stop offset=.800 stop-color=#402bb6 /><stop offset=.813 stop-color=#412dbb /><stop offset=.861 stop-color=#402bb6 /><stop offset=.867 stop-color=#412dbd /><stop offset=.887 stop-color=#3f29b1 /><stop offset=.908 stop-color=#412cbb /><stop offset=.921 stop-color=#3e28ad /><stop offset=.982 stop-color=#402bb7 /><stop offset=1.000 stop-color=#402bb6 /></linearGradient><linearGradient id=b9><stop offset=.000 stop-color=#402bb8 /><stop offset=.013 stop-color=#3f29b1 /><stop offset=.027 stop-color=#4433cc /><stop offset=.034 stop-color=#4332c9 /><stop offset=.040 stop-color=#3f29b0 /><stop offset=.067 stop-color=#412ebe /><stop offset=.081 stop-color=#3f29b2 /><stop offset=.121 stop-color=#4639da /><stop offset=.128 stop-color=#4331c8 /><stop offset=.134 stop-color=#422fc2 /><stop offset=.148 stop-color=#4539d9 /><stop offset=.155 stop-color=#4435d1 /><stop offset=.161 stop-color=#412dbb /><stop offset=.208 stop-color=#412cba /><stop offset=.229 stop-color=#402ab3 /><stop offset=.242 stop-color=#4332c9 /><stop offset=.262 stop-color=#3e26a8 /><stop offset=.303 stop-color=#402bb6 /><stop offset=.316 stop-color=#4230c4 /><stop offset=.356 stop-color=#402bb7 /><stop offset=.376 stop-color=#4230c3 /><stop offset=.397 stop-color=#412dbc /><stop offset=.403 stop-color=#4230c4 /><stop offset=.444 stop-color=#3f29b2 /><stop offset=.464 stop-color=#3e26a8 /><stop offset=.477 stop-color=#412ebe /><stop offset=.497 stop-color=#402bb7 /><stop offset=.524 stop-color=#412cba /><stop offset=.538 stop-color=#3e26a8 /><stop offset=.565 stop-color=#422fc2 /><stop offset=.585 stop-color=#422fc1 /><stop offset=.605 stop-color=#3e26a8 /><stop offset=.625 stop-color=#402bb8 /><stop offset=.659 stop-color=#402ab4 /><stop offset=.666 stop-color=#3e27aa /><stop offset=.679 stop-color=#412cb9 /><stop offset=.760 stop-color=#412cb8 /><stop offset=.780 stop-color=#402ab5 /><stop offset=.787 stop-color=#422fc1 /><stop offset=.800 stop-color=#402bb7 /><stop offset=.813 stop-color=#412dbc /><stop offset=.840 stop-color=#3f29b1 /><stop offset=.867 stop-color=#412dbb /><stop offset=.881 stop-color=#3f28ad /><stop offset=.908 stop-color=#422ebf /><stop offset=.921 stop-color=#3e26a8 /><stop offset=.928 stop-color=#402ab5 /><stop offset=.988 stop-color=#412cb9 /><stop offset=1.000 stop-color=#412cb8 /></linearGradient><linearGradient id=b10><stop offset=.000 stop-color=#402cb8 /><stop offset=.013 stop-color=#3f29b2 /><stop offset=.027 stop-color=#4433cc /><stop offset=.034 stop-color=#4332c9 /><stop offset=.040 stop-color=#3f29b0 /><stop offset=.054 stop-color=#422ebf /><stop offset=.074 stop-color=#422fc0 /><stop offset=.081 stop-color=#402bb7 /><stop offset=.121 stop-color=#463ee1 /><stop offset=.134 stop-color=#4433cb /><stop offset=.148 stop-color=#463cdf /><stop offset=.155 stop-color=#4537d6 /><stop offset=.161 stop-color=#412ebe /><stop offset=.208 stop-color=#412cba /><stop offset=.229 stop-color=#402ab5 /><stop offset=.242 stop-color=#4331c8 /><stop offset=.262 stop-color=#3e26a8 /><stop offset=.296 stop-color=#412cba /><stop offset=.303 stop-color=#402ab3 /><stop offset=.316 stop-color=#4230c4 /><stop offset=.356 stop-color=#412dbb /><stop offset=.376 stop-color=#4331c8 /><stop offset=.397 stop-color=#422fc0 /><stop offset=.410 stop-color=#422fc2 /><stop offset=.444 stop-color=#402ab3 /><stop offset=.464 stop-color=#3e26a8 /><stop offset=.477 stop-color=#412ebe /><stop offset=.497 stop-color=#402bb6 /><stop offset=.511 stop-color=#412dbb /><stop offset=.524 stop-color=#402bb8 /><stop offset=.538 stop-color=#3e26a8 /><stop offset=.565 stop-color=#422fc1 /><stop offset=.585 stop-color=#422ebf /><stop offset=.598 stop-color=#3e27aa /><stop offset=.612 stop-color=#3f29b2 /><stop offset=.618 stop-color=#412dbb /><stop offset=.659 stop-color=#3f29b2 /><stop offset=.666 stop-color=#3e27ab /><stop offset=.679 stop-color=#412cb9 /><stop offset=.692 stop-color=#402bb6 /><stop offset=.760 stop-color=#402bb8 /><stop offset=.780 stop-color=#402ab3 /><stop offset=.787 stop-color=#422fc0 /><stop offset=.807 stop-color=#412dbb /><stop offset=.840 stop-color=#3f28af /><stop offset=.867 stop-color=#412cba /><stop offset=.881 stop-color=#3e27ab /><stop offset=.908 stop-color=#422fc0 /><stop offset=.921 stop-color=#3e26a8 /><stop offset=.928 stop-color=#402ab5 /><stop offset=.968 stop-color=#402bb6 /><stop offset=.982 stop-color=#422fc1 /><stop offset=1.000 stop-color=#412cb9 /></linearGradient><linearGradient id=b11><stop offset=.000 stop-color=#412cb9 /><stop offset=.013 stop-color=#402ab4 /><stop offset=.027 stop-color=#4331c7 /><stop offset=.034 stop-color=#4330c5 /><stop offset=.040 stop-color=#402ab4 /><stop offset=.074 stop-color=#4332c9 /><stop offset=.087 stop-color=#4331c6 /><stop offset=.121 stop-color=#4743e7 /><stop offset=.134 stop-color=#4537d6 /><stop offset=.148 stop-color=#463ee1 /><stop offset=.161 stop-color=#4330c5 /><stop offset=.195 stop-color=#412cba /><stop offset=.208 stop-color=#412cb8 /><stop offset=.235 stop-color=#402bb7 /><stop offset=.249 stop-color=#412ebd /><stop offset=.262 stop-color=#3e26a8 /><stop offset=.296 stop-color=#412dbc /><stop offset=.303 stop-color=#3f29b0 /><stop offset=.316 stop-color=#4230c3 /><stop offset=.329 stop-color=#412cba /><stop offset=.356 stop-color=#412ebe /><stop offset=.376 stop-color=#4433cd /><stop offset=.424 stop-color=#4230c3 /><stop offset=.437 stop-color=#3f29b2 /><stop offset=.464 stop-color=#3f28ad /><stop offset=.477 stop-color=#412ebe /><stop offset=.497 stop-color=#402ab4 /><stop offset=.511 stop-color=#412cb9 /><stop offset=.538 stop-color=#3f29b0 /><stop offset=.551 stop-color=#412cba /><stop offset=.578 stop-color=#422ebe /><stop offset=.605 stop-color=#3e26a8 /><stop offset=.618 stop-color=#422ec0 /><stop offset=.666 stop-color=#3f29b0 /><stop offset=.679 stop-color=#412dbb /><stop offset=.686 stop-color=#3f29b2 /><stop offset=.706 stop-color=#412cbb /><stop offset=.719 stop-color=#3f29b1 /><stop offset=.746 stop-color=#412cba /><stop offset=.780 stop-color=#3f29b0 /><stop offset=.787 stop-color=#412dbc /><stop offset=.827 stop-color=#4029b2 /><stop offset=.840 stop-color=#3e27ab /><stop offset=.867 stop-color=#412cb9 /><stop offset=.881 stop-color=#3e28ac /><stop offset=.908 stop-color=#412dbd /><stop offset=.921 stop-color=#3e27a9 /><stop offset=.934 stop-color=#402bb7 /><stop offset=.968 stop-color=#3f29b2 /><stop offset=.982 stop-color=#422fc1 /><stop offset=1.000 stop-color=#402bb7 /></linearGradient><linearGradient id=b12><stop offset=.000 stop-color=#412cba /><stop offset=.013 stop-color=#402bb6 /><stop offset=.034 stop-color=#422fc0 /><stop offset=.040 stop-color=#412cb8 /><stop offset=.074 stop-color=#4535d2 /><stop offset=.094 stop-color=#4538d7 /><stop offset=.121 stop-color=#4848ec /><stop offset=.134 stop-color=#463cdf /><stop offset=.148 stop-color=#473fe3 /><stop offset=.161 stop-color=#4433cc /><stop offset=.182 stop-color=#4330c5 /><stop offset=.195 stop-color=#412cb9 /><stop offset=.202 stop-color=#422ebe /><stop offset=.215 stop-color=#402ab3 /><stop offset=.255 stop-color=#402bb7 /><stop offset=.276 stop-color=#3f28ae /><stop offset=.289 stop-color=#422fc0 /><stop offset=.296 stop-color=#422ebe /><stop offset=.303 stop-color=#3f28ad /><stop offset=.316 stop-color=#422fc2 /><stop offset=.323 stop-color=#402bb7 /><stop offset=.356 stop-color=#422fc1 /><stop offset=.363 stop-color=#4435d1 /><stop offset=.424 stop-color=#4332cb /><stop offset=.437 stop-color=#402ab3 /><stop offset=.477 stop-color=#412ebe /><stop offset=.497 stop-color=#402ab3 /><stop offset=.511 stop-color=#402bb7 /><stop offset=.538 stop-color=#412cb9 /><stop offset=.551 stop-color=#412dbc /><stop offset=.578 stop-color=#412cba /><stop offset=.585 stop-color=#3f28ae /><stop offset=.605 stop-color=#3e27aa /><stop offset=.618 stop-color=#4230c4 /><stop offset=.659 stop-color=#3e26a9 /><stop offset=.672 stop-color=#412dbd /><stop offset=.679 stop-color=#412ebd /><stop offset=.686 stop-color=#3f29b2 /><stop offset=.706 stop-color=#412dbb /><stop offset=.719 stop-color=#3f28ae /><stop offset=.733 stop-color=#412ebe /><stop offset=.773 stop-color=#3f29b1 /><stop offset=.780 stop-color=#3f28ad /><stop offset=.793 stop-color=#412dbb /><stop offset=.807 stop-color=#3f29b1 /><stop offset=.820 stop-color=#412dbb /><stop offset=.840 stop-color=#3e26a8 /><stop offset=.854 stop-color=#3f29b2 /><stop offset=.867 stop-color=#402bb8 /><stop offset=.881 stop-color=#3f28ad /><stop offset=.887 stop-color=#412cb9 /><stop offset=.901 stop-color=#4029b2 /><stop offset=.908 stop-color=#412cba /><stop offset=.921 stop-color=#3f28ad /><stop offset=.948 stop-color=#412cb9 /><stop offset=.968 stop-color=#3f28ae /><stop offset=.982 stop-color=#422ec0 /><stop offset=1.000 stop-color=#402ab4 /></linearGradient><linearGradient id=b13><stop offset=.000 stop-color=#412dbb /><stop offset=.013 stop-color=#402bb7 /><stop offset=.027 stop-color=#412ebd /><stop offset=.047 stop-color=#4230c3 /><stop offset=.081 stop-color=#4538d8 /><stop offset=.121 stop-color=#484cef /><stop offset=.148 stop-color=#4740e4 /><stop offset=.161 stop-color=#4435d1 /><stop offset=.182 stop-color=#4332c8 /><stop offset=.195 stop-color=#402bb8 /><stop offset=.202 stop-color=#412dbd /><stop offset=.215 stop-color=#402ab3 /><stop offset=.222 stop-color=#412cbb /><stop offset=.242 stop-color=#3e27ac /><stop offset=.262 stop-color=#402ab5 /><stop offset=.276 stop-color=#3f28ad /><stop offset=.289 stop-color=#4230c4 /><stop offset=.296 stop-color=#422ec0 /><stop offset=.303 stop-color=#3e27aa /><stop offset=.316 stop-color=#422fc1 /><stop offset=.323 stop-color=#402ab4 /><stop offset=.356 stop-color=#4230c3 /><stop offset=.363 stop-color=#4538d7 /><stop offset=.397 stop-color=#4536d4 /><stop offset=.410 stop-color=#4433cc /><stop offset=.424 stop-color=#4435d0 /><stop offset=.437 stop-color=#402ab4 /><stop offset=.477 stop-color=#412ebe /><stop offset=.491 stop-color=#3f29b0 /><stop offset=.511 stop-color=#402ab6 /><stop offset=.531 stop-color=#412cba /><stop offset=.545 stop-color=#4230c4 /><stop offset=.565 stop-color=#402ab4 /><stop offset=.578 stop-color=#402bb6 /><stop offset=.585 stop-color=#3e26a8 /><stop offset=.598 stop-color=#402ab3 /><stop offset=.605 stop-color=#3f28ad /><stop offset=.618 stop-color=#4331c6 /><stop offset=.659 stop-color=#3e26a8 /><stop offset=.672 stop-color=#422ec0 /><stop offset=.679 stop-color=#422ebf /><stop offset=.686 stop-color=#3f29b1 /><stop offset=.706 stop-color=#412dbc /><stop offset=.719 stop-color=#3f28ad /><stop offset=.733 stop-color=#422ec0 /><stop offset=.760 stop-color=#402bb6 /><stop offset=.766 stop-color=#412dbb /><stop offset=.780 stop-color=#3e27aa /><stop offset=.800 stop-color=#412cba /><stop offset=.807 stop-color=#3f28ad /><stop offset=.820 stop-color=#412dbc /><stop offset=.840 stop-color=#3e26a8 /><stop offset=.847 stop-color=#402ab3 /><stop offset=.861 stop-color=#3f28af /><stop offset=.867 stop-color=#402bb7 /><stop offset=.881 stop-color=#3f28ae /><stop offset=.887 stop-color=#412dbc /><stop offset=.901 stop-color=#3f29b0 /><stop offset=.914 stop-color=#402ab4 /><stop offset=.928 stop-color=#3f29b1 /><stop offset=.941 stop-color=#422ebf /><stop offset=.968 stop-color=#3e27ac /><stop offset=.982 stop-color=#422ebf /><stop offset=1.000 stop-color=#402ab3 /></linearGradient><linearGradient id=b14><stop offset=.000 stop-color=#412dbb /><stop offset=.013 stop-color=#402ab5 /><stop offset=.061 stop-color=#4332cb /><stop offset=.081 stop-color=#463adb /><stop offset=.121 stop-color=#484cef /><stop offset=.148 stop-color=#4743e7 /><stop offset=.161 stop-color=#4435d0 /><stop offset=.175 stop-color=#4535d2 /><stop offset=.195 stop-color=#412cba /><stop offset=.229 stop-color=#402bb8 /><stop offset=.276 stop-color=#3f28ae /><stop offset=.289 stop-color=#422fc0 /><stop offset=.296 stop-color=#422ebf /><stop offset=.303 stop-color=#3f28af /><stop offset=.316 stop-color=#422ebf /><stop offset=.336 stop-color=#412cb9 /><stop offset=.356 stop-color=#4330c5 /><stop offset=.363 stop-color=#4538d7 /><stop offset=.397 stop-color=#4538d8 /><stop offset=.410 stop-color=#4434ce /><stop offset=.424 stop-color=#4435d0 /><stop offset=.437 stop-color=#402bb6 /><stop offset=.477 stop-color=#412ebe /><stop offset=.497 stop-color=#402ab3 /><stop offset=.511 stop-color=#402bb6 /><stop offset=.531 stop-color=#412dbb /><stop offset=.551 stop-color=#412cb9 /><stop offset=.578 stop-color=#402bb7 /><stop offset=.585 stop-color=#3f28ad /><stop offset=.618 stop-color=#412dbd /><stop offset=.659 stop-color=#3e26a8 /><stop offset=.679 stop-color=#412cba /><stop offset=.692 stop-color=#402ab4 /><stop offset=.713 stop-color=#402bb6 /><stop offset=.739 stop-color=#422ebf /><stop offset=.760 stop-color=#402ab3 /><stop offset=.766 stop-color=#412cb9 /><stop offset=.780 stop-color=#3e27ac /><stop offset=.793 stop-color=#412cb8 /><stop offset=.813 stop-color=#402bb8 /><stop offset=.820 stop-color=#412cba /><stop offset=.834 stop-color=#3e27ac /><stop offset=.847 stop-color=#402bb8 /><stop offset=.861 stop-color=#3f29b0 /><stop offset=.867 stop-color=#412cb9 /><stop offset=.881 stop-color=#3e28ac /><stop offset=.887 stop-color=#412cba /><stop offset=.901 stop-color=#3f28ae /><stop offset=.908 stop-color=#402bb7 /><stop offset=.928 stop-color=#3e27ab /><stop offset=.941 stop-color=#412ebe /><stop offset=.968 stop-color=#3f29b1 /><stop offset=.988 stop-color=#412cba /><stop offset=1.000 stop-color=#402ab6 /></linearGradient><linearGradient id=b15><stop offset=.000 stop-color=#412cba /><stop offset=.020 stop-color=#402bb8 /><stop offset=.061 stop-color=#4331c8 /><stop offset=.081 stop-color=#463adb /><stop offset=.121 stop-color=#4849ed /><stop offset=.148 stop-color=#4743e7 /><stop offset=.161 stop-color=#4433cc /><stop offset=.175 stop-color=#4435d1 /><stop offset=.195 stop-color=#412cbb /><stop offset=.229 stop-color=#412dbc /><stop offset=.269 stop-color=#3f28af /><stop offset=.296 stop-color=#422ebe /><stop offset=.303 stop-color=#402ab3 /><stop offset=.323 stop-color=#412cb9 /><stop offset=.350 stop-color=#412dbc /><stop offset=.370 stop-color=#4538d7 /><stop offset=.397 stop-color=#4538d8 /><stop offset=.403 stop-color=#4433cb /><stop offset=.424 stop-color=#4433cc /><stop offset=.437 stop-color=#402bb6 /><stop offset=.471 stop-color=#422fc1 /><stop offset=.497 stop-color=#402ab5 /><stop offset=.504 stop-color=#412dbc /><stop offset=.524 stop-color=#402bb6 /><stop offset=.538 stop-color=#422ebf /><stop offset=.565 stop-color=#402ab5 /><stop offset=.645 stop-color=#3f29b0 /><stop offset=.659 stop-color=#3e26a8 /><stop offset=.679 stop-color=#402ab5 /><stop offset=.739 stop-color=#422ebf /><stop offset=.760 stop-color=#3f29b0 /><stop offset=.773 stop-color=#3f29b0 /><stop offset=.780 stop-color=#3f28ae /><stop offset=.787 stop-color=#402cb8 /><stop offset=.820 stop-color=#412cb8 /><stop offset=.827 stop-color=#3e27ab /><stop offset=.847 stop-color=#412dbc /><stop offset=.861 stop-color=#3f29b0 /><stop offset=.867 stop-color=#412cba /><stop offset=.881 stop-color=#3e27aa /><stop offset=.887 stop-color=#402bb8 /><stop offset=.901 stop-color=#3e28ac /><stop offset=.908 stop-color=#402bb7 /><stop offset=.928 stop-color=#3e26a8 /><stop offset=.948 stop-color=#422fc2 /><stop offset=.961 stop-color=#3f29b2 /><stop offset=1.000 stop-color=#402bb8 /></linearGradient><linearGradient id=b16><stop offset=.000 stop-color=#412cba /><stop offset=.020 stop-color=#3f29b2 /><stop offset=.054 stop-color=#4331c6 /><stop offset=.061 stop-color=#4230c3 /><stop offset=.081 stop-color=#4539d8 /><stop offset=.121 stop-color=#4744e8 /><stop offset=.148 stop-color=#4742e6 /><stop offset=.161 stop-color=#4330c5 /><stop offset=.175 stop-color=#4434ce /><stop offset=.182 stop-color=#422ebf /><stop offset=.202 stop-color=#3f29b2 /><stop offset=.222 stop-color=#4230c3 /><stop offset=.242 stop-color=#412dbd /><stop offset=.255 stop-color=#3e27aa /><stop offset=.282 stop-color=#3f28ae /><stop offset=.296 stop-color=#412ebe /><stop offset=.343 stop-color=#402bb6 /><stop offset=.376 stop-color=#4536d3 /><stop offset=.397 stop-color=#4536d4 /><stop offset=.403 stop-color=#4330c5 /><stop offset=.424 stop-color=#4331c6 /><stop offset=.437 stop-color=#402ab4 /><stop offset=.471 stop-color=#422fc0 /><stop offset=.497 stop-color=#402bb6 /><stop offset=.504 stop-color=#412ebe /><stop offset=.518 stop-color=#402ab4 /><stop offset=.538 stop-color=#412ebe /><stop offset=.558 stop-color=#3f29b2 /><stop offset=.605 stop-color=#412cb9 /><stop offset=.618 stop-color=#3e27aa /><stop offset=.639 stop-color=#402ab5 /><stop offset=.666 stop-color=#3e27ab /><stop offset=.706 stop-color=#402bb7 /><stop offset=.719 stop-color=#422ec0 /><stop offset=.726 stop-color=#402bb7 /><stop offset=.739 stop-color=#422ebf /><stop offset=.760 stop-color=#3f28ad /><stop offset=.780 stop-color=#3f28af /><stop offset=.787 stop-color=#412cba /><stop offset=.800 stop-color=#3f29b0 /><stop offset=.807 stop-color=#412dbd /><stop offset=.820 stop-color=#402bb7 /><stop offset=.827 stop-color=#3e26a8 /><stop offset=.847 stop-color=#422fc1 /><stop offset=.861 stop-color=#3f29b1 /><stop offset=.867 stop-color=#412dbc /><stop offset=.881 stop-color=#3e26a9 /><stop offset=.887 stop-color=#402bb6 /><stop offset=.901 stop-color=#3e27aa /><stop offset=.908 stop-color=#402bb7 /><stop offset=.928 stop-color=#3e26a8 /><stop offset=.934 stop-color=#3e28ac /><stop offset=.948 stop-color=#4331c6 /><stop offset=.961 stop-color=#3f29b2 /><stop offset=.975 stop-color=#412cb9 /><stop offset=.995 stop-color=#402bb7 /><stop offset=1.000 stop-color=#412cba /></linearGradient><linearGradient id=b17><stop offset=.000 stop-color=#412dbc /><stop offset=.013 stop-color=#3f29b0 /><stop offset=.087 stop-color=#4535d2 /><stop offset=.121 stop-color=#473fe3 /><stop offset=.134 stop-color=#463adb /><stop offset=.148 stop-color=#4740e3 /><stop offset=.161 stop-color=#4230c3 /><stop offset=.175 stop-color=#4331c5 /><stop offset=.182 stop-color=#412cb9 /><stop offset=.195 stop-color=#412cba /><stop offset=.202 stop-color=#3f29b0 /><stop offset=.222 stop-color=#422ebe /><stop offset=.262 stop-color=#3f28ae /><stop offset=.282 stop-color=#3f28af /><stop offset=.296 stop-color=#412dbd /><stop offset=.316 stop-color=#402bb7 /><stop offset=.356 stop-color=#412dbc /><stop offset=.383 stop-color=#4433cd /><stop offset=.397 stop-color=#4432cb /><stop offset=.403 stop-color=#412ebe /><stop offset=.430 stop-color=#412dbb /><stop offset=.444 stop-color=#402ab5 /><stop offset=.464 stop-color=#422fc1 /><stop offset=.491 stop-color=#3f29b2 /><stop offset=.511 stop-color=#412cba /><stop offset=.538 stop-color=#412ebe /><stop offset=.558 stop-color=#3f28ad /><stop offset=.585 stop-color=#412cba /><stop offset=.605 stop-color=#412dbb /><stop offset=.618 stop-color=#3e27a9 /><stop offset=.639 stop-color=#402bb7 /><stop offset=.659 stop-color=#3e27ab /><stop offset=.692 stop-color=#3f29b0 /><stop offset=.706 stop-color=#402bb7 /><stop offset=.719 stop-color=#422ebe /><stop offset=.726 stop-color=#402ab5 /><stop offset=.746 stop-color=#412cb9 /><stop offset=.760 stop-color=#3e27ab /><stop offset=.787 stop-color=#412cba /><stop offset=.800 stop-color=#3f29af /><stop offset=.807 stop-color=#422ebf /><stop offset=.827 stop-color=#3e26a8 /><stop offset=.847 stop-color=#4230c3 /><stop offset=.861 stop-color=#3f29b2 /><stop offset=.867 stop-color=#412cb9 /><stop offset=.881 stop-color=#3e27ab /><stop offset=.887 stop-color=#402ab4 /><stop offset=.901 stop-color=#3e28ac /><stop offset=.908 stop-color=#412cb9 /><stop offset=.928 stop-color=#3e26a8 /><stop offset=.948 stop-color=#4230c3 /><stop offset=.961 stop-color=#402ab5 /><stop offset=.975 stop-color=#412cb9 /><stop offset=.995 stop-color=#412cb9 /><stop offset=1.000 stop-color=#422ebf /></linearGradient><linearGradient id=b18><stop offset=.000 stop-color=#422ebf /><stop offset=.013 stop-color=#3f29b0 /><stop offset=.040 stop-color=#402bb6 /><stop offset=.061 stop-color=#4331c6 /><stop offset=.074 stop-color=#4331c6 /><stop offset=.081 stop-color=#4435d0 /><stop offset=.101 stop-color=#4433cd /><stop offset=.114 stop-color=#463de0 /><stop offset=.134 stop-color=#4537d5 /><stop offset=.148 stop-color=#463de0 /><stop offset=.161 stop-color=#422fc3 /><stop offset=.182 stop-color=#402ab3 /><stop offset=.195 stop-color=#412dbb /><stop offset=.202 stop-color=#3f29af /><stop offset=.229 stop-color=#412cb9 /><stop offset=.269 stop-color=#3f29b1 /><stop offset=.282 stop-color=#3f29b1 /><stop offset=.296 stop-color=#412dbb /><stop offset=.303 stop-color=#3f29b0 /><stop offset=.356 stop-color=#402cb8 /><stop offset=.390 stop-color=#4330c5 /><stop offset=.410 stop-color=#412cb9 /><stop offset=.437 stop-color=#412dbb /><stop offset=.450 stop-color=#412cb9 /><stop offset=.464 stop-color=#422fc1 /><stop offset=.484 stop-color=#3f28ad /><stop offset=.518 stop-color=#412ebe /><stop offset=.538 stop-color=#412ebd /><stop offset=.558 stop-color=#3e26a8 /><stop offset=.578 stop-color=#412dbc /><stop offset=.598 stop-color=#402ab3 /><stop offset=.605 stop-color=#412dbc /><stop offset=.618 stop-color=#3e27ab /><stop offset=.632 stop-color=#412cbb /><stop offset=.659 stop-color=#3e28ac /><stop offset=.672 stop-color=#3f29b0 /><stop offset=.686 stop-color=#402bb8 /><stop offset=.699 stop-color=#3f28ae /><stop offset=.713 stop-color=#412dbc /><stop offset=.739 stop-color=#402bb7 /><stop offset=.760 stop-color=#3e27aa /><stop offset=.787 stop-color=#412cba /><stop offset=.800 stop-color=#3f29af /><stop offset=.807 stop-color=#422ec0 /><stop offset=.827 stop-color=#3e27a9 /><stop offset=.847 stop-color=#4230c3 /><stop offset=.861 stop-color=#3f29b2 /><stop offset=.901 stop-color=#3f29b0 /><stop offset=.908 stop-color=#412dbc /><stop offset=.928 stop-color=#3e27ab /><stop offset=.948 stop-color=#412ebe /><stop offset=.988 stop-color=#402ab5 /><stop offset=1.000 stop-color=#4230c4 /></linearGradient><linearGradient id=b19><stop offset=.000 stop-color=#422fc3 /><stop offset=.013 stop-color=#3f29b0 /><stop offset=.027 stop-color=#412cb9 /><stop offset=.040 stop-color=#3f28af /><stop offset=.054 stop-color=#4331c7 /><stop offset=.061 stop-color=#4332c9 /><stop offset=.067 stop-color=#412ebd /><stop offset=.074 stop-color=#422ebe /><stop offset=.081 stop-color=#4433cd /><stop offset=.101 stop-color=#4230c3 /><stop offset=.114 stop-color=#463bdd /><stop offset=.128 stop-color=#4433cd /><stop offset=.134 stop-color=#4434cf /><stop offset=.141 stop-color=#463cde /><stop offset=.148 stop-color=#463bdd /><stop offset=.175 stop-color=#3f29b1 /><stop offset=.182 stop-color=#3f28ad /><stop offset=.195 stop-color=#412dbc /><stop offset=.202 stop-color=#3f28af /><stop offset=.215 stop-color=#402bb7 /><stop offset=.242 stop-color=#3f28ae /><stop offset=.255 stop-color=#412cba /><stop offset=.262 stop-color=#3f28ad /><stop offset=.296 stop-color=#412cba /><stop offset=.303 stop-color=#3e27ac /><stop offset=.343 stop-color=#412cb9 /><stop offset=.397 stop-color=#412cba /><stop offset=.424 stop-color=#412dbb /><stop offset=.437 stop-color=#422fc1 /><stop offset=.444 stop-color=#402ab4 /><stop offset=.464 stop-color=#422fc2 /><stop offset=.477 stop-color=#3e26a8 /><stop offset=.504 stop-color=#402bb6 /><stop offset=.518 stop-color=#4230c4 /><stop offset=.524 stop-color=#412cba /><stop offset=.538 stop-color=#412dbd /><stop offset=.551 stop-color=#3e26a9 /><stop offset=.565 stop-color=#3e26a8 /><stop offset=.578 stop-color=#412dbc /><stop offset=.598 stop-color=#3f29b0 /><stop offset=.605 stop-color=#412dbd /><stop offset=.618 stop-color=#3e27ac /><stop offset=.632 stop-color=#422ebf /><stop offset=.652 stop-color=#3e28ac /><stop offset=.666 stop-color=#412cb8 /><stop offset=.679 stop-color=#3f28af /><stop offset=.686 stop-color=#412cba /><stop offset=.699 stop-color=#3f28ae /><stop offset=.713 stop-color=#412cba /><stop offset=.739 stop-color=#3f29b2 /><stop offset=.746 stop-color=#402bb7 /><stop offset=.760 stop-color=#3e26a8 /><stop offset=.787 stop-color=#412cba /><stop offset=.800 stop-color=#3f29af /><stop offset=.807 stop-color=#422fc1 /><stop offset=.827 stop-color=#3e27ab /><stop offset=.840 stop-color=#422fc2 /><stop offset=.854 stop-color=#412dbb /><stop offset=.874 stop-color=#3f29b2 /><stop offset=.901 stop-color=#402ab4 /><stop offset=.908 stop-color=#422ebf /><stop offset=.934 stop-color=#402bb6 /><stop offset=.975 stop-color=#402cb8 /><stop offset=.988 stop-color=#402ab5 /><stop offset=1.000 stop-color=#4332c8 /></linearGradient><linearGradient id=b20><stop offset=.000 stop-color=#4230c3 /><stop offset=.007 stop-color=#402ab4 /><stop offset=.013 stop-color=#3f29b2 /><stop offset=.020 stop-color=#412dbd /><stop offset=.040 stop-color=#3e27ab /><stop offset=.054 stop-color=#4331c6 /><stop offset=.061 stop-color=#4331c7 /><stop offset=.067 stop-color=#412cb9 /><stop offset=.074 stop-color=#412cb9 /><stop offset=.081 stop-color=#4332c8 /><stop offset=.101 stop-color=#412dbb /><stop offset=.114 stop-color=#4539d8 /><stop offset=.128 stop-color=#4331c8 /><stop offset=.134 stop-color=#4433cb /><stop offset=.141 stop-color=#4639da /><stop offset=.148 stop-color=#4539d9 /><stop offset=.175 stop-color=#3f28ad /><stop offset=.182 stop-color=#3f28ad /><stop offset=.195 stop-color=#412dbc /><stop offset=.202 stop-color=#3f29b0 /><stop offset=.242 stop-color=#3f28ad /><stop offset=.255 stop-color=#412dbd /><stop offset=.262 stop-color=#3f29b0 /><stop offset=.296 stop-color=#412cba /><stop offset=.303 stop-color=#3e27ab /><stop offset=.343 stop-color=#412dbb /><stop offset=.356 stop-color=#402ab3 /><stop offset=.390 stop-color=#412cb8 /><stop offset=.410 stop-color=#402ab5 /><stop offset=.437 stop-color=#422fc2 /><stop offset=.444 stop-color=#402ab3 /><stop offset=.464 stop-color=#422fc1 /><stop offset=.477 stop-color=#3e26a8 /><stop offset=.504 stop-color=#402ab3 /><stop offset=.518 stop-color=#4331c5 /><stop offset=.524 stop-color=#412cba /><stop offset=.545 stop-color=#402ab5 /><stop offset=.558 stop-color=#3e26a8 /><stop offset=.571 stop-color=#3f29b1 /><stop offset=.585 stop-color=#412cb9 /><stop offset=.598 stop-color=#3f28af /><stop offset=.605 stop-color=#412dbc /><stop offset=.618 stop-color=#3f28af /><stop offset=.632 stop-color=#422ec0 /><stop offset=.652 stop-color=#3e28ac /><stop offset=.666 stop-color=#412cba /><stop offset=.679 stop-color=#3f29b1 /><stop offset=.686 stop-color=#412cba /><stop offset=.699 stop-color=#3f29b0 /><stop offset=.713 stop-color=#402bb8 /><stop offset=.739 stop-color=#3f29b0 /><stop offset=.746 stop-color=#402bb7 /><stop offset=.760 stop-color=#3e26a8 /><stop offset=.787 stop-color=#412cb8 /><stop offset=.800 stop-color=#3f28af /><stop offset=.807 stop-color=#422ebe /><stop offset=.827 stop-color=#3e28ac /><stop offset=.847 stop-color=#4230c4 /><stop offset=.867 stop-color=#3f28ae /><stop offset=.887 stop-color=#3f29b2 /><stop offset=.914 stop-color=#412dbc /><stop offset=.955 stop-color=#402cb8 /><stop offset=.975 stop-color=#402bb7 /><stop offset=.988 stop-color=#402ab5 /><stop offset=1.000 stop-color=#4331c7 /></linearGradient><linearGradient id=b21><stop offset=.000 stop-color=#422ec0 /><stop offset=.013 stop-color=#402ab5 /><stop offset=.020 stop-color=#422fc1 /><stop offset=.040 stop-color=#3e27aa /><stop offset=.054 stop-color=#422fc0 /><stop offset=.074 stop-color=#402bb6 /><stop offset=.081 stop-color=#422fc2 /><stop offset=.101 stop-color=#402bb6 /><stop offset=.114 stop-color=#4435d1 /><stop offset=.134 stop-color=#4331c7 /><stop offset=.148 stop-color=#4535d2 /><stop offset=.175 stop-color=#3f29b0 /><stop offset=.195 stop-color=#412dbc /><stop offset=.208 stop-color=#3f29b1 /><stop offset=.255 stop-color=#412dbc /><stop offset=.282 stop-color=#3f29b1 /><stop offset=.296 stop-color=#412dbc /><stop offset=.303 stop-color=#3f29b0 /><stop offset=.343 stop-color=#412dbc /><stop offset=.356 stop-color=#3f29af /><stop offset=.383 stop-color=#402bb8 /><stop offset=.403 stop-color=#3f28ad /><stop offset=.437 stop-color=#412dbc /><stop offset=.450 stop-color=#402ab3 /><stop offset=.464 stop-color=#422ebf /><stop offset=.484 stop-color=#3e27aa /><stop offset=.504 stop-color=#4029b3 /><stop offset=.518 stop-color=#422fc2 /><stop offset=.531 stop-color=#412cbb /><stop offset=.565 stop-color=#3e27aa /><stop offset=.585 stop-color=#412dbc /><stop offset=.598 stop-color=#3f28af /><stop offset=.612 stop-color=#402bb6 /><stop offset=.639 stop-color=#412cba /><stop offset=.659 stop-color=#3f28ad /><stop offset=.666 stop-color=#412cb9 /><stop offset=.746 stop-color=#412cb8 /><stop offset=.760 stop-color=#3e27aa /><stop offset=.793 stop-color=#3f28af /><stop offset=.820 stop-color=#402ab4 /><stop offset=.834 stop-color=#3f29b1 /><stop offset=.847 stop-color=#4330c5 /><stop offset=.867 stop-color=#3e28ac /><stop offset=.881 stop-color=#412cba /><stop offset=.901 stop-color=#3f29b1 /><stop offset=.941 stop-color=#402ab5 /><stop offset=.968 stop-color=#412ebe /><stop offset=.982 stop-color=#3f28af /><stop offset=1.000 stop-color=#412dbd /></linearGradient><linearGradient id=b22><stop offset=.000 stop-color=#412dbc /><stop offset=.013 stop-color=#402bb8 /><stop offset=.020 stop-color=#4230c4 /><stop offset=.040 stop-color=#3e27ab /><stop offset=.054 stop-color=#412dbb /><stop offset=.074 stop-color=#402ab5 /><stop offset=.081 stop-color=#412dbd /><stop offset=.101 stop-color=#402ab3 /><stop offset=.114 stop-color=#4433cb /><stop offset=.134 stop-color=#4330c5 /><stop offset=.148 stop-color=#4433cb /><stop offset=.155 stop-color=#422fc3 /><stop offset=.161 stop-color=#4331c6 /><stop offset=.175 stop-color=#402ab3 /><stop offset=.195 stop-color=#412dbd /><stop offset=.215 stop-color=#3f28af /><stop offset=.269 stop-color=#412dbd /><stop offset=.282 stop-color=#3f28af /><stop offset=.296 stop-color=#412ebe /><stop offset=.316 stop-color=#3f29b2 /><stop offset=.336 stop-color=#422fc1 /><stop offset=.356 stop-color=#3e28ac /><stop offset=.370 stop-color=#402ab5 /><stop offset=.403 stop-color=#3e27ab /><stop offset=.417 stop-color=#412cb8 /><stop offset=.430 stop-color=#402ab5 /><stop offset=.457 stop-color=#402ab5 /><stop offset=.464 stop-color=#412dbd /><stop offset=.491 stop-color=#3e28ac /><stop offset=.518 stop-color=#422ebf /><stop offset=.571 stop-color=#3f28ae /><stop offset=.585 stop-color=#422ebe /><stop offset=.598 stop-color=#3f28af /><stop offset=.632 stop-color=#412cba /><stop offset=.659 stop-color=#3e27ac /><stop offset=.672 stop-color=#412cba /><stop offset=.692 stop-color=#402bb7 /><stop offset=.719 stop-color=#3f29b2 /><stop offset=.746 stop-color=#412cba /><stop offset=.766 stop-color=#3f28ae /><stop offset=.807 stop-color=#3f29b0 /><stop offset=.827 stop-color=#3f28af /><stop offset=.840 stop-color=#3f29b2 /><stop offset=.847 stop-color=#4331c6 /><stop offset=.867 stop-color=#3e27ab /><stop offset=.881 stop-color=#412dbd /><stop offset=.908 stop-color=#3f28af /><stop offset=.934 stop-color=#412cb9 /><stop offset=.955 stop-color=#402ab4 /><stop offset=.968 stop-color=#422ebe /><stop offset=.982 stop-color=#3e28ac /><stop offset=1.000 stop-color=#3f29b2 /></linearGradient><linearGradient id=b23><stop offset=.000 stop-color=#412cb9 /><stop offset=.013 stop-color=#412cba /><stop offset=.020 stop-color=#4331c6 /><stop offset=.040 stop-color=#3e28ad /><stop offset=.054 stop-color=#402bb7 /><stop offset=.067 stop-color=#3f29b0 /><stop offset=.087 stop-color=#402bb6 /><stop offset=.101 stop-color=#3f29b1 /><stop offset=.114 stop-color=#4331c6 /><stop offset=.155 stop-color=#422ebf /><stop offset=.161 stop-color=#4331c7 /><stop offset=.175 stop-color=#402bb7 /><stop offset=.188 stop-color=#422fc0 /><stop offset=.215 stop-color=#3f28af /><stop offset=.235 stop-color=#412dbc /><stop offset=.276 stop-color=#412dbb /><stop offset=.282 stop-color=#3f28ae /><stop offset=.296 stop-color=#422ebe /><stop offset=.323 stop-color=#402ab3 /><stop offset=.336 stop-color=#4230c3 /><stop offset=.356 stop-color=#3e27ab /><stop offset=.370 stop-color=#402bb6 /><stop offset=.403 stop-color=#3e27aa /><stop offset=.417 stop-color=#412cb9 /><stop offset=.424 stop-color=#3f28af /><stop offset=.457 stop-color=#402ab3 /><stop offset=.471 stop-color=#412cba /><stop offset=.497 stop-color=#3f28af /><stop offset=.518 stop-color=#412dbb /><stop offset=.565 stop-color=#402bb7 /><stop offset=.578 stop-color=#3f28ad /><stop offset=.585 stop-color=#422ec0 /><stop offset=.598 stop-color=#3f29af /><stop offset=.618 stop-color=#422ebf /><stop offset=.659 stop-color=#3e27ac /><stop offset=.679 stop-color=#412dbb /><stop offset=.686 stop-color=#3f29b0 /><stop offset=.699 stop-color=#412dbc /><stop offset=.706 stop-color=#3f28ae /><stop offset=.746 stop-color=#412cbb /><stop offset=.780 stop-color=#3e26a8 /><stop offset=.813 stop-color=#3f29b1 /><stop offset=.827 stop-color=#3f29b1 /><stop offset=.840 stop-color=#3e27ac /><stop offset=.847 stop-color=#4230c4 /><stop offset=.861 stop-color=#3f28ae /><stop offset=.867 stop-color=#3e27ab /><stop offset=.881 stop-color=#422ec0 /><stop offset=.894 stop-color=#402ab5 /><stop offset=.908 stop-color=#3e27aa /><stop offset=.928 stop-color=#412dbc /><stop offset=.955 stop-color=#3f29b2 /><stop offset=.968 stop-color=#412ebe /><stop offset=.982 stop-color=#3e27ab /><stop offset=.995 stop-color=#3f28ae /><stop offset=1.000 stop-color=#3e27aa /></linearGradient><linearGradient id=b24><stop offset=.000 stop-color=#412dbd /><stop offset=.020 stop-color=#422fc3 /><stop offset=.040 stop-color=#3f29b1 /><stop offset=.101 stop-color=#3f29b2 /><stop offset=.114 stop-color=#4331c8 /><stop offset=.141 stop-color=#4230c4 /><stop offset=.215 stop-color=#402ab5 /><stop offset=.269 stop-color=#412dbc /><stop offset=.282 stop-color=#3f29b1 /><stop offset=.296 stop-color=#412dbb /><stop offset=.323 stop-color=#402ab4 /><stop offset=.336 stop-color=#422fc0 /><stop offset=.356 stop-color=#3f29b0 /><stop offset=.376 stop-color=#412cba /><stop offset=.457 stop-color=#402ab5 /><stop offset=.477 stop-color=#402bb6 /><stop offset=.504 stop-color=#4029b2 /><stop offset=.578 stop-color=#3f29b1 /><stop offset=.592 stop-color=#402bb6 /><stop offset=.612 stop-color=#412dbb /><stop offset=.659 stop-color=#3f29b0 /><stop offset=.679 stop-color=#412cb8 /><stop offset=.699 stop-color=#412cba /><stop offset=.713 stop-color=#3f29b1 /><stop offset=.726 stop-color=#412dbc /><stop offset=.787 stop-color=#3f29b0 /><stop offset=.813 stop-color=#3f29b1 /><stop offset=.827 stop-color=#3f29b0 /><stop offset=.840 stop-color=#3f28af /><stop offset=.847 stop-color=#412dbd /><stop offset=.867 stop-color=#3f28af /><stop offset=.881 stop-color=#422ebf /><stop offset=.914 stop-color=#3f29af /><stop offset=.955 stop-color=#402ab5 /><stop offset=.968 stop-color=#422ec0 /><stop offset=.982 stop-color=#3f28ad /><stop offset=.995 stop-color=#402bb6 /><stop offset=1.000 stop-color=#3f29b2 /></linearGradient><linearGradient id=b25><stop offset=.000 stop-color=#422fc0 /><stop offset=.054 stop-color=#3f29b0 /><stop offset=.101 stop-color=#402ab3 /><stop offset=.114 stop-color=#4332ca /><stop offset=.141 stop-color=#422fc3 /><stop offset=.148 stop-color=#4331c7 /><stop offset=.195 stop-color=#3f28ae /><stop offset=.222 stop-color=#412cb9 /><stop offset=.303 stop-color=#402ab4 /><stop offset=.323 stop-color=#402ab5 /><stop offset=.343 stop-color=#412dbb /><stop offset=.363 stop-color=#402bb8 /><stop offset=.376 stop-color=#412ebe /><stop offset=.424 stop-color=#402ab5 /><stop offset=.471 stop-color=#402bb8 /><stop offset=.484 stop-color=#3f28af /><stop offset=.504 stop-color=#402ab4 /><stop offset=.605 stop-color=#402bb6 /><stop offset=.625 stop-color=#412dbb /><stop offset=.659 stop-color=#402ab3 /><stop offset=.679 stop-color=#402bb6 /><stop offset=.719 stop-color=#402ab6 /><stop offset=.726 stop-color=#422ebf /><stop offset=.739 stop-color=#402ab4 /><stop offset=.800 stop-color=#402ab5 /><stop offset=.807 stop-color=#3e28ac /><stop offset=.820 stop-color=#402ab5 /><stop offset=.840 stop-color=#3f29b2 /><stop offset=.867 stop-color=#3f29b1 /><stop offset=.881 stop-color=#422ebe /><stop offset=.934 stop-color=#3f29b1 /><stop offset=.968 stop-color=#422fc1 /><stop offset=.982 stop-color=#3f28af /><stop offset=.988 stop-color=#412dbc /><stop offset=1.000 stop-color=#412cb9 /></linearGradient><linearGradient id=b26><stop offset=.000 stop-color=#4230c3 /><stop offset=.040 stop-color=#412cb9 /><stop offset=.054 stop-color=#3f28ad /><stop offset=.061 stop-color=#402bb7 /><stop offset=.081 stop-color=#3f28ad /><stop offset=.108 stop-color=#412dbd /><stop offset=.114 stop-color=#4332cb /><stop offset=.134 stop-color=#412dbd /><stop offset=.148 stop-color=#4331c8 /><stop offset=.161 stop-color=#402bb7 /><stop offset=.182 stop-color=#3f29b1 /><stop offset=.195 stop-color=#3e26a9 /><stop offset=.215 stop-color=#422ebf /><stop offset=.235 stop-color=#402bb7 /><stop offset=.316 stop-color=#3f29b0 /><stop offset=.343 stop-color=#412cba /><stop offset=.363 stop-color=#412cb9 /><stop offset=.376 stop-color=#422fc1 /><stop offset=.390 stop-color=#412cba /><stop offset=.403 stop-color=#422fc0 /><stop offset=.424 stop-color=#402bb7 /><stop offset=.450 stop-color=#412cbb /><stop offset=.484 stop-color=#3f28ae /><stop offset=.497 stop-color=#412cba /><stop offset=.518 stop-color=#3f28ad /><stop offset=.531 stop-color=#3f28af /><stop offset=.578 stop-color=#402bb8 /><stop offset=.585 stop-color=#3f28af /><stop offset=.625 stop-color=#412dbc /><stop offset=.659 stop-color=#402bb6 /><stop offset=.672 stop-color=#402bb7 /><stop offset=.719 stop-color=#402bb7 /><stop offset=.726 stop-color=#422fc1 /><stop offset=.739 stop-color=#402ab3 /><stop offset=.800 stop-color=#402bb8 /><stop offset=.807 stop-color=#3f28ad /><stop offset=.820 stop-color=#402ab4 /><stop offset=.867 stop-color=#402ab4 /><stop offset=.887 stop-color=#412cba /><stop offset=.914 stop-color=#402bb6 /><stop offset=.928 stop-color=#3e27aa /><stop offset=.968 stop-color=#422fc2 /><stop offset=.982 stop-color=#3f29b1 /><stop offset=.988 stop-color=#422fc0 /><stop offset=1.000 stop-color=#422ebe /></linearGradient><linearGradient id=b27><stop offset=.000 stop-color=#422fc1 /><stop offset=.054 stop-color=#3f28af /><stop offset=.067 stop-color=#3f29b2 /><stop offset=.101 stop-color=#402ab5 /><stop offset=.121 stop-color=#4433cb /><stop offset=.134 stop-color=#412dbb /><stop offset=.148 stop-color=#4331c6 /><stop offset=.161 stop-color=#402bb6 /><stop offset=.182 stop-color=#3f29b2 /><stop offset=.195 stop-color=#3e27aa /><stop offset=.215 stop-color=#412dbc /><stop offset=.323 stop-color=#402bb7 /><stop offset=.363 stop-color=#402bb6 /><stop offset=.376 stop-color=#422ebf /><stop offset=.390 stop-color=#412cb9 /><stop offset=.410 stop-color=#412dbb /><stop offset=.450 stop-color=#412cb9 /><stop offset=.484 stop-color=#3f29af /><stop offset=.504 stop-color=#402ab5 /><stop offset=.551 stop-color=#402ab4 /><stop offset=.578 stop-color=#402bb8 /><stop offset=.592 stop-color=#402ab5 /><stop offset=.632 stop-color=#412cb8 /><stop offset=.719 stop-color=#402bb7 /><stop offset=.726 stop-color=#422ebf /><stop offset=.739 stop-color=#402ab3 /><stop offset=.800 stop-color=#402bb8 /><stop offset=.813 stop-color=#3f29b0 /><stop offset=.914 stop-color=#402bb6 /><stop offset=.934 stop-color=#3f28af /><stop offset=.968 stop-color=#422ebf /><stop offset=.982 stop-color=#402ab3 /><stop offset=.988 stop-color=#422fc1 /><stop offset=1.000 stop-color=#412dbd /></linearGradient><linearGradient id=b28><stop offset=.000 stop-color=#412ebd /><stop offset=.040 stop-color=#402bb6 /><stop offset=.101 stop-color=#402bb6 /><stop offset=.121 stop-color=#4332ca /><stop offset=.134 stop-color=#412cbb /><stop offset=.141 stop-color=#4330c5 /><stop offset=.195 stop-color=#3f28ad /><stop offset=.229 stop-color=#402bb7 /><stop offset=.363 stop-color=#402ab3 /><stop offset=.376 stop-color=#412dbc /><stop offset=.397 stop-color=#412cb9 /><stop offset=.450 stop-color=#402bb7 /><stop offset=.491 stop-color=#402ab5 /><stop offset=.639 stop-color=#402bb6 /><stop offset=.692 stop-color=#402bb7 /><stop offset=.733 stop-color=#412cb8 /><stop offset=.800 stop-color=#402bb7 /><stop offset=.827 stop-color=#3f29af /><stop offset=.854 stop-color=#402ab4 /><stop offset=.955 stop-color=#402bb6 /><stop offset=.982 stop-color=#402ab5 /><stop offset=.988 stop-color=#422ec0 /><stop offset=1.000 stop-color=#412cb9 /></linearGradient><linearGradient id=b29><stop offset=.000 stop-color=#412dbb /><stop offset=.020 stop-color=#422ec0 /><stop offset=.061 stop-color=#3f29b0 /><stop offset=.108 stop-color=#412cb9 /><stop offset=.121 stop-color=#4332c9 /><stop offset=.128 stop-color=#412dbb /><stop offset=.134 stop-color=#412cba /><stop offset=.141 stop-color=#4331c6 /><stop offset=.161 stop-color=#402bb8 /><stop offset=.208 stop-color=#3f29b1 /><stop offset=.235 stop-color=#402bb6 /><stop offset=.262 stop-color=#3f29b2 /><stop offset=.356 stop-color=#402ab4 /><stop offset=.444 stop-color=#412cba /><stop offset=.464 stop-color=#402ab4 /><stop offset=.538 stop-color=#402bb7 /><stop offset=.612 stop-color=#402bb8 /><stop offset=.686 stop-color=#3f28af /><stop offset=.699 stop-color=#412dbc /><stop offset=.780 stop-color=#402ab5 /><stop offset=.827 stop-color=#3f29b0 /><stop offset=.854 stop-color=#402bb6 /><stop offset=.881 stop-color=#3f28ad /><stop offset=.934 stop-color=#3f29b2 /><stop offset=.982 stop-color=#402bb6 /><stop offset=.995 stop-color=#412dbb /><stop offset=1.000 stop-color=#402bb6 /></linearGradient><linearGradient id=b30><stop offset=.000 stop-color=#412cb9 /><stop offset=.027 stop-color=#412cb9 /><stop offset=.067 stop-color=#402ab5 /><stop offset=.108 stop-color=#412cb9 /><stop offset=.121 stop-color=#4331c7 /><stop offset=.128 stop-color=#412cba /><stop offset=.134 stop-color=#412cb9 /><stop offset=.141 stop-color=#4330c5 /><stop offset=.168 stop-color=#402ab4 /><stop offset=.215 stop-color=#402ab3 /><stop offset=.242 stop-color=#3f29b0 /><stop offset=.329 stop-color=#402ab5 /><stop offset=.370 stop-color=#402ab5 /><stop offset=.450 stop-color=#402ab4 /><stop offset=.598 stop-color=#402bb6 /><stop offset=.686 stop-color=#3f28af /><stop offset=.699 stop-color=#412dbc /><stop offset=.780 stop-color=#402ab5 /><stop offset=.827 stop-color=#3f29b2 /><stop offset=.861 stop-color=#402ab5 /><stop offset=.881 stop-color=#3e28ac /><stop offset=.934 stop-color=#402ab3 /><stop offset=.995 stop-color=#412cb9 /><stop offset=1.000 stop-color=#402ab5 /></linearGradient><linearGradient id=b31><stop offset=.000 stop-color=#402bb8 /><stop offset=.094 stop-color=#402ab4 /><stop offset=.121 stop-color=#4230c3 /><stop offset=.134 stop-color=#402bb7 /><stop offset=.148 stop-color=#422fc0 /><stop offset=.168 stop-color=#402ab3 /><stop offset=.235 stop-color=#402ab4 /><stop offset=.350 stop-color=#402ab4 /><stop offset=.692 stop-color=#402bb8 /><stop offset=.867 stop-color=#3f29b2 /><stop offset=1.000 stop-color=#402ab5 /></linearGradient><linearGradient id=b32><stop offset=.000 stop-color=#402bb7 /><stop offset=.094 stop-color=#402ab3 /><stop offset=.121 stop-color=#422fc1 /><stop offset=.134 stop-color=#402bb6 /><stop offset=.148 stop-color=#422ec0 /><stop offset=.161 stop-color=#3f29b0 /><stop offset=.229 stop-color=#402bb6 /><stop offset=.356 stop-color=#402ab3 /><stop offset=.746 stop-color=#402ab5 /><stop offset=1.000 stop-color=#402bb6 /></linearGradient><linearGradient id=b33><stop offset=.000 stop-color=#402bb6 /><stop offset=.094 stop-color=#3f29b2 /><stop offset=.114 stop-color=#422ec0 /><stop offset=.134 stop-color=#402bb6 /><stop offset=.148 stop-color=#422ebf /><stop offset=.161 stop-color=#3f29af /><stop offset=.222 stop-color=#412dbb /><stop offset=.249 stop-color=#402ab5 /><stop offset=.551 stop-color=#402bb7 /><stop offset=.713 stop-color=#412cba /><stop offset=.934 stop-color=#402bb7 /><stop offset=1.000 stop-color=#402bb6 /></linearGradient><linearGradient id=b34><stop offset=.000 stop-color=#402bb6 /><stop offset=.094 stop-color=#402ab4 /><stop offset=.121 stop-color=#412dbd /><stop offset=.141 stop-color=#412dbc /><stop offset=.182 stop-color=#402bb6 /><stop offset=1.000 stop-color=#402bb6 /></linearGradient><linearGradient id=b35><stop offset=.000 stop-color=#402ab5 /><stop offset=.108 stop-color=#412cb9 /><stop offset=.155 stop-color=#412cb8 /><stop offset=1.000 stop-color=#402ab5 /></linearGradient><linearGradient id=b36><stop offset=.000 stop-color=#402ab5 /><stop offset=.168 stop-color=#402bb6 /><stop offset=1.000 stop-color=#402ab5 /></linearGradient><linearGradient id=b37><stop offset=.000 stop-color=#402bb6 /><stop offset=1.000 stop-color=#402bb6 /></linearGradient><linearGradient id=b38><stop offset=.000 stop-color=#402bb6 /><stop offset=.343 stop-color=#3f29b2 /><stop offset=1.000 stop-color=#402bb6 /></linearGradient><linearGradient id=b39><stop offset=.000 stop-color=#412cb8 /><stop offset=.329 stop-color=#402bb6 /><stop offset=.350 stop-color=#3e26a8 /><stop offset=.370 stop-color=#3f29b0 /><stop offset=.437 stop-color=#402bb7 /><stop offset=1.000 stop-color=#402bb6 /></linearGradient><linearGradient id=b40><stop offset=.000 stop-color=#4331c7 /><stop offset=.329 stop-color=#412dbd /><stop offset=.343 stop-color=#3e26a8 /><stop offset=.363 stop-color=#3e26a8 /><stop offset=.383 stop-color=#422fc1 /><stop offset=.598 stop-color=#402bb6 /><stop offset=1.000 stop-color=#402bb6 /></linearGradient><linearGradient id=b41><stop offset=.000 stop-color=#4745ea /><stop offset=.343 stop-color=#463de0 /><stop offset=.363 stop-color=#463ee1 /><stop offset=.403 stop-color=#473fe2 /><stop offset=.444 stop-color=#4537d6 /><stop offset=.477 stop-color=#402bb8 /><stop offset=1.000 stop-color=#402bb6 /></linearGradient><linearGradient id=b42><stop offset=.000 stop-color=#4367fd /><stop offset=.161 stop-color=#475cfa /><stop offset=.269 stop-color=#475af9 /><stop offset=.289 stop-color=#4759f8 /><stop offset=.329 stop-color=#4561fc /><stop offset=.356 stop-color=#327bfc /><stop offset=.437 stop-color=#4661fc /><stop offset=.457 stop-color=#4743e7 /><stop offset=.471 stop-color=#422fc2 /><stop offset=.538 stop-color=#412cb9 /><stop offset=1.000 stop-color=#402bb6 /></linearGradient><linearGradient id=b43><stop offset=.000 stop-color=#2c8ef2 /><stop offset=.061 stop-color=#2e86f7 /><stop offset=.121 stop-color=#3a73fe /><stop offset=.262 stop-color=#337bfd /><stop offset=.282 stop-color=#4562fc /><stop offset=.303 stop-color=#2e83f9 /><stop offset=.329 stop-color=#2d89f5 /><stop offset=.350 stop-color=#1aacdd /><stop offset=.437 stop-color=#2b92ee /><stop offset=.450 stop-color=#3479fd /><stop offset=.464 stop-color=#4852f4 /><stop offset=.471 stop-color=#4741e5 /><stop offset=.511 stop-color=#4332c9 /><stop offset=.618 stop-color=#4331c6 /><stop offset=.652 stop-color=#402bb6 /><stop offset=1.000 stop-color=#402bb6 /></linearGradient><linearGradient id=b44><stop offset=.000 stop-color=#1babde /><stop offset=.054 stop-color=#1fa6e2 /><stop offset=.114 stop-color=#307ffb /><stop offset=.229 stop-color=#2a93ee /><stop offset=.262 stop-color=#2a93ed /><stop offset=.282 stop-color=#2f81fa /><stop offset=.303 stop-color=#23a0e5 /><stop offset=.329 stop-color=#1fa6e2 /><stop offset=.343 stop-color=#01b8c8 /><stop offset=.356 stop-color=#12beb5 /><stop offset=.383 stop-color=#01b8c9 /><stop offset=.437 stop-color=#1caadf /><stop offset=.457 stop-color=#2d88f6 /><stop offset=.471 stop-color=#4561fc /><stop offset=.511 stop-color=#4848ec /><stop offset=.618 stop-color=#4745e9 /><stop offset=.645 stop-color=#412cba /><stop offset=1.000 stop-color=#402bb6 /></linearGradient><linearGradient id=b45><stop offset=.000 stop-color=#14beb4 /><stop offset=.047 stop-color=#0dbdb8 /><stop offset=.054 stop-color=#02bac3 /><stop offset=.074 stop-color=#1ea7e1 /><stop offset=.108 stop-color=#3080fa /><stop offset=.121 stop-color=#3777fe /><stop offset=.148 stop-color=#2798ea /><stop offset=.282 stop-color=#1aabdd /><stop offset=.303 stop-color=#02b7cb /><stop offset=.329 stop-color=#01b8ca /><stop offset=.350 stop-color=#10bdb6 /><stop offset=.370 stop-color=#01b8c9 /><stop offset=.410 stop-color=#1da8e0 /><stop offset=.450 stop-color=#21a3e3 /><stop offset=.491 stop-color=#3777fe /><stop offset=.524 stop-color=#3f6efe /><stop offset=.618 stop-color=#4369fe /><stop offset=.639 stop-color=#4743e7 /><stop offset=.652 stop-color=#422fc2 /><stop offset=.692 stop-color=#402bb6 /><stop offset=1.000 stop-color=#402bb6 /></linearGradient><linearGradient id=b46><stop offset=.000 stop-color=#43cc75 /><stop offset=.047 stop-color=#3dca7c /><stop offset=.061 stop-color=#22c1a7 /><stop offset=.067 stop-color=#05bbc0 /><stop offset=.074 stop-color=#08b5d0 /><stop offset=.094 stop-color=#249ee6 /><stop offset=.108 stop-color=#3974fe /><stop offset=.114 stop-color=#4561fc /><stop offset=.121 stop-color=#4561fc /><stop offset=.128 stop-color=#3974fe /><stop offset=.141 stop-color=#259be8 /><stop offset=.182 stop-color=#17aeda /><stop offset=.255 stop-color=#02b7cb /><stop offset=.276 stop-color=#0dbdb8 /><stop offset=.303 stop-color=#2dc597 /><stop offset=.323 stop-color=#2dc598 /><stop offset=.350 stop-color=#15beb2 /><stop offset=.363 stop-color=#01b8c9 /><stop offset=.390 stop-color=#23a1e5 /><stop offset=.410 stop-color=#2d89f5 /><stop offset=.450 stop-color=#1da9e0 /><stop offset=.524 stop-color=#2699e9 /><stop offset=.618 stop-color=#2a93ed /><stop offset=.632 stop-color=#347afd /><stop offset=.639 stop-color=#4465fd /><stop offset=.659 stop-color=#4535d2 /><stop offset=.672 stop-color=#412cba /><stop offset=.834 stop-color=#412dbb /><stop offset=1.000 stop-color=#402bb6 /></linearGradient><linearGradient id=b47><stop offset=.000 stop-color=#70cc53 /><stop offset=.040 stop-color=#70cc53 /><stop offset=.047 stop-color=#66cd59 /><stop offset=.061 stop-color=#35c887 /><stop offset=.074 stop-color=#03bbc1 /><stop offset=.094 stop-color=#20a5e3 /><stop offset=.108 stop-color=#3975fe /><stop offset=.114 stop-color=#465efb /><stop offset=.121 stop-color=#465efb /><stop offset=.128 stop-color=#3975fe /><stop offset=.141 stop-color=#23a1e4 /><stop offset=.175 stop-color=#09b4d1 /><stop offset=.242 stop-color=#02bac2 /><stop offset=.269 stop-color=#25c2a5 /><stop offset=.303 stop-color=#47cc71 /><stop offset=.323 stop-color=#4bcc6e /><stop offset=.343 stop-color=#30c692 /><stop offset=.363 stop-color=#02b9c4 /><stop offset=.383 stop-color=#1ea7e1 /><stop offset=.403 stop-color=#406dfe /><stop offset=.410 stop-color=#416afe /><stop offset=.424 stop-color=#2d8bf4 /><stop offset=.450 stop-color=#0bb3d2 /><stop offset=.457 stop-color=#01b8c9 /><stop offset=.477 stop-color=#0abcbb /><stop offset=.511 stop-color=#04b6cc /><stop offset=.612 stop-color=#05b6ce /><stop offset=.632 stop-color=#22a2e4 /><stop offset=.645 stop-color=#327bfc /><stop offset=.652 stop-color=#4564fd /><stop offset=.666 stop-color=#4741e5 /><stop offset=.679 stop-color=#412dbc /><stop offset=.820 stop-color=#412cb9 /><stop offset=.827 stop-color=#422fc1 /><stop offset=.834 stop-color=#4537d6 /><stop offset=.901 stop-color=#463adb /><stop offset=.908 stop-color=#4639da /><stop offset=.921 stop-color=#412cbb /><stop offset=1.000 stop-color=#402bb6 /></linearGradient><linearGradient id=b48><stop offset=.000 stop-color=#70cc53 /><stop offset=.040 stop-color=#70cc53 /><stop offset=.047 stop-color=#66cd59 /><stop offset=.061 stop-color=#35c887 /><stop offset=.074 stop-color=#03bbc1 /><stop offset=.101 stop-color=#269ae8 /><stop offset=.114 stop-color=#337afd /><stop offset=.121 stop-color=#337bfd /><stop offset=.148 stop-color=#1babde /><stop offset=.202 stop-color=#03b7cc /><stop offset=.249 stop-color=#06bbbe /><stop offset=.309 stop-color=#53cd68 /><stop offset=.323 stop-color=#55cd66 /><stop offset=.343 stop-color=#33c78b /><stop offset=.370 stop-color=#01b8c8 /><stop offset=.383 stop-color=#1aacdd /><stop offset=.403 stop-color=#3876fe /><stop offset=.410 stop-color=#3a74fe /><stop offset=.437 stop-color=#1da8e0 /><stop offset=.450 stop-color=#06bbbe /><stop offset=.457 stop-color=#26c2a2 /><stop offset=.471 stop-color=#3ecb7a /><stop offset=.484 stop-color=#45cc74 /><stop offset=.511 stop-color=#3aca80 /><stop offset=.558 stop-color=#43cb76 /><stop offset=.618 stop-color=#33c78b /><stop offset=.625 stop-color=#28c39f /><stop offset=.632 stop-color=#09bcbc /><stop offset=.639 stop-color=#0db3d3 /><stop offset=.652 stop-color=#2c90f0 /><stop offset=.659 stop-color=#347afd /><stop offset=.666 stop-color=#4564fd /><stop offset=.679 stop-color=#4639da /><stop offset=.686 stop-color=#422fc2 /><stop offset=.719 stop-color=#402bb7 /><stop offset=.813 stop-color=#412cb9 /><stop offset=.820 stop-color=#4330c5 /><stop offset=.827 stop-color=#4740e3 /><stop offset=.834 stop-color=#4854f5 /><stop offset=.908 stop-color=#4757f7 /><stop offset=.914 stop-color=#484aee /><stop offset=.928 stop-color=#412dbc /><stop offset=1.000 stop-color=#402bb6 /></linearGradient><linearGradient id=b49><stop offset=.000 stop-color=#43cc75 /><stop offset=.047 stop-color=#3dca7c /><stop offset=.061 stop-color=#22c1a7 /><stop offset=.067 stop-color=#05bbc0 /><stop offset=.087 stop-color=#1ca9df /><stop offset=.121 stop-color=#2c90f0 /><stop offset=.175 stop-color=#19addc /><stop offset=.255 stop-color=#02b7cb /><stop offset=.276 stop-color=#13beb4 /><stop offset=.303 stop-color=#33c78c /><stop offset=.323 stop-color=#39c981 /><stop offset=.356 stop-color=#14beb3 /><stop offset=.370 stop-color=#02b9c4 /><stop offset=.383 stop-color=#0db3d3 /><stop offset=.403 stop-color=#259be8 /><stop offset=.437 stop-color=#21a3e3 /><stop offset=.444 stop-color=#13b0d7 /><stop offset=.450 stop-color=#12beb5 /><stop offset=.457 stop-color=#37c984 /><stop offset=.464 stop-color=#59cd63 /><stop offset=.471 stop-color=#75cc50 /><stop offset=.484 stop-color=#8cc942 /><stop offset=.518 stop-color=#96c73c /><stop offset=.558 stop-color=#9ec637 /><stop offset=.618 stop-color=#85ca46 /><stop offset=.625 stop-color=#73cc51 /><stop offset=.632 stop-color=#52cd68 /><stop offset=.645 stop-color=#10bdb6 /><stop offset=.652 stop-color=#0cb3d3 /><stop offset=.666 stop-color=#2b90ef /><stop offset=.672 stop-color=#3875fe /><stop offset=.679 stop-color=#4758f8 /><stop offset=.692 stop-color=#4434cf /><stop offset=.706 stop-color=#412dbd /><stop offset=.807 stop-color=#412ebe /><stop offset=.813 stop-color=#4433cb /><stop offset=.827 stop-color=#4562fc /><stop offset=.834 stop-color=#317dfc /><stop offset=.861 stop-color=#2e85f8 /><stop offset=.908 stop-color=#307ffb /><stop offset=.914 stop-color=#3f6eff /><stop offset=.921 stop-color=#4853f5 /><stop offset=.928 stop-color=#463adb /><stop offset=.934 stop-color=#422ebe /><stop offset=1.000 stop-color=#402bb6 /></linearGradient><linearGradient id=b50><stop offset=.000 stop-color=#14beb4 /><stop offset=.047 stop-color=#0dbdb8 /><stop offset=.054 stop-color=#02bac3 /><stop offset=.074 stop-color=#1ea7e1 /><stop offset=.121 stop-color=#2c8ff0 /><stop offset=.269 stop-color=#16afd9 /><stop offset=.296 stop-color=#01b9c6 /><stop offset=.323 stop-color=#10bdb6 /><stop offset=.343 stop-color=#01b9c7 /><stop offset=.370 stop-color=#01b8c8 /><stop offset=.397 stop-color=#12b1d6 /><stop offset=.417 stop-color=#0eb3d4 /><stop offset=.437 stop-color=#2798ea /><stop offset=.444 stop-color=#1ea8e1 /><stop offset=.450 stop-color=#0cbdb9 /><stop offset=.457 stop-color=#3dcb7b /><stop offset=.464 stop-color=#6bcd57 /><stop offset=.471 stop-color=#86ca45 /><stop offset=.491 stop-color=#adc22e /><stop offset=.538 stop-color=#cebb28 /><stop offset=.625 stop-color=#b1c22c /><stop offset=.632 stop-color=#a3c534 /><stop offset=.639 stop-color=#88ca44 /><stop offset=.645 stop-color=#5dcd60 /><stop offset=.659 stop-color=#12beb5 /><stop offset=.666 stop-color=#09b4d1 /><stop offset=.672 stop-color=#23a0e5 /><stop offset=.679 stop-color=#2e84f8 /><stop offset=.686 stop-color=#4465fd /><stop offset=.699 stop-color=#4740e4 /><stop offset=.746 stop-color=#4433cb /><stop offset=.807 stop-color=#463cdf /><stop offset=.813 stop-color=#484bee /><stop offset=.820 stop-color=#4368fe /><stop offset=.827 stop-color=#2d8df2 /><stop offset=.834 stop-color=#1fa6e2 /><stop offset=.901 stop-color=#1ea7e1 /><stop offset=.914 stop-color=#2895ec /><stop offset=.921 stop-color=#3479fd /><stop offset=.928 stop-color=#4757f7 /><stop offset=.934 stop-color=#463cdf /><stop offset=.941 stop-color=#4330c5 /><stop offset=.961 stop-color=#412cb9 /><stop offset=1.000 stop-color=#402bb7 /></linearGradient><linearGradient id=b51><stop offset=.000 stop-color=#1babde /><stop offset=.054 stop-color=#1fa6e2 /><stop offset=.108 stop-color=#2e85f8 /><stop offset=.155 stop-color=#327cfc /><stop offset=.175 stop-color=#317dfc /><stop offset=.208 stop-color=#2b91ef /><stop offset=.336 stop-color=#1ca9df /><stop offset=.363 stop-color=#0fb2d4 /><stop offset=.390 stop-color=#20a5e2 /><stop offset=.410 stop-color=#03b7cc /><stop offset=.417 stop-color=#03b7cb /><stop offset=.430 stop-color=#21a2e4 /><stop offset=.437 stop-color=#259be8 /><stop offset=.444 stop-color=#1da9e0 /><stop offset=.450 stop-color=#09bcbc /><stop offset=.457 stop-color=#36c986 /><stop offset=.464 stop-color=#55cd66 /><stop offset=.477 stop-color=#75cc50 /><stop offset=.491 stop-color=#a1c535 /><stop offset=.518 stop-color=#c4bd26 /><stop offset=.558 stop-color=#cdbc27 /><stop offset=.605 stop-color=#aec22d /><stop offset=.632 stop-color=#c4be26 /><stop offset=.639 stop-color=#bfbf26 /><stop offset=.645 stop-color=#adc32e /><stop offset=.652 stop-color=#8ec941 /><stop offset=.666 stop-color=#37c983 /><stop offset=.672 stop-color=#0cbdb9 /><stop offset=.679 stop-color=#19acdc /><stop offset=.692 stop-color=#3677fe /><stop offset=.699 stop-color=#4563fd /><stop offset=.746 stop-color=#484aee /><stop offset=.787 stop-color=#4851f3 /><stop offset=.807 stop-color=#465dfa /><stop offset=.813 stop-color=#3c72ff /><stop offset=.827 stop-color=#10b2d5 /><stop offset=.834 stop-color=#18bfb0 /><stop offset=.840 stop-color=#27c2a1 /><stop offset=.887 stop-color=#25c2a4 /><stop offset=.908 stop-color=#07bbbe /><stop offset=.914 stop-color=#0fb2d5 /><stop offset=.928 stop-color=#317efb /><stop offset=.934 stop-color=#475bf9 /><stop offset=.941 stop-color=#4743e7 /><stop offset=.968 stop-color=#4330c4 /><stop offset=1.000 stop-color=#412dbb /></linearGradient><linearGradient id=b52><stop offset=.000 stop-color=#2c8ef2 /><stop offset=.061 stop-color=#2e86f7 /><stop offset=.128 stop-color=#3a73fe /><stop offset=.148 stop-color=#4367fd /><stop offset=.168 stop-color=#4853f5 /><stop offset=.202 stop-color=#337bfd /><stop offset=.343 stop-color=#2c90f0 /><stop offset=.363 stop-color=#23a0e5 /><stop offset=.383 stop-color=#2d88f6 /><stop offset=.397 stop-color=#2797eb /><stop offset=.417 stop-color=#16afda /><stop offset=.437 stop-color=#22a2e4 /><stop offset=.444 stop-color=#1aabdd /><stop offset=.450 stop-color=#01b8ca /><stop offset=.464 stop-color=#2ac39d /><stop offset=.477 stop-color=#36c887 /><stop offset=.491 stop-color=#65cd5a /><stop offset=.511 stop-color=#90c83f /><stop offset=.551 stop-color=#9fc536 /><stop offset=.571 stop-color=#92c83e /><stop offset=.585 stop-color=#70cc53 /><stop offset=.598 stop-color=#4acc6f /><stop offset=.605 stop-color=#4ccd6d /><stop offset=.618 stop-color=#79cc4d /><stop offset=.632 stop-color=#b4c12a /><stop offset=.645 stop-color=#cebb27 /><stop offset=.652 stop-color=#c7bd26 /><stop offset=.659 stop-color=#b4c12a /><stop offset=.666 stop-color=#97c73b /><stop offset=.672 stop-color=#60cd5e /><stop offset=.679 stop-color=#2bc49b /><stop offset=.686 stop-color=#04b6cd /><stop offset=.692 stop-color=#21a3e3 /><stop offset=.706 stop-color=#2d88f6 /><stop offset=.766 stop-color=#4660fc /><stop offset=.800 stop-color=#2e84f8 /><stop offset=.807 stop-color=#2d8af5 /><stop offset=.813 stop-color=#249de6 /><stop offset=.820 stop-color=#04b6cd /><stop offset=.834 stop-color=#66cd5a /><stop offset=.840 stop-color=#77cc4e /><stop offset=.887 stop-color=#73cc51 /><stop offset=.908 stop-color=#46cc72 /><stop offset=.914 stop-color=#2cc49a /><stop offset=.921 stop-color=#04b6cd /><stop offset=.928 stop-color=#239fe5 /><stop offset=.934 stop-color=#2f82fa /><stop offset=.941 stop-color=#4464fd /><stop offset=.961 stop-color=#4848ec /><stop offset=1.000 stop-color=#4539d9 /></linearGradient><linearGradient id=b53><stop offset=.000 stop-color=#4367fd /><stop offset=.141 stop-color=#4757f7 /><stop offset=.168 stop-color=#4746ea /><stop offset=.208 stop-color=#465dfb /><stop offset=.343 stop-color=#3e6fff /><stop offset=.363 stop-color=#307ffb /><stop offset=.383 stop-color=#406dfe /><stop offset=.417 stop-color=#2895ec /><stop offset=.444 stop-color=#249de6 /><stop offset=.477 stop-color=#02b7ca /><stop offset=.497 stop-color=#2fc595 /><stop offset=.518 stop-color=#3dca7c /><stop offset=.558 stop-color=#42cb76 /><stop offset=.571 stop-color=#37c983 /><stop offset=.578 stop-color=#2ec596 /><stop offset=.592 stop-color=#01b8c9 /><stop offset=.598 stop-color=#0eb3d4 /><stop offset=.605 stop-color=#09b4d1 /><stop offset=.612 stop-color=#02bac3 /><stop offset=.625 stop-color=#43cb76 /><stop offset=.639 stop-color=#a0c536 /><stop offset=.645 stop-color=#bfbf26 /><stop offset=.652 stop-color=#d3ba29 /><stop offset=.659 stop-color=#d9b92a /><stop offset=.666 stop-color=#d2bb28 /><stop offset=.672 stop-color=#b8c029 /><stop offset=.679 stop-color=#85ca46 /><stop offset=.686 stop-color=#3fcb79 /><stop offset=.692 stop-color=#18bfb0 /><stop offset=.699 stop-color=#04b6cd /><stop offset=.713 stop-color=#18aedb /><stop offset=.753 stop-color=#2994ed /><stop offset=.766 stop-color=#2e86f8 /><stop offset=.807 stop-color=#13b1d7 /><stop offset=.813 stop-color=#06bbbe /><stop offset=.820 stop-color=#3dca7c /><stop offset=.827 stop-color=#8ac943 /><stop offset=.834 stop-color=#b4c12a /><stop offset=.854 stop-color=#bdbf27 /><stop offset=.887 stop-color=#b9c028 /><stop offset=.908 stop-color=#8cc942 /><stop offset=.914 stop-color=#65cd5b /><stop offset=.928 stop-color=#02b7ca /><stop offset=.934 stop-color=#22a2e4 /><stop offset=.948 stop-color=#327bfc /><stop offset=.975 stop-color=#465efb /><stop offset=1.000 stop-color=#4755f6 /></linearGradient><linearGradient id=b54><stop offset=.000 stop-color=#4745ea /><stop offset=.188 stop-color=#4740e3 /><stop offset=.343 stop-color=#484ef1 /><stop offset=.397 stop-color=#475cfa /><stop offset=.450 stop-color=#3080fa /><stop offset=.491 stop-color=#19addc /><stop offset=.511 stop-color=#04b6cc /><stop offset=.571 stop-color=#05b6cd /><stop offset=.598 stop-color=#23a1e5 /><stop offset=.612 stop-color=#1da8e0 /><stop offset=.625 stop-color=#03bbc1 /><stop offset=.639 stop-color=#4bcd6e /><stop offset=.645 stop-color=#83ca47 /><stop offset=.652 stop-color=#afc22d /><stop offset=.659 stop-color=#cdbc27 /><stop offset=.666 stop-color=#dfb82c /><stop offset=.672 stop-color=#e2b82e /><stop offset=.679 stop-color=#cebb28 /><stop offset=.686 stop-color=#a5c433 /><stop offset=.699 stop-color=#43cb75 /><stop offset=.719 stop-color=#2dc597 /><stop offset=.746 stop-color=#1abfaf /><stop offset=.760 stop-color=#03bbc1 /><stop offset=.773 stop-color=#02bac3 /><stop offset=.800 stop-color=#2fc594 /><stop offset=.807 stop-color=#33c78c /><stop offset=.813 stop-color=#57cd64 /><stop offset=.820 stop-color=#9cc638 /><stop offset=.827 stop-color=#c7bd26 /><stop offset=.834 stop-color=#d5ba29 /><stop offset=.887 stop-color=#d1bb28 /><stop offset=.901 stop-color=#b6c129 /><stop offset=.914 stop-color=#8ec941 /><stop offset=.921 stop-color=#66cd5a /><stop offset=.934 stop-color=#01b9c6 /><stop offset=.941 stop-color=#1ca9df /><stop offset=.982 stop-color=#2f81fa /><stop offset=1.000 stop-color=#327bfc /></linearGradient><linearGradient id=b55><stop offset=.000 stop-color=#4537d5 /><stop offset=.067 stop-color=#4433cc /><stop offset=.309 stop-color=#4434d0 /><stop offset=.430 stop-color=#484df1 /><stop offset=.464 stop-color=#4466fd /><stop offset=.491 stop-color=#2d8af4 /><stop offset=.524 stop-color=#2699e9 /><stop offset=.612 stop-color=#2a93ee /><stop offset=.632 stop-color=#15afd8 /><stop offset=.639 stop-color=#04bbc1 /><stop offset=.652 stop-color=#5ccd61 /><stop offset=.659 stop-color=#93c83e /><stop offset=.666 stop-color=#bbc028 /><stop offset=.672 stop-color=#dcb92b /><stop offset=.679 stop-color=#ebb633 /><stop offset=.686 stop-color=#e2b82e /><stop offset=.692 stop-color=#c8bd26 /><stop offset=.699 stop-color=#adc32e /><stop offset=.726 stop-color=#90c83f /><stop offset=.780 stop-color=#88ca44 /><stop offset=.807 stop-color=#96c73c /><stop offset=.813 stop-color=#b3c12b /><stop offset=.820 stop-color=#d2bb28 /><stop offset=.827 stop-color=#d5ba29 /><stop offset=.840 stop-color=#bdbf27 /><stop offset=.887 stop-color=#b6c129 /><stop offset=.908 stop-color=#8dc941 /><stop offset=.921 stop-color=#81cb48 /><stop offset=.928 stop-color=#62cd5c /><stop offset=.941 stop-color=#0ebdb8 /><stop offset=.948 stop-color=#04b6cd /><stop offset=.968 stop-color=#1da9e0 /><stop offset=1.000 stop-color=#249ee6 /></linearGradient><linearGradient id=b56><stop offset=.000 stop-color=#463ee0 /><stop offset=.047 stop-color=#463bdc /><stop offset=.081 stop-color=#4331c6 /><stop offset=.390 stop-color=#4434ce /><stop offset=.457 stop-color=#4744e8 /><stop offset=.504 stop-color=#406dfe /><stop offset=.618 stop-color=#3c71ff /><stop offset=.639 stop-color=#249fe6 /><stop offset=.645 stop-color=#13b1d7 /><stop offset=.652 stop-color=#0dbdb8 /><stop offset=.666 stop-color=#69cd58 /><stop offset=.672 stop-color=#a6c432 /><stop offset=.679 stop-color=#d5ba29 /><stop offset=.686 stop-color=#efb635 /><stop offset=.699 stop-color=#edb634 /><stop offset=.780 stop-color=#e6b730 /><stop offset=.807 stop-color=#dbb92b /><stop offset=.813 stop-color=#e1b82d /><stop offset=.820 stop-color=#d9b92a /><stop offset=.827 stop-color=#b3c12a /><stop offset=.834 stop-color=#85ca46 /><stop offset=.840 stop-color=#73cc51 /><stop offset=.867 stop-color=#4bcd6e /><stop offset=.894 stop-color=#57cd64 /><stop offset=.908 stop-color=#46cc72 /><stop offset=.914 stop-color=#52cd68 /><stop offset=.921 stop-color=#6ccd55 /><stop offset=.928 stop-color=#77cc4e /><stop offset=.934 stop-color=#66cd5a /><stop offset=.941 stop-color=#40cb79 /><stop offset=.955 stop-color=#27c2a1 /><stop offset=.975 stop-color=#03bbc1 /><stop offset=1.000 stop-color=#04b6cd /></linearGradient><linearGradient id=b57><stop offset=.000 stop-color=#484cef /><stop offset=.047 stop-color=#4747eb /><stop offset=.081 stop-color=#4434cf /><stop offset=.450 stop-color=#4536d4 /><stop offset=.511 stop-color=#4851f3 /><stop offset=.618 stop-color=#484ff2 /><stop offset=.632 stop-color=#4563fd /><stop offset=.639 stop-color=#3776fe /><stop offset=.652 stop-color=#22a2e4 /><stop offset=.659 stop-color=#0ab4d2 /><stop offset=.666 stop-color=#18bfb1 /><stop offset=.672 stop-color=#45cc74 /><stop offset=.679 stop-color=#92c83e /><stop offset=.686 stop-color=#cabc26 /><stop offset=.692 stop-color=#edb633 /><stop offset=.699 stop-color=#fbb83b /><stop offset=.753 stop-color=#f9d42d /><stop offset=.800 stop-color=#fbb83b /><stop offset=.813 stop-color=#e0b82d /><stop offset=.820 stop-color=#b1c22b /><stop offset=.827 stop-color=#64cd5b /><stop offset=.834 stop-color=#2ec595 /><stop offset=.847 stop-color=#05bbbf /><stop offset=.861 stop-color=#20a5e2 /><stop offset=.874 stop-color=#2895ec /><stop offset=.887 stop-color=#1aabdd /><stop offset=.894 stop-color=#07b5cf /><stop offset=.908 stop-color=#03bac1 /><stop offset=.914 stop-color=#1bbfae /><stop offset=.921 stop-color=#37c985 /><stop offset=.928 stop-color=#5fcd5f /><stop offset=.934 stop-color=#77cc4f /><stop offset=.975 stop-color=#39c982 /><stop offset=1.000 stop-color=#30c692 /></linearGradient><linearGradient id=b58><stop offset=.000 stop-color=#4850f3 /><stop offset=.047 stop-color=#484bef /><stop offset=.081 stop-color=#4536d4 /><stop offset=.484 stop-color=#4639da /><stop offset=.538 stop-color=#463de0 /><stop offset=.618 stop-color=#4539d9 /><stop offset=.639 stop-color=#4852f4 /><stop offset=.645 stop-color=#4563fd /><stop offset=.652 stop-color=#347afd /><stop offset=.666 stop-color=#20a5e3 /><stop offset=.672 stop-color=#01b8c9 /><stop offset=.679 stop-color=#32c78d /><stop offset=.686 stop-color=#79cc4e /><stop offset=.692 stop-color=#b5c129 /><stop offset=.699 stop-color=#dab92b /><stop offset=.713 stop-color=#fab63b /><stop offset=.753 stop-color=#f9d42d /><stop offset=.787 stop-color=#fcb93b /><stop offset=.807 stop-color=#dab92a /><stop offset=.813 stop-color=#b3c12b /><stop offset=.820 stop-color=#64cd5b /><stop offset=.827 stop-color=#1fc0aa /><stop offset=.834 stop-color=#10b2d5 /><stop offset=.847 stop-color=#2895ec /><stop offset=.854 stop-color=#3777fe /><stop offset=.861 stop-color=#4851f3 /><stop offset=.867 stop-color=#4535d2 /><stop offset=.874 stop-color=#4330c5 /><stop offset=.881 stop-color=#4740e4 /><stop offset=.887 stop-color=#4562fc /><stop offset=.894 stop-color=#2e85f8 /><stop offset=.908 stop-color=#21a3e4 /><stop offset=.914 stop-color=#17aeda /><stop offset=.921 stop-color=#05bbbf /><stop offset=.934 stop-color=#61cd5d /><stop offset=.941 stop-color=#7acb4c /><stop offset=1.000 stop-color=#5ecd5f /></linearGradient><linearGradient id=b59><stop offset=.000 stop-color=#4755f6 /><stop offset=.047 stop-color=#484ff2 /><stop offset=.081 stop-color=#4537d6 /><stop offset=.551 stop-color=#4536d3 /><stop offset=.625 stop-color=#4332c9 /><stop offset=.645 stop-color=#4744e8 /><stop offset=.659 stop-color=#4466fd /><stop offset=.666 stop-color=#327cfc /><stop offset=.679 stop-color=#12b1d7 /><stop offset=.686 stop-color=#21c1a8 /><stop offset=.692 stop-color=#52cd69 /><stop offset=.699 stop-color=#8bc942 /><stop offset=.713 stop-color=#b8c028 /><stop offset=.739 stop-color=#e8b731 /><stop offset=.760 stop-color=#eab632 /><stop offset=.787 stop-color=#c0be26 /><stop offset=.807 stop-color=#9dc637 /><stop offset=.813 stop-color=#6ccd56 /><stop offset=.820 stop-color=#2cc49b /><stop offset=.827 stop-color=#0bb3d2 /><stop offset=.834 stop-color=#249ee6 /><stop offset=.847 stop-color=#307efb /><stop offset=.854 stop-color=#465dfb /><stop offset=.861 stop-color=#4639d9 /><stop offset=.867 stop-color=#3e26a8 /><stop offset=.874 stop-color=#3e26a8 /><stop offset=.881 stop-color=#412cba /><stop offset=.887 stop-color=#484aed /><stop offset=.894 stop-color=#416cfe /><stop offset=.901 stop-color=#2e84f8 /><stop offset=.914 stop-color=#23a0e5 /><stop offset=.921 stop-color=#0eb2d4 /><stop offset=.928 stop-color=#18bfb0 /><stop offset=.934 stop-color=#3fcb79 /><stop offset=.941 stop-color=#6acd57 /><stop offset=.948 stop-color=#78cc4e /><stop offset=1.000 stop-color=#76cc4f /></linearGradient><linearGradient id=b60><stop offset=.000 stop-color=#475af9 /><stop offset=.047 stop-color=#4853f5 /><stop offset=.081 stop-color=#4538d7 /><stop offset=.551 stop-color=#4535d2 /><stop offset=.639 stop-color=#4331c6 /><stop offset=.652 stop-color=#463ada /><stop offset=.666 stop-color=#4854f5 /><stop offset=.672 stop-color=#416bfe /><stop offset=.686 stop-color=#1ea7e1 /><stop offset=.692 stop-color=#02bac4 /><stop offset=.699 stop-color=#2cc49a /><stop offset=.713 stop-color=#4bcd6e /><stop offset=.733 stop-color=#7fcb4a /><stop offset=.753 stop-color=#8dc941 /><stop offset=.773 stop-color=#77cc4f /><stop offset=.793 stop-color=#47cc72 /><stop offset=.807 stop-color=#4bcc6e /><stop offset=.813 stop-color=#34c88a /><stop offset=.820 stop-color=#09bcbc /><stop offset=.827 stop-color=#1aabdd /><stop offset=.840 stop-color=#2895ec /><stop offset=.854 stop-color=#317dfc /><stop offset=.861 stop-color=#4368fe /><stop offset=.874 stop-color=#4854f5 /><stop offset=.887 stop-color=#3e6fff /><stop offset=.894 stop-color=#2f82fa /><stop offset=.914 stop-color=#249ee6 /><stop offset=.921 stop-color=#13b0d7 /><stop offset=.928 stop-color=#12beb5 /><stop offset=.941 stop-color=#53cd68 /><stop offset=.948 stop-color=#5ecd5f /><stop offset=.968 stop-color=#48cc71 /><stop offset=1.000 stop-color=#5ecd5f /></linearGradient><linearGradient id=b61><stop offset=.000 stop-color=#465ffb /><stop offset=.040 stop-color=#465ffb /><stop offset=.074 stop-color=#4539d9 /><stop offset=.551 stop-color=#4536d3 /><stop offset=.652 stop-color=#4230c4 /><stop offset=.666 stop-color=#4639d9 /><stop offset=.679 stop-color=#465ffb /><stop offset=.686 stop-color=#317dfc /><stop offset=.699 stop-color=#1babde /><stop offset=.713 stop-color=#01b8ca /><stop offset=.746 stop-color=#25c2a3 /><stop offset=.766 stop-color=#1ec0ab /><stop offset=.787 stop-color=#02bac4 /><stop offset=.793 stop-color=#03b7cb /><stop offset=.800 stop-color=#01b9c6 /><stop offset=.807 stop-color=#14beb3 /><stop offset=.813 stop-color=#08bcbd /><stop offset=.827 stop-color=#20a4e3 /><stop offset=.881 stop-color=#2b91ef /><stop offset=.914 stop-color=#239fe5 /><stop offset=.921 stop-color=#18addb /><stop offset=.928 stop-color=#03bbc1 /><stop offset=.934 stop-color=#2cc499 /><stop offset=.941 stop-color=#38c983 /><stop offset=.948 stop-color=#37c983 /><stop offset=.961 stop-color=#1fc0aa /><stop offset=.968 stop-color=#1abfae /><stop offset=.995 stop-color=#2fc693 /><stop offset=1.000 stop-color=#30c692 /></linearGradient><linearGradient id=b62><stop offset=.000 stop-color=#4464fd /><stop offset=.040 stop-color=#4464fd /><stop offset=.067 stop-color=#4742e6 /><stop offset=.081 stop-color=#463ada /><stop offset=.545 stop-color=#4537d5 /><stop offset=.652 stop-color=#412dbc /><stop offset=.666 stop-color=#422ebf /><stop offset=.679 stop-color=#473ee2 /><stop offset=.692 stop-color=#416bfe /><stop offset=.699 stop-color=#2f81fa /><stop offset=.733 stop-color=#23a1e5 /><stop offset=.773 stop-color=#249ee6 /><stop offset=.793 stop-color=#2b92ee /><stop offset=.807 stop-color=#22a1e4 /><stop offset=.827 stop-color=#2d8bf4 /><stop offset=.861 stop-color=#2c8ef1 /><stop offset=.914 stop-color=#2d8df3 /><stop offset=.928 stop-color=#21a4e3 /><stop offset=.941 stop-color=#02bac2 /><stop offset=.948 stop-color=#02bac2 /><stop offset=.955 stop-color=#05b6ce /><stop offset=.961 stop-color=#16afd9 /><stop offset=.975 stop-color=#13b0d7 /><stop offset=1.000 stop-color=#04b6cd /></linearGradient><linearGradient id=b63><stop offset=.000 stop-color=#4269fe /><stop offset=.040 stop-color=#4269fe /><stop offset=.074 stop-color=#4744e8 /><stop offset=.558 stop-color=#473fe2 /><stop offset=.632 stop-color=#412cba /><stop offset=.679 stop-color=#4537d6 /><stop offset=.699 stop-color=#475dfa /><stop offset=.746 stop-color=#3479fd /><stop offset=.800 stop-color=#3f6efe /><stop offset=.813 stop-color=#3876fe /><stop offset=.827 stop-color=#3f6eff /><stop offset=.847 stop-color=#3876fe /><stop offset=.874 stop-color=#4465fd /><stop offset=.928 stop-color=#317dfc /><stop offset=.948 stop-color=#2797eb /><stop offset=.968 stop-color=#2b91ef /><stop offset=1.000 stop-color=#249ee6 /></linearGradient><linearGradient id=b64><stop offset=.000 stop-color=#3f6fff /><stop offset=.047 stop-color=#426afe /><stop offset=.087 stop-color=#4759f9 /><stop offset=.551 stop-color=#4853f5 /><stop offset=.592 stop-color=#463ee1 /><stop offset=.625 stop-color=#422ebf /><stop offset=.659 stop-color=#4537d7 /><stop offset=.713 stop-color=#475af9 /><stop offset=.780 stop-color=#4660fb /><stop offset=.847 stop-color=#4759f8 /><stop offset=.874 stop-color=#4740e3 /><stop offset=.914 stop-color=#4660fb /><stop offset=.934 stop-color=#4368fd /><stop offset=1.000 stop-color=#317efb /></linearGradient><linearGradient id=b65><stop offset=.000 stop-color=#3b72fe /><stop offset=.054 stop-color=#416cfe /><stop offset=.108 stop-color=#4562fc /><stop offset=.558 stop-color=#475bf9 /><stop offset=.612 stop-color=#463cde /><stop offset=.639 stop-color=#463adb /><stop offset=.699 stop-color=#4756f7 /><stop offset=.780 stop-color=#475bf9 /><stop offset=.847 stop-color=#4851f3 /><stop offset=.874 stop-color=#4741e5 /><stop offset=.921 stop-color=#4854f5 /><stop offset=1.000 stop-color=#4466fd /></linearGradient><linearGradient id=b66><stop offset=.000 stop-color=#3e6fff /><stop offset=.054 stop-color=#4464fd /><stop offset=.094 stop-color=#4757f7 /><stop offset=.585 stop-color=#484cf0 /><stop offset=.639 stop-color=#4745ea /><stop offset=.726 stop-color=#4759f8 /><stop offset=.901 stop-color=#4743e7 /><stop offset=1.000 stop-color=#4850f2 /></linearGradient><linearGradient id=b67><stop offset=.000 stop-color=#3974fe /><stop offset=.047 stop-color=#406dfe /><stop offset=.081 stop-color=#4758f8 /><stop offset=.632 stop-color=#4756f7 /><stop offset=.733 stop-color=#465ffb /><stop offset=.928 stop-color=#4742e6 /><stop offset=1.000 stop-color=#4743e7 /></linearGradient><linearGradient id=b68><stop offset=.000 stop-color=#317efb /><stop offset=.047 stop-color=#3776fe /><stop offset=.081 stop-color=#4561fc /><stop offset=.625 stop-color=#4367fd /><stop offset=.739 stop-color=#4269fe /><stop offset=.941 stop-color=#484cf0 /><stop offset=1.000 stop-color=#484aee /></linearGradient><linearGradient id=b69><stop offset=.000 stop-color=#2f81fa /><stop offset=.047 stop-color=#3e70ff /><stop offset=.081 stop-color=#4755f6 /><stop offset=.592 stop-color=#475cfa /><stop offset=.739 stop-color=#4562fc /><stop offset=.948 stop-color=#4848ec /><stop offset=1.000 stop-color=#4746ea /></linearGradient><linearGradient id=b70><stop offset=.000 stop-color=#2f81fa /><stop offset=.040 stop-color=#3b72fe /><stop offset=.067 stop-color=#484cef /><stop offset=.087 stop-color=#4744e8 /><stop offset=.558 stop-color=#484aed /><stop offset=.733 stop-color=#475bf9 /><stop offset=.948 stop-color=#4743e7 /><stop offset=1.000 stop-color=#4741e5 /></linearGradient><linearGradient id=b71><stop offset=.000 stop-color=#2f82f9 /><stop offset=.047 stop-color=#3c71ff /><stop offset=.081 stop-color=#4756f6 /><stop offset=.571 stop-color=#484ff2 /><stop offset=.753 stop-color=#4743e7 /><stop offset=.988 stop-color=#4747eb /><stop offset=1.000 stop-color=#4747eb /></linearGradient><linearGradient id=b72><stop offset=.000 stop-color=#2e83f9 /><stop offset=.047 stop-color=#327bfc /><stop offset=.081 stop-color=#4465fd /><stop offset=.780 stop-color=#475bfa /><stop offset=1.000 stop-color=#484df0 /></linearGradient><linearGradient id=b73><stop offset=.000 stop-color=#2f82fa /><stop offset=.047 stop-color=#317dfc /><stop offset=.081 stop-color=#4368fd /><stop offset=.760 stop-color=#4562fc /><stop offset=1.000 stop-color=#484df1 /></linearGradient><linearGradient id=b74><stop offset=.000 stop-color=#3579fd /><stop offset=.047 stop-color=#3a74fe /><stop offset=.081 stop-color=#4660fc /><stop offset=.625 stop-color=#4758f8 /><stop offset=1.000 stop-color=#4744e8 /></linearGradient><linearGradient id=b75><stop offset=.000 stop-color=#337bfd /><stop offset=.047 stop-color=#3777fe /><stop offset=.081 stop-color=#4464fd /><stop offset=.551 stop-color=#475cfa /><stop offset=.753 stop-color=#4746ea /><stop offset=1.000 stop-color=#4744e8 /></linearGradient><linearGradient id=b76><stop offset=.000 stop-color=#2d89f5 /><stop offset=.047 stop-color=#2e87f7 /><stop offset=.087 stop-color=#3677fe /><stop offset=.524 stop-color=#3f6efe /><stop offset=.726 stop-color=#4744e8 /><stop offset=.934 stop-color=#4852f4 /><stop offset=1.000 stop-color=#484ff2 /></linearGradient><linearGradient id=b77><stop offset=.000 stop-color=#2b92ee /><stop offset=.054 stop-color=#2c8ff0 /><stop offset=.094 stop-color=#2d89f6 /><stop offset=.356 stop-color=#2e85f8 /><stop offset=.571 stop-color=#3e70ff /><stop offset=.807 stop-color=#4758f8 /><stop offset=1.000 stop-color=#4851f4 /></linearGradient><linearGradient id=b78><stop offset=.000 stop-color=#22a2e4 /><stop offset=.061 stop-color=#21a4e3 /><stop offset=.262 stop-color=#1da9e0 /><stop offset=.753 stop-color=#3f6dfe /><stop offset=.948 stop-color=#4854f5 /><stop offset=1.000 stop-color=#4852f4 /></linearGradient><linearGradient id=b79><stop offset=.000 stop-color=#0bb3d2 /><stop offset=.054 stop-color=#02bac4 /><stop offset=.087 stop-color=#06bbbe /><stop offset=.134 stop-color=#28c39f /><stop offset=.249 stop-color=#25c2a4 /><stop offset=.336 stop-color=#01b9c5 /><stop offset=.524 stop-color=#269ae8 /><stop offset=.739 stop-color=#3f6fff /><stop offset=.955 stop-color=#4854f5 /><stop offset=1.000 stop-color=#4852f4 /></linearGradient><linearGradient id=b80><stop offset=.000 stop-color=#13beb4 /><stop offset=.047 stop-color=#32c78e /><stop offset=.081 stop-color=#39c981 /><stop offset=.128 stop-color=#72cc52 /><stop offset=.242 stop-color=#72cc52 /><stop offset=.323 stop-color=#3aca80 /><stop offset=.403 stop-color=#15beb2 /><stop offset=.444 stop-color=#01b8c8 /><stop offset=.565 stop-color=#269ae8 /><stop offset=.726 stop-color=#3d70ff /><stop offset=.975 stop-color=#4853f5 /><stop offset=1.000 stop-color=#4852f4 /></linearGradient><linearGradient id=b81><stop offset=.000 stop-color=#2ec596 /><stop offset=.047 stop-color=#53cd67 /><stop offset=.081 stop-color=#6bcd56 /><stop offset=.128 stop-color=#aec22d /><stop offset=.242 stop-color=#adc32e /><stop offset=.376 stop-color=#3dca7c /><stop offset=.444 stop-color=#13beb4 /><stop offset=.477 stop-color=#01b8c9 /><stop offset=.565 stop-color=#249ee6 /><stop offset=.713 stop-color=#3d70ff /><stop offset=1.000 stop-color=#4850f3 /></linearGradient><linearGradient id=b82><stop offset=.000 stop-color=#33c78b /><stop offset=.047 stop-color=#63cd5c /><stop offset=.081 stop-color=#7ccb4c /><stop offset=.128 stop-color=#bebf27 /><stop offset=.242 stop-color=#bbbf27 /><stop offset=.370 stop-color=#4ccd6d /><stop offset=.477 stop-color=#01b9c5 /><stop offset=.578 stop-color=#259be8 /><stop offset=.719 stop-color=#3d70ff /><stop offset=1.000 stop-color=#484ff2 /></linearGradient><linearGradient id=b83><stop offset=.000 stop-color=#2dc597 /><stop offset=.047 stop-color=#4ecd6c /><stop offset=.081 stop-color=#61cd5d /><stop offset=.128 stop-color=#a1c535 /><stop offset=.242 stop-color=#9dc638 /><stop offset=.370 stop-color=#38c982 /><stop offset=.430 stop-color=#14beb3 /><stop offset=.464 stop-color=#01b9c7 /><stop offset=.565 stop-color=#249de6 /><stop offset=.733 stop-color=#3d71ff /><stop offset=1.000 stop-color=#484df1 /></linearGradient><linearGradient id=b84><stop offset=.000 stop-color=#17bfb1 /><stop offset=.047 stop-color=#30c691 /><stop offset=.081 stop-color=#34c88a /><stop offset=.134 stop-color=#5fcd5f /><stop offset=.242 stop-color=#55cd66 /><stop offset=.316 stop-color=#31c690 /><stop offset=.390 stop-color=#0cbdb9 /><stop offset=.430 stop-color=#03b7cc /><stop offset=.538 stop-color=#249fe5 /><stop offset=.746 stop-color=#3d70ff /><stop offset=1.000 stop-color=#484cef /></linearGradient><linearGradient id=b85><stop offset=.000 stop-color=#05b6ce /><stop offset=.054 stop-color=#02bac3 /><stop offset=.094 stop-color=#08bcbd /><stop offset=.141 stop-color=#1ec0ab /><stop offset=.249 stop-color=#12beb4 /><stop offset=.309 stop-color=#01b8c8 /><stop offset=.491 stop-color=#249ee6 /><stop offset=.739 stop-color=#3f6eff /><stop offset=1.000 stop-color=#484bef /></linearGradient><linearGradient id=b86><stop offset=.000 stop-color=#1da8e0 /><stop offset=.282 stop-color=#1fa6e2 /><stop offset=.639 stop-color=#3876fe /><stop offset=.921 stop-color=#4852f4 /><stop offset=1.000 stop-color=#484bef /></linearGradient><linearGradient id=b87><stop offset=.000 stop-color=#2a93ee /><stop offset=.518 stop-color=#327bfc /><stop offset=.793 stop-color=#475bfa /><stop offset=1.000 stop-color=#484bef /></linearGradient><linearGradient id=b88><stop offset=.000 stop-color=#3875fe /><stop offset=.800 stop-color=#4757f7 /><stop offset=1.000 stop-color=#484bef /></linearGradient><linearGradient id=b89><stop offset=.000 stop-color=#4465fd /><stop offset=1.000 stop-color=#484bef /></linearGradient><linearGradient id=b90><stop offset=.000 stop-color=#4465fd /><stop offset=.632 stop-color=#4855f6 /><stop offset=1.000 stop-color=#484bef /></linearGradient><linearGradient id=b91><stop offset=.000 stop-color=#4464fd /><stop offset=.679 stop-color=#465dfa /><stop offset=1.000 stop-color=#4758f8 /></linearGradient><linearGradient id=b92><stop offset=.000 stop-color=#327cfc /><stop offset=1.000 stop-color=#3c71ff /></linearGradient><linearGradient id=b93><stop offset=.000 stop-color=#21a4e3 /><stop offset=.282 stop-color=#259be8 /><stop offset=.787 stop-color=#2995ec /><stop offset=1.000 stop-color=#2d8bf4 /></linearGradient><linearGradient id=b94><stop offset=.000 stop-color=#07b5d0 /><stop offset=.054 stop-color=#0fb2d4 /><stop offset=.121 stop-color=#17aeda /><stop offset=.766 stop-color=#1ea8e1 /><stop offset=.955 stop-color=#2698ea /><stop offset=1.000 stop-color=#2698ea /></linearGradient><linearGradient id=b95><stop offset=.000 stop-color=#03b7cb /><stop offset=.249 stop-color=#0bb3d2 /><stop offset=.726 stop-color=#0fb2d5 /><stop offset=.921 stop-color=#259ce7 /><stop offset=1.000 stop-color=#259ce7 /></linearGradient><linearGradient id=b96><stop offset=.000 stop-color=#01b9c6 /><stop offset=.733 stop-color=#05b6ce /><stop offset=.881 stop-color=#239fe5 /><stop offset=1.000 stop-color=#239fe5 /></linearGradient><linearGradient id=cbg x1=0 y1=0 x2=0 y2=1><stop offset=0.0000 stop-color=#f9fb0e /><stop offset=0.0312 stop-color=#f5eb1b /><stop offset=0.0625 stop-color=#f8da29 /><stop offset=0.0938 stop-color=#fccb34 /><stop offset=0.1250 stop-color=#fdbd3a /><stop offset=0.1562 stop-color=#f2b636 /><stop offset=0.1875 stop-color=#dfb82c /><stop offset=0.2188 stop-color=#cbbc27 /><stop offset=0.2500 stop-color=#b7c029 /><stop offset=0.2812 stop-color=#a3c534 /><stop offset=0.3125 stop-color=#8dc941 /><stop offset=0.3438 stop-color=#76cc50 /><stop offset=0.3750 stop-color=#5ccd61 /><stop offset=0.4062 stop-color=#44cc75 /><stop offset=0.4375 stop-color=#34c88a /><stop offset=0.4688 stop-color=#28c3a0 /><stop offset=0.5000 stop-color=#12beb5 /><stop offset=0.5312 stop-color=#01b9c6 /><stop offset=0.5625 stop-color=#0cb3d3 /><stop offset=0.5938 stop-color=#1aacdd /><stop offset=0.6250 stop-color=#21a3e3 /><stop offset=0.6562 stop-color=#269ae9 /><stop offset=0.6875 stop-color=#2c90f0 /><stop offset=0.7188 stop-color=#2e85f8 /><stop offset=0.7500 stop-color=#347afd /><stop offset=0.7812 stop-color=#3f6efe /><stop offset=0.8125 stop-color=#4562fc /><stop offset=0.8438 stop-color=#4757f7 /><stop offset=0.8750 stop-color=#484cef /><stop offset=0.9062 stop-color=#4741e5 /><stop offset=0.9375 stop-color=#4536d5 /><stop offset=0.9688 stop-color=#422ebf /><stop offset=1.0000 stop-color=#3e26a8 /></linearGradient></defs>
<rect x=296 y=189 width=595 height=2.05 fill=url(#a0) /><rect x=296 y=191 width=595 height=2.05 fill=url(#a1) /><rect x=296 y=193 width=595 height=2.05 fill=url(#a2) /><rect x=296 y=195 width=595 height=2.05 fill=url(#a3) /><rect x=296 y=197 width=595 height=2.05 fill=url(#a4) /><rect x=296 y=199 width=595 height=2.05 fill=url(#a5) /><rect x=296 y=201 width=595 height=2.05 fill=url(#a6) /><rect x=296 y=203 width=595 height=2.05 fill=url(#a7) /><rect x=296 y=205 width=595 height=2.05 fill=url(#a8) /><rect x=296 y=207 width=595 height=2.05 fill=url(#a9) /><rect x=296 y=209 width=595 height=2.05 fill=url(#a10) /><rect x=296 y=211 width=595 height=2.05 fill=url(#a11) /><rect x=296 y=213 width=595 height=2.05 fill=url(#a12) /><rect x=296 y=215 width=595 height=2.05 fill=url(#a13) /><rect x=296 y=217 width=595 height=2.05 fill=url(#a14) /><rect x=296 y=219 width=595 height=2.05 fill=url(#a15) /><rect x=296 y=221 width=595 height=2.05 fill=url(#a16) /><rect x=296 y=223 width=595 height=2.05 fill=url(#a17) /><rect x=296 y=225 width=595 height=2.05 fill=url(#a18) /><rect x=296 y=227 width=595 height=2.05 fill=url(#a19) /><rect x=296 y=229 width=595 height=2.05 fill=url(#a20) /><rect x=296 y=231 width=595 height=2.05 fill=url(#a21) /><rect x=296 y=233 width=595 height=2.05 fill=url(#a22) /><rect x=296 y=235 width=595 height=2.05 fill=url(#a23) /><rect x=296 y=237 width=595 height=2.05 fill=url(#a24) /><rect x=296 y=239 width=595 height=2.05 fill=url(#a25) /><rect x=296 y=241 width=595 height=2.05 fill=url(#a26) /><rect x=296 y=243 width=595 height=2.05 fill=url(#a27) /><rect x=296 y=245 width=595 height=2.05 fill=url(#a28) /><rect x=296 y=247 width=595 height=2.05 fill=url(#a29) /><rect x=296 y=249 width=595 height=2.05 fill=url(#a30) /><rect x=296 y=251 width=595 height=2.05 fill=url(#a31) /><rect x=296 y=253 width=595 height=2.05 fill=url(#a32) /><rect x=296 y=255 width=595 height=2.05 fill=url(#a33) /><rect x=296 y=257 width=595 height=2.05 fill=url(#a34) /><rect x=296 y=259 width=595 height=2.05 fill=url(#a35) /><rect x=296 y=261 width=595 height=2.05 fill=url(#a36) /><rect x=296 y=263 width=595 height=2.05 fill=url(#a37) /><rect x=296 y=265 width=595 height=2.05 fill=url(#a38) /><rect x=296 y=267 width=595 height=2.05 fill=url(#a39) /><rect x=296 y=269 width=595 height=2.05 fill=url(#a40) /><rect x=296 y=271 width=595 height=2.05 fill=url(#a41) /><rect x=296 y=273 width=595 height=2.05 fill=url(#a42) /><rect x=296 y=275 width=595 height=2.05 fill=url(#a43) /><rect x=296 y=277 width=595 height=2.05 fill=url(#a44) /><rect x=296 y=279 width=595 height=2.05 fill=url(#a45) /><rect x=296 y=281 width=595 height=2.05 fill=url(#a46) /><rect x=296 y=283 width=595 height=2.05 fill=url(#a47) /><rect x=296 y=285 width=595 height=2.05 fill=url(#a48) /><rect x=296 y=287 width=595 height=2.05 fill=url(#a49) /><rect x=296 y=289 width=595 height=2.05 fill=url(#a50) /><rect x=296 y=291 width=595 height=2.05 fill=url(#a51) /><rect x=296 y=293 width=595 height=2.05 fill=url(#a52) /><rect x=296 y=295 width=595 height=2.05 fill=url(#a53) /><rect x=296 y=297 width=595 height=2.05 fill=url(#a54) /><rect x=296 y=299 width=595 height=2.05 fill=url(#a55) /><rect x=296 y=301 width=595 height=2.05 fill=url(#a56) /><rect x=296 y=303 width=595 height=2.05 fill=url(#a57) /><rect x=296 y=305 width=595 height=2.05 fill=url(#a58) /><rect x=296 y=307 width=595 height=2.05 fill=url(#a59) /><rect x=296 y=309 width=595 height=2.05 fill=url(#a60) /><rect x=296 y=311 width=595 height=2.05 fill=url(#a61) /><rect x=296 y=313 width=595 height=2.05 fill=url(#a62) /><rect x=296 y=315 width=595 height=2.05 fill=url(#a63) /><rect x=296 y=317 width=595 height=2.05 fill=url(#a64) /><rect x=296 y=319 width=595 height=2.05 fill=url(#a65) /><rect x=296 y=321 width=595 height=2.05 fill=url(#a66) /><rect x=296 y=323 width=595 height=2.05 fill=url(#a67) /><rect x=296 y=325 width=595 height=2.05 fill=url(#a68) /><rect x=296 y=327 width=595 height=2.05 fill=url(#a69) /><rect x=296 y=329 width=595 height=2.05 fill=url(#a70) /><rect x=296 y=331 width=595 height=2.05 fill=url(#a71) /><rect x=296 y=333 width=595 height=2.05 fill=url(#a72) /><rect x=296 y=335 width=595 height=2.05 fill=url(#a73) /><rect x=296 y=337 width=595 height=2.05 fill=url(#a74) /><rect x=296 y=339 width=595 height=2.05 fill=url(#a75) /><rect x=296 y=341 width=595 height=2.05 fill=url(#a76) /><rect x=296 y=343 width=595 height=2.05 fill=url(#a77) /><rect x=296 y=345 width=595 height=2.05 fill=url(#a78) /><rect x=296 y=347 width=595 height=2.05 fill=url(#a79) /><rect x=296 y=349 width=595 height=2.05 fill=url(#a80) /><rect x=296 y=351 width=595 height=2.05 fill=url(#a81) /><rect x=296 y=353 width=595 height=2.05 fill=url(#a82) /><rect x=296 y=355 width=595 height=2.05 fill=url(#a83) /><rect x=296 y=357 width=595 height=2.05 fill=url(#a84) /><rect x=296 y=359 width=595 height=2.05 fill=url(#a85) /><rect x=296 y=361 width=595 height=2.05 fill=url(#a86) /><rect x=296 y=363 width=595 height=2.05 fill=url(#a87) /><rect x=296 y=365 width=595 height=1.05 fill=url(#a88) />
<rect x=296 y=430 width=595 height=2.05 fill=url(#b0) /><rect x=296 y=432 width=595 height=2.05 fill=url(#b1) /><rect x=296 y=434 width=595 height=2.05 fill=url(#b2) /><rect x=296 y=436 width=595 height=2.05 fill=url(#b3) /><rect x=296 y=438 width=595 height=2.05 fill=url(#b4) /><rect x=296 y=440 width=595 height=2.05 fill=url(#b5) /><rect x=296 y=442 width=595 height=2.05 fill=url(#b6) /><rect x=296 y=444 width=595 height=2.05 fill=url(#b7) /><rect x=296 y=446 width=595 height=2.05 fill=url(#b8) /><rect x=296 y=448 width=595 height=2.05 fill=url(#b9) /><rect x=296 y=450 width=595 height=2.05 fill=url(#b10) /><rect x=296 y=452 width=595 height=2.05 fill=url(#b11) /><rect x=296 y=454 width=595 height=2.05 fill=url(#b12) /><rect x=296 y=456 width=595 height=2.05 fill=url(#b13) /><rect x=296 y=458 width=595 height=2.05 fill=url(#b14) /><rect x=296 y=460 width=595 height=2.05 fill=url(#b15) /><rect x=296 y=462 width=595 height=2.05 fill=url(#b16) /><rect x=296 y=464 width=595 height=2.05 fill=url(#b17) /><rect x=296 y=466 width=595 height=2.05 fill=url(#b18) /><rect x=296 y=468 width=595 height=2.05 fill=url(#b19) /><rect x=296 y=470 width=595 height=2.05 fill=url(#b20) /><rect x=296 y=472 width=595 height=2.05 fill=url(#b21) /><rect x=296 y=474 width=595 height=2.05 fill=url(#b22) /><rect x=296 y=476 width=595 height=2.05 fill=url(#b23) /><rect x=296 y=478 width=595 height=2.05 fill=url(#b24) /><rect x=296 y=480 width=595 height=2.05 fill=url(#b25) /><rect x=296 y=482 width=595 height=2.05 fill=url(#b26) /><rect x=296 y=484 width=595 height=2.05 fill=url(#b27) /><rect x=296 y=486 width=595 height=2.05 fill=url(#b28) /><rect x=296 y=488 width=595 height=2.05 fill=url(#b29) /><rect x=296 y=490 width=595 height=2.05 fill=url(#b30) /><rect x=296 y=492 width=595 height=2.05 fill=url(#b31) /><rect x=296 y=494 width=595 height=2.05 fill=url(#b32) /><rect x=296 y=496 width=595 height=2.05 fill=url(#b33) /><rect x=296 y=498 width=595 height=2.05 fill=url(#b34) /><rect x=296 y=500 width=595 height=2.05 fill=url(#b35) /><rect x=296 y=502 width=595 height=2.05 fill=url(#b36) /><rect x=296 y=504 width=595 height=2.05 fill=url(#b37) /><rect x=296 y=506 width=595 height=2.05 fill=url(#b38) /><rect x=296 y=508 width=595 height=2.05 fill=url(#b39) /><rect x=296 y=510 width=595 height=2.05 fill=url(#b40) /><rect x=296 y=512 width=595 height=2.05 fill=url(#b41) /><rect x=296 y=514 width=595 height=2.05 fill=url(#b42) /><rect x=296 y=516 width=595 height=2.05 fill=url(#b43) /><rect x=296 y=518 width=595 height=2.05 fill=url(#b44) /><rect x=296 y=520 width=595 height=2.05 fill=url(#b45) /><rect x=296 y=522 width=595 height=2.05 fill=url(#b46) /><rect x=296 y=524 width=595 height=2.05 fill=url(#b47) /><rect x=296 y=526 width=595 height=2.05 fill=url(#b48) /><rect x=296 y=528 width=595 height=2.05 fill=url(#b49) /><rect x=296 y=530 width=595 height=2.05 fill=url(#b50) /><rect x=296 y=532 width=595 height=2.05 fill=url(#b51) /><rect x=296 y=534 width=595 height=2.05 fill=url(#b52) /><rect x=296 y=536 width=595 height=2.05 fill=url(#b53) /><rect x=296 y=538 width=595 height=2.05 fill=url(#b54) /><rect x=296 y=540 width=595 height=2.05 fill=url(#b55) /><rect x=296 y=542 width=595 height=2.05 fill=url(#b56) /><rect x=296 y=544 width=595 height=2.05 fill=url(#b57) /><rect x=296 y=546 width=595 height=2.05 fill=url(#b58) /><rect x=296 y=548 width=595 height=2.05 fill=url(#b59) /><rect x=296 y=550 width=595 height=2.05 fill=url(#b60) /><rect x=296 y=552 width=595 height=2.05 fill=url(#b61) /><rect x=296 y=554 width=595 height=2.05 fill=url(#b62) /><rect x=296 y=556 width=595 height=2.05 fill=url(#b63) /><rect x=296 y=558 width=595 height=2.05 fill=url(#b64) /><rect x=296 y=560 width=595 height=2.05 fill=url(#b65) /><rect x=296 y=562 width=595 height=2.05 fill=url(#b66) /><rect x=296 y=564 width=595 height=2.05 fill=url(#b67) /><rect x=296 y=566 width=595 height=2.05 fill=url(#b68) /><rect x=296 y=568 width=595 height=2.05 fill=url(#b69) /><rect x=296 y=570 width=595 height=2.05 fill=url(#b70) /><rect x=296 y=572 width=595 height=2.05 fill=url(#b71) /><rect x=296 y=574 width=595 height=2.05 fill=url(#b72) /><rect x=296 y=576 width=595 height=2.05 fill=url(#b73) /><rect x=296 y=578 width=595 height=2.05 fill=url(#b74) /><rect x=296 y=580 width=595 height=2.05 fill=url(#b75) /><rect x=296 y=582 width=595 height=2.05 fill=url(#b76) /><rect x=296 y=584 width=595 height=2.05 fill=url(#b77) /><rect x=296 y=586 width=595 height=2.05 fill=url(#b78) /><rect x=296 y=588 width=595 height=2.05 fill=url(#b79) /><rect x=296 y=590 width=595 height=2.05 fill=url(#b80) /><rect x=296 y=592 width=595 height=2.05 fill=url(#b81) /><rect x=296 y=594 width=595 height=2.05 fill=url(#b82) /><rect x=296 y=596 width=595 height=2.05 fill=url(#b83) /><rect x=296 y=598 width=595 height=2.05 fill=url(#b84) /><rect x=296 y=600 width=595 height=2.05 fill=url(#b85) /><rect x=296 y=602 width=595 height=2.05 fill=url(#b86) /><rect x=296 y=604 width=595 height=2.05 fill=url(#b87) /><rect x=296 y=606 width=595 height=2.05 fill=url(#b88) /><rect x=296 y=608 width=595 height=2.05 fill=url(#b89) /><rect x=296 y=610 width=595 height=2.05 fill=url(#b90) /><rect x=296 y=612 width=595 height=2.05 fill=url(#b91) /><rect x=296 y=614 width=595 height=2.05 fill=url(#b92) /><rect x=296 y=616 width=595 height=2.05 fill=url(#b93) /><rect x=296 y=618 width=595 height=2.05 fill=url(#b94) /><rect x=296 y=620 width=595 height=2.05 fill=url(#b95) /><rect x=296 y=622 width=595 height=2.05 fill=url(#b96) />
<path d="M296.47 189.00 L296.95 189.00 L297.43 189.00 L297.91 195.37 L298.39 201.85 L298.88 207.33 L299.36 212.08 L299.84 216.27 L300.32 220.02 L300.80 223.41 L301.28 226.50 L301.77 229.35 L302.25 231.99 L302.73 234.44 L303.21 236.74 L303.69 238.90 L304.17 240.93 L304.66 242.86 L305.14 244.68 L305.62 246.42 L306.10 248.07 L306.58 249.66 L307.06 251.17 L307.55 252.62 L308.03 254.02 L308.51 255.36 L308.99 256.66 L309.47 257.91 L309.95 259.12 L310.44 260.28 L310.92 261.41 L311.40 262.51 L311.88 263.57 L312.36 264.60 L312.84 265.61 L313.32 266.58 L313.81 267.53 L314.29 268.46 L314.77 269.36 L315.25 270.24 L315.73 271.09 L316.21 271.93 L316.70 272.75 L317.18 273.55 L317.66 274.33 L318.14 275.10 L318.62 275.85 L319.10 276.58 L319.59 277.30 L320.07 278.01 L320.55 278.70 L321.03 279.38 L321.51 280.04 L321.99 280.70 L322.48 281.34 L322.96 281.97 L323.44 282.59 L323.92 283.20 L324.40 283.79 L324.88 284.38 L325.37 284.96 L325.85 285.53 L326.33 286.09 L326.81 286.64 L327.29 287.19 L327.77 287.72 L328.25 288.25 L328.74 288.77 L329.22 289.28 L329.70 289.79 L330.18 290.29 L330.66 290.78 L331.14 291.26 L331.63 291.74 L332.11 292.21 L332.59 292.68 L333.07 293.14 L333.55 293.59 L334.03 294.04 L334.52 294.48 L335.00 294.92 L335.48 295.35 L335.96 295.77 L336.44 296.20 L336.92 296.61 L337.41 297.02 L337.89 297.43 L338.37 297.83 L338.85 298.23 L339.33 298.62 L339.81 299.01 L340.30 299.40 L340.78 299.78 L341.26 300.16 L341.74 300.53 L342.22 300.90 L342.70 301.26 L343.19 301.62 L343.67 301.98 L344.15 302.34 L344.63 302.69 L345.11 303.04 L345.59 303.38 L346.07 303.72 L346.56 304.06 L347.04 304.39 L347.52 304.72 L348.00 305.05 L348.48 305.38 L348.96 305.70 L349.45 306.02 L349.93 306.33 L350.41 306.65 L350.89 306.96 L351.37 307.27 L351.85 307.57 L352.34 307.88 L352.82 308.18 L353.30 308.47 L353.78 308.77 L354.26 309.06 L354.74 309.35 L355.23 309.64 L355.71 309.93 L356.19 310.21 L356.67 310.49 L357.15 310.77 L357.63 311.05 L358.12 311.33 L358.60 311.60 L359.08 311.87 L359.56 312.14 L360.04 312.40 L360.52 312.67 L361.00 312.93 L361.49 313.19 L361.97 313.45 L362.45 313.71 L362.93 313.96 L363.41 314.22 L363.89 314.47 L364.38 314.72 L364.86 314.97 L365.34 315.21 L365.82 315.46 L366.30 315.70 L366.78 315.94 L367.27 316.18 L367.75 316.42 L368.23 316.66 L368.71 316.89 L369.19 317.13 L369.67 317.36 L370.16 317.59 L370.64 317.82 L371.12 318.05 L371.60 318.27 L372.08 318.50 L372.56 318.72 L373.05 318.94 L373.53 319.16 L374.01 319.38 L374.49 319.60 L374.97 319.81 L375.45 320.03 L375.94 320.24 L376.42 320.46 L376.90 320.67 L377.38 320.88 L377.86 321.09 L378.34 321.29 L378.82 321.50 L379.31 321.71 L379.79 321.91 L380.27 322.11 L380.75 322.31 L381.23 322.52 L381.71 322.72 L382.20 322.91 L382.68 323.11 L383.16 323.31 L383.64 323.50 L384.12 323.70 L384.60 323.89 L385.09 324.08 L385.57 324.27 L386.05 324.46 L386.53 324.65 L387.01 324.84 L387.49 325.03 L387.98 325.21 L388.46 325.40 L388.94 325.58 L389.42 325.76 L389.90 325.95 L390.38 326.13 L390.87 326.31 L391.35 326.49 L391.83 326.67 L392.31 326.84 L392.31 326.84 L400.51 329.74 L408.71 332.42 L416.91 334.91 L425.11 337.23 L433.31 339.42 L441.51 341.48 L449.70 343.42 L457.90 345.27 L466.10 347.02 L474.30 348.69 L482.50 350.29 L490.70 351.82 L498.90 353.28 L507.10 354.69 L515.30 356.04 L523.50 357.35 L531.70 358.61 L539.90 359.82 L548.10 361.00 L556.29 362.13 L564.49 363.24 L572.69 364.31 L580.89 365.34 L589.09 366.00 L597.29 366.00 L605.49 365.34 L613.69 364.31 L621.89 363.24 L630.09 362.13 L638.29 361.00 L646.49 359.82 L654.68 358.61 L662.88 357.35 L671.08 356.04 L679.28 354.69 L687.48 353.28 L695.68 351.82 L703.88 350.29 L712.08 348.69 L720.28 347.02 L728.48 345.27 L736.68 343.42 L744.88 341.48 L753.08 339.42 L761.27 337.23 L769.47 334.91 L777.67 332.42 L785.87 329.74 L794.07 326.84 L794.07 326.84 L794.55 326.67 L795.03 326.49 L795.52 326.31 L796.00 326.13 L796.48 325.95 L796.96 325.76 L797.44 325.58 L797.92 325.40 L798.41 325.21 L798.89 325.03 L799.37 324.84 L799.85 324.65 L800.33 324.46 L800.81 324.27 L801.30 324.08 L801.78 323.89 L802.26 323.70 L802.74 323.50 L803.22 323.31 L803.70 323.11 L804.19 322.91 L804.67 322.72 L805.15 322.52 L805.63 322.31 L806.11 322.11 L806.59 321.91 L807.08 321.71 L807.56 321.50 L808.04 321.29 L808.52 321.09 L809.00 320.88 L809.48 320.67 L809.96 320.46 L810.45 320.24 L810.93 320.03 L811.41 319.81 L811.89 319.60 L812.37 319.38 L812.85 319.16 L813.34 318.94 L813.82 318.72 L814.30 318.50 L814.78 318.27 L815.26 318.05 L815.74 317.82 L816.23 317.59 L816.71 317.36 L817.19 317.13 L817.67 316.89 L818.15 316.66 L818.63 316.42 L819.12 316.18 L819.60 315.94 L820.08 315.70 L820.56 315.46 L821.04 315.21 L821.52 314.97 L822.01 314.72 L822.49 314.47 L822.97 314.22 L823.45 313.96 L823.93 313.71 L824.41 313.45 L824.90 313.19 L825.38 312.93 L825.86 312.67 L826.34 312.40 L826.82 312.14 L827.30 311.87 L827.78 311.60 L828.27 311.33 L828.75 311.05 L829.23 310.77 L829.71 310.49 L830.19 310.21 L830.67 309.93 L831.16 309.64 L831.64 309.35 L832.12 309.06 L832.60 308.77 L833.08 308.47 L833.56 308.18 L834.05 307.88 L834.53 307.57 L835.01 307.27 L835.49 306.96 L835.97 306.65 L836.45 306.33 L836.94 306.02 L837.42 305.70 L837.90 305.38 L838.38 305.05 L838.86 304.72 L839.34 304.39 L839.83 304.06 L840.31 303.72 L840.79 303.38 L841.27 303.04 L841.75 302.69 L842.23 302.34 L842.71 301.98 L843.20 301.62 L843.68 301.26 L844.16 300.90 L844.64 300.53 L845.12 300.16 L845.60 299.78 L846.09 299.40 L846.57 299.01 L847.05 298.62 L847.53 298.23 L848.01 297.83 L848.49 297.43 L848.98 297.02 L849.46 296.61 L849.94 296.20 L850.42 295.77 L850.90 295.35 L851.38 294.92 L851.87 294.48 L852.35 294.04 L852.83 293.59 L853.31 293.14 L853.79 292.68 L854.27 292.21 L854.76 291.74 L855.24 291.26 L855.72 290.78 L856.20 290.29 L856.68 289.79 L857.16 289.28 L857.65 288.77 L858.13 288.25 L858.61 287.72 L859.09 287.19 L859.57 286.64 L860.05 286.09 L860.53 285.53 L861.02 284.96 L861.50 284.38 L861.98 283.79 L862.46 283.20 L862.94 282.59 L863.42 281.97 L863.91 281.34 L864.39 280.70 L864.87 280.04 L865.35 279.38 L865.83 278.70 L866.31 278.01 L866.80 277.30 L867.28 276.58 L867.76 275.85 L868.24 275.10 L868.72 274.33 L869.20 273.55 L869.69 272.75 L870.17 271.93 L870.65 271.09 L871.13 270.24 L871.61 269.36 L872.09 268.46 L872.58 267.53 L873.06 266.58 L873.54 265.61 L874.02 264.60 L874.50 263.57 L874.98 262.51 L875.46 261.41 L875.95 260.28 L876.43 259.12 L876.91 257.91 L877.39 256.66 L877.87 255.36 L878.35 254.02 L878.84 252.62 L879.32 251.17 L879.80 249.66 L880.28 248.07 L880.76 246.42 L881.24 244.68 L881.73 242.86 L882.21 240.93 L882.69 238.90 L883.17 236.74 L883.65 234.44 L884.13 231.99 L884.62 229.35 L885.10 226.50 L885.58 223.41 L886.06 220.02 L886.54 216.27 L887.02 212.08 L887.51 207.33 L887.99 201.85 L888.47 195.37 L888.95 189.00 L889.43 189.00 L889.91 189.00 L891.0 366 L296.0 366 Z" fill="#fff" fill-opacity="0.3"/>
<path d="M296.47 189.00 L296.95 189.00 L297.43 189.00 L297.91 195.37 L298.39 201.85 L298.88 207.33 L299.36 212.08 L299.84 216.27 L300.32 220.02 L300.80 223.41 L301.28 226.50 L301.77 229.35 L302.25 231.99 L302.73 234.44 L303.21 236.74 L303.69 238.90 L304.17 240.93 L304.66 242.86 L305.14 244.68 L305.62 246.42 L306.10 248.07 L306.58 249.66 L307.06 251.17 L307.55 252.62 L308.03 254.02 L308.51 255.36 L308.99 256.66 L309.47 257.91 L309.95 259.12 L310.44 260.28 L310.92 261.41 L311.40 262.51 L311.88 263.57 L312.36 264.60 L312.84 265.61 L313.32 266.58 L313.81 267.53 L314.29 268.46 L314.77 269.36 L315.25 270.24 L315.73 271.09 L316.21 271.93 L316.70 272.75 L317.18 273.55 L317.66 274.33 L318.14 275.10 L318.62 275.85 L319.10 276.58 L319.59 277.30 L320.07 278.01 L320.55 278.70 L321.03 279.38 L321.51 280.04 L321.99 280.70 L322.48 281.34 L322.96 281.97 L323.44 282.59 L323.92 283.20 L324.40 283.79 L324.88 284.38 L325.37 284.96 L325.85 285.53 L326.33 286.09 L326.81 286.64 L327.29 287.19 L327.77 287.72 L328.25 288.25 L328.74 288.77 L329.22 289.28 L329.70 289.79 L330.18 290.29 L330.66 290.78 L331.14 291.26 L331.63 291.74 L332.11 292.21 L332.59 292.68 L333.07 293.14 L333.55 293.59 L334.03 294.04 L334.52 294.48 L335.00 294.92 L335.48 295.35 L335.96 295.77 L336.44 296.20 L336.92 296.61 L337.41 297.02 L337.89 297.43 L338.37 297.83 L338.85 298.23 L339.33 298.62 L339.81 299.01 L340.30 299.40 L340.78 299.78 L341.26 300.16 L341.74 300.53 L342.22 300.90 L342.70 301.26 L343.19 301.62 L343.67 301.98 L344.15 302.34 L344.63 302.69 L345.11 303.04 L345.59 303.38 L346.07 303.72 L346.56 304.06 L347.04 304.39 L347.52 304.72 L348.00 305.05 L348.48 305.38 L348.96 305.70 L349.45 306.02 L349.93 306.33 L350.41 306.65 L350.89 306.96 L351.37 307.27 L351.85 307.57 L352.34 307.88 L352.82 308.18 L353.30 308.47 L353.78 308.77 L354.26 309.06 L354.74 309.35 L355.23 309.64 L355.71 309.93 L356.19 310.21 L356.67 310.49 L357.15 310.77 L357.63 311.05 L358.12 311.33 L358.60 311.60 L359.08 311.87 L359.56 312.14 L360.04 312.40 L360.52 312.67 L361.00 312.93 L361.49 313.19 L361.97 313.45 L362.45 313.71 L362.93 313.96 L363.41 314.22 L363.89 314.47 L364.38 314.72 L364.86 314.97 L365.34 315.21 L365.82 315.46 L366.30 315.70 L366.78 315.94 L367.27 316.18 L367.75 316.42 L368.23 316.66 L368.71 316.89 L369.19 317.13 L369.67 317.36 L370.16 317.59 L370.64 317.82 L371.12 318.05 L371.60 318.27 L372.08 318.50 L372.56 318.72 L373.05 318.94 L373.53 319.16 L374.01 319.38 L374.49 319.60 L374.97 319.81 L375.45 320.03 L375.94 320.24 L376.42 320.46 L376.90 320.67 L377.38 320.88 L377.86 321.09 L378.34 321.29 L378.82 321.50 L379.31 321.71 L379.79 321.91 L380.27 322.11 L380.75 322.31 L381.23 322.52 L381.71 322.72 L382.20 322.91 L382.68 323.11 L383.16 323.31 L383.64 323.50 L384.12 323.70 L384.60 323.89 L385.09 324.08 L385.57 324.27 L386.05 324.46 L386.53 324.65 L387.01 324.84 L387.49 325.03 L387.98 325.21 L388.46 325.40 L388.94 325.58 L389.42 325.76 L389.90 325.95 L390.38 326.13 L390.87 326.31 L391.35 326.49 L391.83 326.67 L392.31 326.84 L392.31 326.84 L400.51 329.74 L408.71 332.42 L416.91 334.91 L425.11 337.23 L433.31 339.42 L441.51 341.48 L449.70 343.42 L457.90 345.27 L466.10 347.02 L474.30 348.69 L482.50 350.29 L490.70 351.82 L498.90 353.28 L507.10 354.69 L515.30 356.04 L523.50 357.35 L531.70 358.61 L539.90 359.82 L548.10 361.00 L556.29 362.13 L564.49 363.24 L572.69 364.31 L580.89 365.34 L589.09 366.00 L597.29 366.00 L605.49 365.34 L613.69 364.31 L621.89 363.24 L630.09 362.13 L638.29 361.00 L646.49 359.82 L654.68 358.61 L662.88 357.35 L671.08 356.04 L679.28 354.69 L687.48 353.28 L695.68 351.82 L703.88 350.29 L712.08 348.69 L720.28 347.02 L728.48 345.27 L736.68 343.42 L744.88 341.48 L753.08 339.42 L761.27 337.23 L769.47 334.91 L777.67 332.42 L785.87 329.74 L794.07 326.84 L794.07 326.84 L794.55 326.67 L795.03 326.49 L795.52 326.31 L796.00 326.13 L796.48 325.95 L796.96 325.76 L797.44 325.58 L797.92 325.40 L798.41 325.21 L798.89 325.03 L799.37 324.84 L799.85 324.65 L800.33 324.46 L800.81 324.27 L801.30 324.08 L801.78 323.89 L802.26 323.70 L802.74 323.50 L803.22 323.31 L803.70 323.11 L804.19 322.91 L804.67 322.72 L805.15 322.52 L805.63 322.31 L806.11 322.11 L806.59 321.91 L807.08 321.71 L807.56 321.50 L808.04 321.29 L808.52 321.09 L809.00 320.88 L809.48 320.67 L809.96 320.46 L810.45 320.24 L810.93 320.03 L811.41 319.81 L811.89 319.60 L812.37 319.38 L812.85 319.16 L813.34 318.94 L813.82 318.72 L814.30 318.50 L814.78 318.27 L815.26 318.05 L815.74 317.82 L816.23 317.59 L816.71 317.36 L817.19 317.13 L817.67 316.89 L818.15 316.66 L818.63 316.42 L819.12 316.18 L819.60 315.94 L820.08 315.70 L820.56 315.46 L821.04 315.21 L821.52 314.97 L822.01 314.72 L822.49 314.47 L822.97 314.22 L823.45 313.96 L823.93 313.71 L824.41 313.45 L824.90 313.19 L825.38 312.93 L825.86 312.67 L826.34 312.40 L826.82 312.14 L827.30 311.87 L827.78 311.60 L828.27 311.33 L828.75 311.05 L829.23 310.77 L829.71 310.49 L830.19 310.21 L830.67 309.93 L831.16 309.64 L831.64 309.35 L832.12 309.06 L832.60 308.77 L833.08 308.47 L833.56 308.18 L834.05 307.88 L834.53 307.57 L835.01 307.27 L835.49 306.96 L835.97 306.65 L836.45 306.33 L836.94 306.02 L837.42 305.70 L837.90 305.38 L838.38 305.05 L838.86 304.72 L839.34 304.39 L839.83 304.06 L840.31 303.72 L840.79 303.38 L841.27 303.04 L841.75 302.69 L842.23 302.34 L842.71 301.98 L843.20 301.62 L843.68 301.26 L844.16 300.90 L844.64 300.53 L845.12 300.16 L845.60 299.78 L846.09 299.40 L846.57 299.01 L847.05 298.62 L847.53 298.23 L848.01 297.83 L848.49 297.43 L848.98 297.02 L849.46 296.61 L849.94 296.20 L850.42 295.77 L850.90 295.35 L851.38 294.92 L851.87 294.48 L852.35 294.04 L852.83 293.59 L853.31 293.14 L853.79 292.68 L854.27 292.21 L854.76 291.74 L855.24 291.26 L855.72 290.78 L856.20 290.29 L856.68 289.79 L857.16 289.28 L857.65 288.77 L858.13 288.25 L858.61 287.72 L859.09 287.19 L859.57 286.64 L860.05 286.09 L860.53 285.53 L861.02 284.96 L861.50 284.38 L861.98 283.79 L862.46 283.20 L862.94 282.59 L863.42 281.97 L863.91 281.34 L864.39 280.70 L864.87 280.04 L865.35 279.38 L865.83 278.70 L866.31 278.01 L866.80 277.30 L867.28 276.58 L867.76 275.85 L868.24 275.10 L868.72 274.33 L869.20 273.55 L869.69 272.75 L870.17 271.93 L870.65 271.09 L871.13 270.24 L871.61 269.36 L872.09 268.46 L872.58 267.53 L873.06 266.58 L873.54 265.61 L874.02 264.60 L874.50 263.57 L874.98 262.51 L875.46 261.41 L875.95 260.28 L876.43 259.12 L876.91 257.91 L877.39 256.66 L877.87 255.36 L878.35 254.02 L878.84 252.62 L879.32 251.17 L879.80 249.66 L880.28 248.07 L880.76 246.42 L881.24 244.68 L881.73 242.86 L882.21 240.93 L882.69 238.90 L883.17 236.74 L883.65 234.44 L884.13 231.99 L884.62 229.35 L885.10 226.50 L885.58 223.41 L886.06 220.02 L886.54 216.27 L887.02 212.08 L887.51 207.33 L887.99 201.85 L888.47 195.37 L888.95 189.00 L889.43 189.00 L889.91 189.00" fill="none" stroke="#fff" stroke-width="2.8" stroke-dasharray="11.5 10.3" stroke-dashoffset="-21.31"/>
<rect x="295" y="189" width="1" height="178" fill="#262626"/>
<rect x="295" y="366" width="596.0" height="1" fill="#262626"/>
<rect x="295" y="361" width="1" height="5" fill="#262626"/>
<rect x="360" y="361" width="1" height="5" fill="#262626"/>
<rect x="424" y="361" width="1" height="5" fill="#262626"/>
<rect x="489" y="361" width="1" height="5" fill="#262626"/>
<rect x="553" y="361" width="1" height="5" fill="#262626"/>
<rect x="618" y="361" width="1" height="5" fill="#262626"/>
<rect x="682" y="361" width="1" height="5" fill="#262626"/>
<rect x="747" y="361" width="1" height="5" fill="#262626"/>
<rect x="811" y="361" width="1" height="5" fill="#262626"/>
<rect x="876" y="361" width="1" height="5" fill="#262626"/>
<rect x="296" y="353" width="2" height="1" fill="#262626"/>
<rect x="296" y="342" width="2" height="1" fill="#262626"/>
<rect x="296" y="334" width="2" height="1" fill="#262626"/>
<rect x="296" y="328" width="2" height="1" fill="#262626"/>
<rect x="296" y="322" width="2" height="1" fill="#262626"/>
<rect x="296" y="318" width="2" height="1" fill="#262626"/>
<rect x="296" y="313" width="2" height="1" fill="#262626"/>
<rect x="296" y="310" width="5" height="1" fill="#262626"/>
<rect x="296" y="285" width="2" height="1" fill="#262626"/>
<rect x="296" y="271" width="2" height="1" fill="#262626"/>
<rect x="296" y="260" width="2" height="1" fill="#262626"/>
<rect x="296" y="252" width="2" height="1" fill="#262626"/>
<rect x="296" y="246" width="2" height="1" fill="#262626"/>
<rect x="296" y="240" width="2" height="1" fill="#262626"/>
<rect x="296" y="236" width="2" height="1" fill="#262626"/>
<rect x="296" y="231" width="2" height="1" fill="#262626"/>
<rect x="296" y="228" width="5" height="1" fill="#262626"/>
<rect x="296" y="203" width="2" height="1" fill="#262626"/>
<rect x="296" y="189" width="2" height="1" fill="#262626"/>
<path d="M296.47 430.00 L296.95 430.00 L297.43 430.00 L297.91 437.40 L298.39 444.47 L298.88 450.45 L299.36 455.62 L299.84 460.19 L300.32 464.28 L300.80 467.97 L301.28 471.35 L301.77 474.45 L302.25 477.33 L302.73 480.01 L303.21 482.51 L303.69 484.86 L304.17 487.08 L304.66 489.18 L305.14 491.17 L305.62 493.06 L306.10 494.87 L306.58 496.59 L307.06 498.24 L307.55 499.83 L308.03 501.35 L308.51 502.82 L308.99 504.23 L309.47 505.59 L309.95 506.90 L310.44 508.18 L310.92 509.41 L311.40 510.60 L311.88 511.76 L312.36 512.89 L312.84 513.98 L313.32 515.05 L313.81 516.08 L314.29 517.09 L314.77 518.07 L315.25 519.03 L315.73 519.97 L316.21 520.88 L316.70 521.77 L317.18 522.64 L317.66 523.50 L318.14 524.33 L318.62 525.15 L319.10 525.95 L319.59 526.73 L320.07 527.50 L320.55 528.26 L321.03 528.99 L321.51 529.72 L321.99 530.43 L322.48 531.13 L322.96 531.82 L323.44 532.49 L323.92 533.16 L324.40 533.81 L324.88 534.45 L325.37 535.08 L325.85 535.70 L326.33 536.32 L326.81 536.92 L327.29 537.51 L327.77 538.09 L328.25 538.67 L328.74 539.24 L329.22 539.79 L329.70 540.35 L330.18 540.89 L330.66 541.42 L331.14 541.95 L331.63 542.47 L332.11 542.99 L332.59 543.49 L333.07 544.00 L333.55 544.49 L334.03 544.98 L334.52 545.46 L335.00 545.94 L335.48 546.41 L335.96 546.87 L336.44 547.33 L336.92 547.79 L337.41 548.23 L337.89 548.68 L338.37 549.12 L338.85 549.55 L339.33 549.98 L339.81 550.40 L340.30 550.82 L340.78 551.24 L341.26 551.65 L341.74 552.06 L342.22 552.46 L342.70 552.86 L343.19 553.25 L343.67 553.64 L344.15 554.03 L344.63 554.41 L345.11 554.79 L345.59 555.16 L346.07 555.54 L346.56 555.90 L347.04 556.27 L347.52 556.63 L348.00 556.99 L348.48 557.34 L348.96 557.69 L349.45 558.04 L349.93 558.39 L350.41 558.73 L350.89 559.07 L351.37 559.40 L351.85 559.74 L352.34 560.07 L352.82 560.39 L353.30 560.72 L353.78 561.04 L354.26 561.36 L354.74 561.68 L355.23 561.99 L355.71 562.30 L356.19 562.61 L356.67 562.92 L357.15 563.22 L357.63 563.53 L358.12 563.83 L358.60 564.12 L359.08 564.42 L359.56 564.71 L360.04 565.00 L360.52 565.29 L361.00 565.58 L361.49 565.86 L361.97 566.15 L362.45 566.43 L362.93 566.70 L363.41 566.98 L363.89 567.25 L364.38 567.53 L364.86 567.80 L365.34 568.07 L365.82 568.33 L366.30 568.60 L366.78 568.86 L367.27 569.12 L367.75 569.38 L368.23 569.64 L368.71 569.90 L369.19 570.15 L369.67 570.40 L370.16 570.66 L370.64 570.91 L371.12 571.15 L371.60 571.40 L372.08 571.64 L372.56 571.89 L373.05 572.13 L373.53 572.37 L374.01 572.61 L374.49 572.85 L374.97 573.08 L375.45 573.32 L375.94 573.55 L376.42 573.78 L376.90 574.01 L377.38 574.24 L377.86 574.47 L378.34 574.70 L378.82 574.92 L379.31 575.14 L379.79 575.37 L380.27 575.59 L380.75 575.81 L381.23 576.03 L381.71 576.24 L382.20 576.46 L382.68 576.68 L383.16 576.89 L383.64 577.10 L384.12 577.31 L384.60 577.52 L385.09 577.73 L385.57 577.94 L386.05 578.15 L386.53 578.36 L387.01 578.56 L387.49 578.76 L387.98 578.97 L388.46 579.17 L388.94 579.37 L389.42 579.57 L389.90 579.77 L390.38 579.96 L390.87 580.16 L391.35 580.36 L391.83 580.55 L392.31 580.74 L392.31 580.74 L400.51 583.90 L408.71 586.82 L416.91 589.54 L425.11 592.07 L433.31 594.45 L441.51 596.70 L449.70 598.82 L457.90 600.83 L466.10 602.74 L474.30 604.57 L482.50 606.31 L490.70 607.97 L498.90 609.57 L507.10 611.10 L515.30 612.58 L523.50 614.00 L531.70 615.37 L539.90 616.70 L548.10 617.98 L556.29 619.22 L564.49 620.42 L572.69 621.59 L580.89 622.72 L589.09 623.82 L597.29 623.82 L605.49 622.72 L613.69 621.59 L621.89 620.42 L630.09 619.22 L638.29 617.98 L646.49 616.70 L654.68 615.37 L662.88 614.00 L671.08 612.58 L679.28 611.10 L687.48 609.57 L695.68 607.97 L703.88 606.31 L712.08 604.57 L720.28 602.74 L728.48 600.83 L736.68 598.82 L744.88 596.70 L753.08 594.45 L761.27 592.07 L769.47 589.54 L777.67 586.82 L785.87 583.90 L794.07 580.74 L794.07 580.74 L794.55 580.55 L795.03 580.36 L795.52 580.16 L796.00 579.96 L796.48 579.77 L796.96 579.57 L797.44 579.37 L797.92 579.17 L798.41 578.97 L798.89 578.76 L799.37 578.56 L799.85 578.36 L800.33 578.15 L800.81 577.94 L801.30 577.73 L801.78 577.52 L802.26 577.31 L802.74 577.10 L803.22 576.89 L803.70 576.68 L804.19 576.46 L804.67 576.24 L805.15 576.03 L805.63 575.81 L806.11 575.59 L806.59 575.37 L807.08 575.14 L807.56 574.92 L808.04 574.70 L808.52 574.47 L809.00 574.24 L809.48 574.01 L809.96 573.78 L810.45 573.55 L810.93 573.32 L811.41 573.08 L811.89 572.85 L812.37 572.61 L812.85 572.37 L813.34 572.13 L813.82 571.89 L814.30 571.64 L814.78 571.40 L815.26 571.15 L815.74 570.91 L816.23 570.66 L816.71 570.40 L817.19 570.15 L817.67 569.90 L818.15 569.64 L818.63 569.38 L819.12 569.12 L819.60 568.86 L820.08 568.60 L820.56 568.33 L821.04 568.07 L821.52 567.80 L822.01 567.53 L822.49 567.25 L822.97 566.98 L823.45 566.70 L823.93 566.43 L824.41 566.15 L824.90 565.86 L825.38 565.58 L825.86 565.29 L826.34 565.00 L826.82 564.71 L827.30 564.42 L827.78 564.12 L828.27 563.83 L828.75 563.53 L829.23 563.22 L829.71 562.92 L830.19 562.61 L830.67 562.30 L831.16 561.99 L831.64 561.68 L832.12 561.36 L832.60 561.04 L833.08 560.72 L833.56 560.39 L834.05 560.07 L834.53 559.74 L835.01 559.40 L835.49 559.07 L835.97 558.73 L836.45 558.39 L836.94 558.04 L837.42 557.69 L837.90 557.34 L838.38 556.99 L838.86 556.63 L839.34 556.27 L839.83 555.90 L840.31 555.54 L840.79 555.16 L841.27 554.79 L841.75 554.41 L842.23 554.03 L842.71 553.64 L843.20 553.25 L843.68 552.86 L844.16 552.46 L844.64 552.06 L845.12 551.65 L845.60 551.24 L846.09 550.82 L846.57 550.40 L847.05 549.98 L847.53 549.55 L848.01 549.12 L848.49 548.68 L848.98 548.23 L849.46 547.79 L849.94 547.33 L850.42 546.87 L850.90 546.41 L851.38 545.94 L851.87 545.46 L852.35 544.98 L852.83 544.49 L853.31 544.00 L853.79 543.49 L854.27 542.99 L854.76 542.47 L855.24 541.95 L855.72 541.42 L856.20 540.89 L856.68 540.35 L857.16 539.79 L857.65 539.24 L858.13 538.67 L858.61 538.09 L859.09 537.51 L859.57 536.92 L860.05 536.32 L860.53 535.70 L861.02 535.08 L861.50 534.45 L861.98 533.81 L862.46 533.16 L862.94 532.49 L863.42 531.82 L863.91 531.13 L864.39 530.43 L864.87 529.72 L865.35 528.99 L865.83 528.26 L866.31 527.50 L866.80 526.73 L867.28 525.95 L867.76 525.15 L868.24 524.33 L868.72 523.50 L869.20 522.64 L869.69 521.77 L870.17 520.88 L870.65 519.97 L871.13 519.03 L871.61 518.07 L872.09 517.09 L872.58 516.08 L873.06 515.05 L873.54 513.98 L874.02 512.89 L874.50 511.76 L874.98 510.60 L875.46 509.41 L875.95 508.18 L876.43 506.90 L876.91 505.59 L877.39 504.23 L877.87 502.82 L878.35 501.35 L878.84 499.83 L879.32 498.24 L879.80 496.59 L880.28 494.87 L880.76 493.06 L881.24 491.17 L881.73 489.18 L882.21 487.08 L882.69 484.86 L883.17 482.51 L883.65 480.01 L884.13 477.33 L884.62 474.45 L885.10 471.35 L885.58 467.97 L886.06 464.28 L886.54 460.19 L887.02 455.62 L887.51 450.45 L887.99 444.47 L888.47 437.40 L888.95 430.00 L889.43 430.00 L889.91 430.00 L891.0 624 L296.0 624 Z" fill="#fff" fill-opacity="0.3"/>
<path d="M296.47 430.00 L296.95 430.00 L297.43 430.00 L297.91 437.40 L298.39 444.47 L298.88 450.45 L299.36 455.62 L299.84 460.19 L300.32 464.28 L300.80 467.97 L301.28 471.35 L301.77 474.45 L302.25 477.33 L302.73 480.01 L303.21 482.51 L303.69 484.86 L304.17 487.08 L304.66 489.18 L305.14 491.17 L305.62 493.06 L306.10 494.87 L306.58 496.59 L307.06 498.24 L307.55 499.83 L308.03 501.35 L308.51 502.82 L308.99 504.23 L309.47 505.59 L309.95 506.90 L310.44 508.18 L310.92 509.41 L311.40 510.60 L311.88 511.76 L312.36 512.89 L312.84 513.98 L313.32 515.05 L313.81 516.08 L314.29 517.09 L314.77 518.07 L315.25 519.03 L315.73 519.97 L316.21 520.88 L316.70 521.77 L317.18 522.64 L317.66 523.50 L318.14 524.33 L318.62 525.15 L319.10 525.95 L319.59 526.73 L320.07 527.50 L320.55 528.26 L321.03 528.99 L321.51 529.72 L321.99 530.43 L322.48 531.13 L322.96 531.82 L323.44 532.49 L323.92 533.16 L324.40 533.81 L324.88 534.45 L325.37 535.08 L325.85 535.70 L326.33 536.32 L326.81 536.92 L327.29 537.51 L327.77 538.09 L328.25 538.67 L328.74 539.24 L329.22 539.79 L329.70 540.35 L330.18 540.89 L330.66 541.42 L331.14 541.95 L331.63 542.47 L332.11 542.99 L332.59 543.49 L333.07 544.00 L333.55 544.49 L334.03 544.98 L334.52 545.46 L335.00 545.94 L335.48 546.41 L335.96 546.87 L336.44 547.33 L336.92 547.79 L337.41 548.23 L337.89 548.68 L338.37 549.12 L338.85 549.55 L339.33 549.98 L339.81 550.40 L340.30 550.82 L340.78 551.24 L341.26 551.65 L341.74 552.06 L342.22 552.46 L342.70 552.86 L343.19 553.25 L343.67 553.64 L344.15 554.03 L344.63 554.41 L345.11 554.79 L345.59 555.16 L346.07 555.54 L346.56 555.90 L347.04 556.27 L347.52 556.63 L348.00 556.99 L348.48 557.34 L348.96 557.69 L349.45 558.04 L349.93 558.39 L350.41 558.73 L350.89 559.07 L351.37 559.40 L351.85 559.74 L352.34 560.07 L352.82 560.39 L353.30 560.72 L353.78 561.04 L354.26 561.36 L354.74 561.68 L355.23 561.99 L355.71 562.30 L356.19 562.61 L356.67 562.92 L357.15 563.22 L357.63 563.53 L358.12 563.83 L358.60 564.12 L359.08 564.42 L359.56 564.71 L360.04 565.00 L360.52 565.29 L361.00 565.58 L361.49 565.86 L361.97 566.15 L362.45 566.43 L362.93 566.70 L363.41 566.98 L363.89 567.25 L364.38 567.53 L364.86 567.80 L365.34 568.07 L365.82 568.33 L366.30 568.60 L366.78 568.86 L367.27 569.12 L367.75 569.38 L368.23 569.64 L368.71 569.90 L369.19 570.15 L369.67 570.40 L370.16 570.66 L370.64 570.91 L371.12 571.15 L371.60 571.40 L372.08 571.64 L372.56 571.89 L373.05 572.13 L373.53 572.37 L374.01 572.61 L374.49 572.85 L374.97 573.08 L375.45 573.32 L375.94 573.55 L376.42 573.78 L376.90 574.01 L377.38 574.24 L377.86 574.47 L378.34 574.70 L378.82 574.92 L379.31 575.14 L379.79 575.37 L380.27 575.59 L380.75 575.81 L381.23 576.03 L381.71 576.24 L382.20 576.46 L382.68 576.68 L383.16 576.89 L383.64 577.10 L384.12 577.31 L384.60 577.52 L385.09 577.73 L385.57 577.94 L386.05 578.15 L386.53 578.36 L387.01 578.56 L387.49 578.76 L387.98 578.97 L388.46 579.17 L388.94 579.37 L389.42 579.57 L389.90 579.77 L390.38 579.96 L390.87 580.16 L391.35 580.36 L391.83 580.55 L392.31 580.74 L392.31 580.74 L400.51 583.90 L408.71 586.82 L416.91 589.54 L425.11 592.07 L433.31 594.45 L441.51 596.70 L449.70 598.82 L457.90 600.83 L466.10 602.74 L474.30 604.57 L482.50 606.31 L490.70 607.97 L498.90 609.57 L507.10 611.10 L515.30 612.58 L523.50 614.00 L531.70 615.37 L539.90 616.70 L548.10 617.98 L556.29 619.22 L564.49 620.42 L572.69 621.59 L580.89 622.72 L589.09 623.82 L597.29 623.82 L605.49 622.72 L613.69 621.59 L621.89 620.42 L630.09 619.22 L638.29 617.98 L646.49 616.70 L654.68 615.37 L662.88 614.00 L671.08 612.58 L679.28 611.10 L687.48 609.57 L695.68 607.97 L703.88 606.31 L712.08 604.57 L720.28 602.74 L728.48 600.83 L736.68 598.82 L744.88 596.70 L753.08 594.45 L761.27 592.07 L769.47 589.54 L777.67 586.82 L785.87 583.90 L794.07 580.74 L794.07 580.74 L794.55 580.55 L795.03 580.36 L795.52 580.16 L796.00 579.96 L796.48 579.77 L796.96 579.57 L797.44 579.37 L797.92 579.17 L798.41 578.97 L798.89 578.76 L799.37 578.56 L799.85 578.36 L800.33 578.15 L800.81 577.94 L801.30 577.73 L801.78 577.52 L802.26 577.31 L802.74 577.10 L803.22 576.89 L803.70 576.68 L804.19 576.46 L804.67 576.24 L805.15 576.03 L805.63 575.81 L806.11 575.59 L806.59 575.37 L807.08 575.14 L807.56 574.92 L808.04 574.70 L808.52 574.47 L809.00 574.24 L809.48 574.01 L809.96 573.78 L810.45 573.55 L810.93 573.32 L811.41 573.08 L811.89 572.85 L812.37 572.61 L812.85 572.37 L813.34 572.13 L813.82 571.89 L814.30 571.64 L814.78 571.40 L815.26 571.15 L815.74 570.91 L816.23 570.66 L816.71 570.40 L817.19 570.15 L817.67 569.90 L818.15 569.64 L818.63 569.38 L819.12 569.12 L819.60 568.86 L820.08 568.60 L820.56 568.33 L821.04 568.07 L821.52 567.80 L822.01 567.53 L822.49 567.25 L822.97 566.98 L823.45 566.70 L823.93 566.43 L824.41 566.15 L824.90 565.86 L825.38 565.58 L825.86 565.29 L826.34 565.00 L826.82 564.71 L827.30 564.42 L827.78 564.12 L828.27 563.83 L828.75 563.53 L829.23 563.22 L829.71 562.92 L830.19 562.61 L830.67 562.30 L831.16 561.99 L831.64 561.68 L832.12 561.36 L832.60 561.04 L833.08 560.72 L833.56 560.39 L834.05 560.07 L834.53 559.74 L835.01 559.40 L835.49 559.07 L835.97 558.73 L836.45 558.39 L836.94 558.04 L837.42 557.69 L837.90 557.34 L838.38 556.99 L838.86 556.63 L839.34 556.27 L839.83 555.90 L840.31 555.54 L840.79 555.16 L841.27 554.79 L841.75 554.41 L842.23 554.03 L842.71 553.64 L843.20 553.25 L843.68 552.86 L844.16 552.46 L844.64 552.06 L845.12 551.65 L845.60 551.24 L846.09 550.82 L846.57 550.40 L847.05 549.98 L847.53 549.55 L848.01 549.12 L848.49 548.68 L848.98 548.23 L849.46 547.79 L849.94 547.33 L850.42 546.87 L850.90 546.41 L851.38 545.94 L851.87 545.46 L852.35 544.98 L852.83 544.49 L853.31 544.00 L853.79 543.49 L854.27 542.99 L854.76 542.47 L855.24 541.95 L855.72 541.42 L856.20 540.89 L856.68 540.35 L857.16 539.79 L857.65 539.24 L858.13 538.67 L858.61 538.09 L859.09 537.51 L859.57 536.92 L860.05 536.32 L860.53 535.70 L861.02 535.08 L861.50 534.45 L861.98 533.81 L862.46 533.16 L862.94 532.49 L863.42 531.82 L863.91 531.13 L864.39 530.43 L864.87 529.72 L865.35 528.99 L865.83 528.26 L866.31 527.50 L866.80 526.73 L867.28 525.95 L867.76 525.15 L868.24 524.33 L868.72 523.50 L869.20 522.64 L869.69 521.77 L870.17 520.88 L870.65 519.97 L871.13 519.03 L871.61 518.07 L872.09 517.09 L872.58 516.08 L873.06 515.05 L873.54 513.98 L874.02 512.89 L874.50 511.76 L874.98 510.60 L875.46 509.41 L875.95 508.18 L876.43 506.90 L876.91 505.59 L877.39 504.23 L877.87 502.82 L878.35 501.35 L878.84 499.83 L879.32 498.24 L879.80 496.59 L880.28 494.87 L880.76 493.06 L881.24 491.17 L881.73 489.18 L882.21 487.08 L882.69 484.86 L883.17 482.51 L883.65 480.01 L884.13 477.33 L884.62 474.45 L885.10 471.35 L885.58 467.97 L886.06 464.28 L886.54 460.19 L887.02 455.62 L887.51 450.45 L887.99 444.47 L888.47 437.40 L888.95 430.00 L889.43 430.00 L889.91 430.00" fill="none" stroke="#fff" stroke-width="2.8" stroke-dasharray="11.5 10.3" stroke-dashoffset="-2.63"/>
<rect x="295" y="430" width="1" height="195" fill="#262626"/>
<rect x="295" y="624" width="596.0" height="1" fill="#262626"/>
<rect x="295" y="619" width="1" height="5" fill="#262626"/>
<rect x="360" y="619" width="1" height="5" fill="#262626"/>
<rect x="424" y="619" width="1" height="5" fill="#262626"/>
<rect x="489" y="619" width="1" height="5" fill="#262626"/>
<rect x="553" y="619" width="1" height="5" fill="#262626"/>
<rect x="618" y="619" width="1" height="5" fill="#262626"/>
<rect x="682" y="619" width="1" height="5" fill="#262626"/>
<rect x="747" y="619" width="1" height="5" fill="#262626"/>
<rect x="811" y="619" width="1" height="5" fill="#262626"/>
<rect x="876" y="619" width="1" height="5" fill="#262626"/>
<rect x="296" y="609" width="2" height="1" fill="#262626"/>
<rect x="296" y="598" width="2" height="1" fill="#262626"/>
<rect x="296" y="589" width="2" height="1" fill="#262626"/>
<rect x="296" y="582" width="2" height="1" fill="#262626"/>
<rect x="296" y="576" width="2" height="1" fill="#262626"/>
<rect x="296" y="571" width="2" height="1" fill="#262626"/>
<rect x="296" y="566" width="2" height="1" fill="#262626"/>
<rect x="296" y="562" width="5" height="1" fill="#262626"/>
<rect x="296" y="535" width="2" height="1" fill="#262626"/>
<rect x="296" y="519" width="2" height="1" fill="#262626"/>
<rect x="296" y="508" width="2" height="1" fill="#262626"/>
<rect x="296" y="500" width="2" height="1" fill="#262626"/>
<rect x="296" y="493" width="2" height="1" fill="#262626"/>
<rect x="296" y="487" width="2" height="1" fill="#262626"/>
<rect x="296" y="481" width="2" height="1" fill="#262626"/>
<rect x="296" y="477" width="2" height="1" fill="#262626"/>
<rect x="296" y="473" width="5" height="1" fill="#262626"/>
<rect x="296" y="446" width="2" height="1" fill="#262626"/>
<rect x="296" y="430" width="2" height="1" fill="#262626"/>
<rect x="902.5" y="188.5" width="20" height="178.0" fill="url(#cbg)" stroke="#262626" stroke-width="1"/>
<rect x="920" y="342" width="2" height="1" fill="#262626"/>
<rect x="920" y="317" width="2" height="1" fill="#262626"/>
<rect x="920" y="292" width="2" height="1" fill="#262626"/>
<rect x="920" y="267" width="2" height="1" fill="#262626"/>
<rect x="920" y="242" width="2" height="1" fill="#262626"/>
<rect x="920" y="217" width="2" height="1" fill="#262626"/>
<rect x="920" y="191" width="2" height="1" fill="#262626"/>
<rect x="902.5" y="430" width="20" height="194" fill="url(#cbg)" stroke="#262626" stroke-width="1"/>
<rect x="920" y="596" width="2" height="1" fill="#262626"/>
<rect x="920" y="569" width="2" height="1" fill="#262626"/>
<rect x="920" y="542" width="2" height="1" fill="#262626"/>
<rect x="920" y="515" width="2" height="1" fill="#262626"/>
<rect x="920" y="488" width="2" height="1" fill="#262626"/>
<rect x="920" y="460" width="2" height="1" fill="#262626"/>
<rect x="920" y="433" width="2" height="1" fill="#262626"/>
</svg>
<style>
.tk{position:absolute;font-size:11px;line-height:11px;color:#404040;white-space:nowrap;width:0;text-align:center}
.tk span{display:inline-block;transform:translateX(-50%)}
.yt{position:absolute;font-size:11.5px;line-height:12px;color:#404040;white-space:nowrap}
.yt sup{font-size:7px;vertical-align:0;position:relative;top:-5px;margin-left:0.3px}
.ct{position:absolute;font-size:11px;line-height:11px;color:#404040;white-space:nowrap}
.ttl{position:absolute;font-size:13px;line-height:13px;font-weight:bold;color:#1a1a1a;white-space:nowrap;width:0;text-align:center}
.ttl span{display:inline-block;transform:translateX(-50%)}
.rot{position:absolute;white-space:nowrap;color:#404040;width:0;height:0}
.rot span{position:absolute;display:block;transform:translate(-50%,-50%) rotate(-90deg)}
</style>
<div class="ttl" style="left:593.25px;top:156.10px"><span>Magnitude Scalogram</span></div>
<div class="ttl" style="left:593.25px;top:171.60px"><span>Positive Component (Counterclockwise Rotation)</span></div>
<div class="ttl" style="left:593.25px;top:414.10px"><span>Negative Component (Clockwise Rotation)</span></div>
<div class="tk" style="left:295.50px;top:372.39px"><span>0</span></div>
<div class="tk" style="left:360.04px;top:372.39px"><span>20</span></div>
<div class="tk" style="left:424.58px;top:372.39px"><span>40</span></div>
<div class="tk" style="left:489.12px;top:372.39px"><span>60</span></div>
<div class="tk" style="left:553.66px;top:372.39px"><span>80</span></div>
<div class="tk" style="left:618.20px;top:372.39px"><span>100</span></div>
<div class="tk" style="left:682.74px;top:372.39px"><span>120</span></div>
<div class="tk" style="left:747.28px;top:372.39px"><span>140</span></div>
<div class="tk" style="left:811.82px;top:372.39px"><span>160</span></div>
<div class="tk" style="left:876.36px;top:372.39px"><span>180</span></div>
<div class="tk" style="left:295.50px;top:630.49px"><span>0</span></div>
<div class="tk" style="left:360.04px;top:630.49px"><span>20</span></div>
<div class="tk" style="left:424.58px;top:630.49px"><span>40</span></div>
<div class="tk" style="left:489.12px;top:630.49px"><span>60</span></div>
<div class="tk" style="left:553.66px;top:630.49px"><span>80</span></div>
<div class="tk" style="left:618.20px;top:630.49px"><span>100</span></div>
<div class="tk" style="left:682.74px;top:630.49px"><span>120</span></div>
<div class="tk" style="left:747.28px;top:630.49px"><span>140</span></div>
<div class="tk" style="left:811.82px;top:630.49px"><span>160</span></div>
<div class="tk" style="left:876.36px;top:630.49px"><span>180</span></div>
<div class="tk" style="left:593.7px;top:386.90px;font-size:13px;line-height:13px"><span>Time (days)</span></div>
<div class="tk" style="left:593.7px;top:644.40px;font-size:13px;line-height:13px"><span>Time (days)</span></div>
<div class="rot" style="left:259.4px;top:278.0px;font-size:13px;line-height:13px"><span>Frequency (µHz)</span></div>
<div class="rot" style="left:952.2px;top:278.7px;font-size:11px;line-height:11px"><span>Magnitude</span></div>
<div class="rot" style="left:259.4px;top:527.0px;font-size:13px;line-height:13px"><span>Frequency (µHz)</span></div>
<div class="rot" style="left:952.2px;top:527.7px;font-size:11px;line-height:11px"><span>Magnitude</span></div>
<div class="yt" style="left:273px;top:221.74px">10<sup>1</sup></div>
<div class="yt" style="left:273px;top:303.74px">10<sup>0</sup></div>
<div class="yt" style="left:273px;top:466.74px">10<sup>1</sup></div>
<div class="yt" style="left:273px;top:556.14px">10<sup>0</sup></div>
<div class="ct" style="left:929px;top:336.81px">2</div>
<div class="ct" style="left:929px;top:311.69px">4</div>
<div class="ct" style="left:929px;top:286.57px">6</div>
<div class="ct" style="left:929px;top:261.45px">8</div>
<div class="ct" style="left:929px;top:236.33px">10</div>
<div class="ct" style="left:929px;top:211.21px">12</div>
<div class="ct" style="left:929px;top:186.09px">14</div>
<div class="ct" style="left:929px;top:590.63px">2</div>
<div class="ct" style="left:929px;top:563.53px">4</div>
<div class="ct" style="left:929px;top:536.43px">6</div>
<div class="ct" style="left:929px;top:509.33px">8</div>
<div class="ct" style="left:929px;top:482.23px">10</div>
<div class="ct" style="left:929px;top:455.13px">12</div>
<div class="ct" style="left:929px;top:428.03px">14</div>

</body></html>
